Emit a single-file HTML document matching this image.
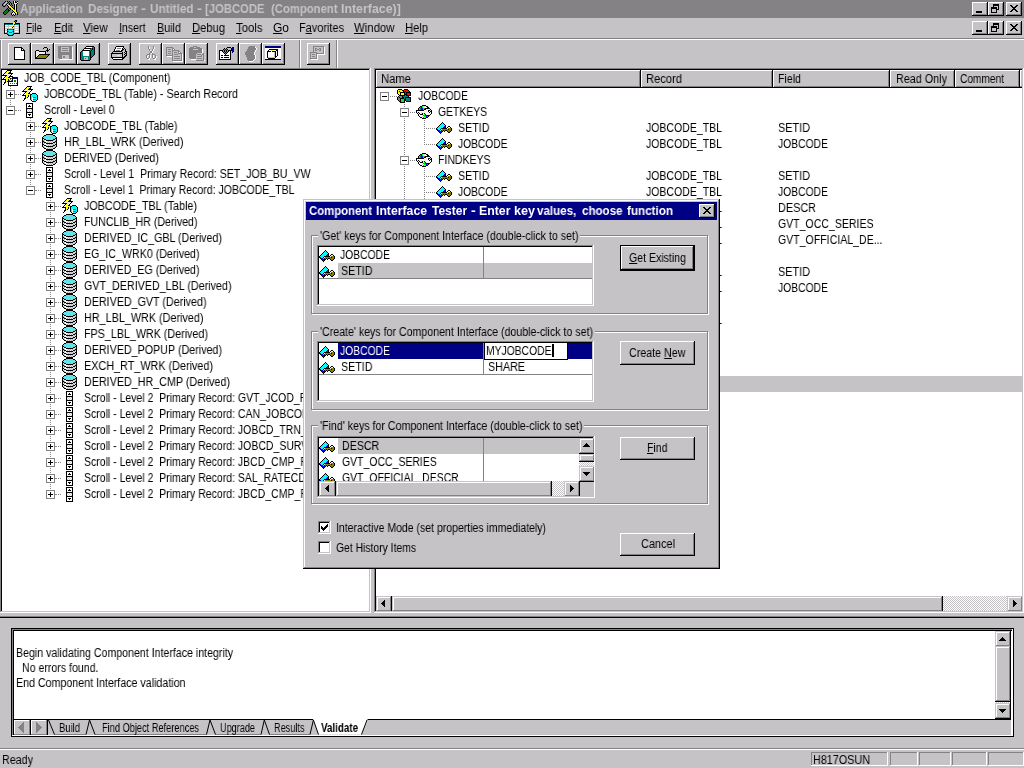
<!DOCTYPE html>
<html lang="en"><head><meta charset="utf-8"><title>Application Designer</title>
<style>
html,body{margin:0;padding:0}
body{width:1024px;height:768px;overflow:hidden;background:#c6c3c6;position:relative;font-family:"Liberation Sans",sans-serif;font-size:12px}
body div,body svg,body span.t{position:absolute}
span.t{white-space:pre;transform-origin:0 0;display:block;will-change:transform}
u{text-decoration:underline;text-underline-offset:1px}
</style></head>
<body>
<div style="left:0px;top:0px;width:1024px;height:18px;background:#848284;"></div><svg style="left:2px;top:1px" width="16" height="15" shape-rendering="crispEdges"><path fill="#000000" d="M3 0h1v1h-1zM5 0h1v1h-1zM7 0h1v1h-1zM11 0h1v1h-1zM13 0h1v1h-1zM15 0h1v1h-1zM2 1h1v1h-1zM6 1h1v1h-1zM8 1h1v1h-1zM11 1h1v1h-1zM13 1h2v1h-2zM1 2h1v1h-1zM5 2h1v1h-1zM7 2h1v1h-1zM9 2h1v1h-1zM11 2h1v1h-1zM15 2h1v1h-1zM0 3h1v1h-1zM4 3h1v1h-1zM7 3h1v1h-1zM9 3h1v1h-1zM12 3h1v1h-1zM14 3h1v1h-1zM0 4h1v1h-1zM3 4h1v1h-1zM5 4h1v1h-1zM8 4h1v1h-1zM10 4h1v1h-1zM12 4h1v1h-1zM14 4h1v1h-1zM1 5h2v1h-2zM6 5h1v1h-1zM9 5h1v1h-1zM12 5h1v1h-1zM14 5h1v1h-1zM6 6h1v1h-1zM10 6h1v1h-1zM12 6h1v1h-1zM14 6h1v1h-1zM5 7h1v1h-1zM7 7h2v1h-2zM11 7h2v1h-2zM14 7h1v1h-1zM4 8h1v1h-1zM6 8h1v1h-1zM8 8h1v1h-1zM12 8h1v1h-1zM14 8h1v1h-1zM3 9h1v1h-1zM6 9h2v1h-2zM10 9h1v1h-1zM14 9h1v1h-1zM2 10h1v1h-1zM6 10h1v1h-1zM11 10h1v1h-1zM14 10h1v1h-1zM1 11h1v1h-1zM5 11h1v1h-1zM10 11h1v1h-1zM12 11h1v1h-1zM15 11h1v1h-1zM1 12h1v1h-1zM4 12h1v1h-1zM9 12h1v1h-1zM13 12h1v1h-1zM15 12h1v1h-1zM2 13h2v1h-2zM9 13h1v1h-1zM11 13h1v1h-1zM13 13h1v1h-1zM15 13h1v1h-1zM10 14h1v1h-1zM12 14h1v1h-1z"/><path fill="#848284" d="M4 0h1v1h-1zM6 0h1v1h-1zM3 1h1v1h-1zM5 1h1v1h-1zM7 1h1v1h-1zM2 2h1v1h-1zM4 2h1v1h-1zM6 2h1v1h-1zM8 2h1v1h-1zM1 3h1v1h-1zM3 3h1v1h-1zM6 3h1v1h-1zM8 3h1v1h-1zM10 3h1v1h-1zM1 4h2v1h-2zM9 4h1v1h-1zM10 5h1v1h-1zM7 6h1v1h-1zM6 7h1v1h-1zM7 8h1v1h-1z"/><path fill="#ffffff" d="M12 0h1v1h-1z"/><path fill="#e7e3e7" d="M4 1h1v1h-1zM12 1h1v1h-1zM15 1h1v1h-1zM3 2h1v1h-1zM12 2h3v1h-3zM2 3h1v1h-1zM13 3h1v1h-1zM13 4h1v1h-1zM13 5h1v1h-1zM13 6h1v1h-1zM13 7h1v1h-1zM13 8h1v1h-1zM13 9h1v1h-1zM11 11h1v1h-1zM10 12h3v1h-3zM10 13h1v1h-1zM12 13h1v1h-1z"/><path fill="#ffff00" d="M5 3h1v1h-1zM6 4h2v1h-2zM7 5h2v1h-2zM8 6h2v1h-2zM9 7h2v1h-2zM10 8h2v1h-2zM11 9h2v1h-2zM12 10h2v1h-2zM13 11h2v1h-2zM14 12h1v1h-1z"/><path fill="#008200" d="M5 8h1v1h-1zM4 9h2v1h-2zM3 10h3v1h-3zM2 11h3v1h-3zM2 12h2v1h-2z"/></svg>
<span class="t" style="left:20.25px;top:3px;font-size:12px;line-height:12px;color:#c6c3c6;transform:scaleX(0.9603);font-weight:bold;">Application</span>
<span class="t" style="left:87.75px;top:3px;font-size:12px;line-height:12px;color:#c6c3c6;transform:scaleX(0.9687);font-weight:bold;">Designer</span>
<span class="t" style="left:141px;top:3px;font-size:12px;line-height:12px;color:#c6c3c6;transform:scaleX(1.2500);font-weight:bold;">-</span>
<span class="t" style="left:149.5px;top:3px;font-size:12px;line-height:12px;color:#c6c3c6;transform:scaleX(0.9738);font-weight:bold;">Untitled</span>
<span class="t" style="left:196.5px;top:3px;font-size:12px;line-height:12px;color:#c6c3c6;transform:scaleX(1.2500);font-weight:bold;">-</span>
<span class="t" style="left:204.5px;top:3px;font-size:12px;line-height:12px;color:#c6c3c6;transform:scaleX(0.9393);font-weight:bold;">[JOBCODE</span>
<span class="t" style="left:270.5px;top:3px;font-size:12px;line-height:12px;color:#c6c3c6;transform:scaleX(0.9412);font-weight:bold;">(Component</span>
<span class="t" style="left:341.25px;top:3px;font-size:12px;line-height:12px;color:#c6c3c6;transform:scaleX(1.0299);font-weight:bold;">Interface)]</span>
<div style="left:972px;top:2px;width:16px;height:14px;background:#c6c3c6;"></div>
<div style="left:972px;top:2px;width:16px;height:1px;background:#ffffff;"></div>
<div style="left:972px;top:2px;width:1px;height:14px;background:#ffffff;"></div>
<div style="left:972px;top:15px;width:16px;height:1px;background:#000000;"></div>
<div style="left:987px;top:2px;width:1px;height:14px;background:#000000;"></div>
<div style="left:973px;top:14px;width:14px;height:1px;background:#848284;"></div>
<div style="left:986px;top:3px;width:1px;height:12px;background:#848284;"></div>
<div style="left:976px;top:11px;width:6px;height:2px;background:#000000;"></div>
<div style="left:988px;top:2px;width:16px;height:14px;background:#c6c3c6;"></div>
<div style="left:988px;top:2px;width:16px;height:1px;background:#ffffff;"></div>
<div style="left:988px;top:2px;width:1px;height:14px;background:#ffffff;"></div>
<div style="left:988px;top:15px;width:16px;height:1px;background:#000000;"></div>
<div style="left:1003px;top:2px;width:1px;height:14px;background:#000000;"></div>
<div style="left:989px;top:14px;width:14px;height:1px;background:#848284;"></div>
<div style="left:1002px;top:3px;width:1px;height:12px;background:#848284;"></div>
<div style="left:993px;top:4px;width:6px;height:2px;background:#000000;"></div>
<div style="left:993px;top:4px;width:6px;height:1px;background:#000000;"></div>
<div style="left:993px;top:4px;width:1px;height:6px;background:#000000;"></div>
<div style="left:993px;top:9px;width:6px;height:1px;background:#000000;"></div>
<div style="left:998px;top:4px;width:1px;height:6px;background:#000000;"></div>
<div style="left:991px;top:7px;width:6px;height:6px;background:#c6c3c6;"></div>
<div style="left:991px;top:7px;width:6px;height:2px;background:#000000;"></div>
<div style="left:991px;top:7px;width:6px;height:1px;background:#000000;"></div>
<div style="left:991px;top:7px;width:1px;height:6px;background:#000000;"></div>
<div style="left:991px;top:12px;width:6px;height:1px;background:#000000;"></div>
<div style="left:996px;top:7px;width:1px;height:6px;background:#000000;"></div>
<div style="left:1006px;top:2px;width:16px;height:14px;background:#c6c3c6;"></div>
<div style="left:1006px;top:2px;width:16px;height:1px;background:#ffffff;"></div>
<div style="left:1006px;top:2px;width:1px;height:14px;background:#ffffff;"></div>
<div style="left:1006px;top:15px;width:16px;height:1px;background:#000000;"></div>
<div style="left:1021px;top:2px;width:1px;height:14px;background:#000000;"></div>
<div style="left:1007px;top:14px;width:14px;height:1px;background:#848284;"></div>
<div style="left:1020px;top:3px;width:1px;height:12px;background:#848284;"></div><svg style="left:1010px;top:5px" width="8" height="7" shape-rendering="crispEdges"><path d="M0 0h2v1h-2zM6 0h2v1h-2zM1 1h2v1h-2zM5 1h2v1h-2zM2 2h4v1h-4zM3 3h2v1h-2zM2 4h4v1h-4zM1 5h2v1h-2zM5 5h2v1h-2zM0 6h2v1h-2zM6 6h2v1h-2z" fill="#000"/></svg>
<svg style="left:4px;top:20px" width="16" height="16" shape-rendering="crispEdges"><path fill="#000000" d="M11 0h2v1h-2zM10 1h1v1h-1zM12 1h1v1h-1zM11 2h1v1h-1zM0 3h9v1h-9zM11 3h5v1h-5zM0 4h1v1h-1zM10 4h1v1h-1zM15 4h1v1h-1zM0 5h1v1h-1zM15 5h1v1h-1zM0 6h1v1h-1zM9 6h1v1h-1zM15 6h1v1h-1zM0 7h1v1h-1zM8 7h1v1h-1zM15 7h1v1h-1zM0 8h1v1h-1zM15 8h1v1h-1zM0 9h1v1h-1zM3 9h1v1h-1zM9 9h1v1h-1zM15 9h1v1h-1zM0 10h1v1h-1zM15 10h1v1h-1zM0 11h1v1h-1zM3 11h1v1h-1zM9 11h1v1h-1zM15 11h1v1h-1zM0 12h1v1h-1zM15 12h1v1h-1zM0 13h3v1h-3zM10 13h6v1h-6zM3 14h1v1h-1zM9 14h1v1h-1zM4 15h5v1h-5z"/><path fill="#ff00ff" d="M11 1h1v1h-1z"/><path fill="#ffff00" d="M10 2h1v1h-1zM9 3h2v1h-2zM9 4h1v1h-1zM8 5h2v1h-2zM8 6h1v1h-1z"/><path fill="#008284" d="M1 4h8v1h-8zM11 4h4v1h-4zM4 9h5v1h-5zM3 10h1v1h-1zM9 10h1v1h-1zM4 11h1v1h-1zM8 11h1v1h-1zM3 12h1v1h-1zM5 12h3v1h-3zM9 12h1v1h-1zM3 13h1v1h-1zM9 13h1v1h-1zM4 14h1v1h-1zM8 14h1v1h-1z"/><path fill="#ffffff" d="M1 5h3v1h-3zM5 5h3v1h-3zM11 5h3v1h-3zM1 7h3v1h-3zM5 7h3v1h-3zM9 7h1v1h-1zM11 7h3v1h-3zM1 9h2v1h-2zM11 9h3v1h-3zM1 11h2v1h-2zM11 11h3v1h-3z"/><path fill="#c6c3c6" d="M4 5h1v1h-1zM10 5h1v1h-1zM14 5h1v1h-1zM1 6h7v1h-7zM10 6h5v1h-5zM4 7h1v1h-1zM10 7h1v1h-1zM14 7h1v1h-1zM1 8h14v1h-14zM10 9h1v1h-1zM14 9h1v1h-1zM1 10h2v1h-2zM10 10h5v1h-5zM10 11h1v1h-1zM14 11h1v1h-1zM1 12h2v1h-2zM10 12h5v1h-5z"/><path fill="#00ffff" d="M4 10h5v1h-5zM5 11h3v1h-3zM4 12h1v1h-1zM8 12h1v1h-1zM4 13h5v1h-5zM5 14h3v1h-3z"/></svg>
<span class="t" style="left:26px;top:22px;font-size:12px;line-height:12px;color:#000000;transform:scaleX(0.8265);"><u>F</u>ile</span>
<span class="t" style="left:53.5px;top:22px;font-size:12px;line-height:12px;color:#000000;transform:scaleX(0.9177);"><u>E</u>dit</span>
<span class="t" style="left:83px;top:22px;font-size:12px;line-height:12px;color:#000000;transform:scaleX(0.9492);"><u>V</u>iew</span>
<span class="t" style="left:118.5px;top:22px;font-size:12px;line-height:12px;color:#000000;transform:scaleX(0.8824);"><u>I</u>nsert</span>
<span class="t" style="left:156.5px;top:22px;font-size:12px;line-height:12px;color:#000000;transform:scaleX(0.8988);"><u>B</u>uild</span>
<span class="t" style="left:191.5px;top:22px;font-size:12px;line-height:12px;color:#000000;transform:scaleX(0.9329);"><u>D</u>ebug</span>
<span class="t" style="left:235.5px;top:22px;font-size:12px;line-height:12px;color:#000000;transform:scaleX(0.9459);"><u>T</u>ools</span>
<span class="t" style="left:273px;top:22px;font-size:12px;line-height:12px;color:#000000;transform:scaleX(0.9981);"><u>G</u>o</span>
<span class="t" style="left:299px;top:22px;font-size:12px;line-height:12px;color:#000000;transform:scaleX(0.9114);">F<u>a</u>vorites</span>
<span class="t" style="left:354px;top:22px;font-size:12px;line-height:12px;color:#000000;transform:scaleX(0.9488);"><u>W</u>indow</span>
<span class="t" style="left:405px;top:22px;font-size:12px;line-height:12px;color:#000000;transform:scaleX(0.9316);"><u>H</u>elp</span>
<div style="left:972px;top:21px;width:16px;height:14px;background:#c6c3c6;"></div>
<div style="left:972px;top:21px;width:16px;height:1px;background:#ffffff;"></div>
<div style="left:972px;top:21px;width:1px;height:14px;background:#ffffff;"></div>
<div style="left:972px;top:34px;width:16px;height:1px;background:#000000;"></div>
<div style="left:987px;top:21px;width:1px;height:14px;background:#000000;"></div>
<div style="left:973px;top:33px;width:14px;height:1px;background:#848284;"></div>
<div style="left:986px;top:22px;width:1px;height:12px;background:#848284;"></div>
<div style="left:976px;top:30px;width:6px;height:2px;background:#000000;"></div>
<div style="left:988px;top:21px;width:16px;height:14px;background:#c6c3c6;"></div>
<div style="left:988px;top:21px;width:16px;height:1px;background:#ffffff;"></div>
<div style="left:988px;top:21px;width:1px;height:14px;background:#ffffff;"></div>
<div style="left:988px;top:34px;width:16px;height:1px;background:#000000;"></div>
<div style="left:1003px;top:21px;width:1px;height:14px;background:#000000;"></div>
<div style="left:989px;top:33px;width:14px;height:1px;background:#848284;"></div>
<div style="left:1002px;top:22px;width:1px;height:12px;background:#848284;"></div>
<div style="left:993px;top:23px;width:6px;height:2px;background:#000000;"></div>
<div style="left:993px;top:23px;width:6px;height:1px;background:#000000;"></div>
<div style="left:993px;top:23px;width:1px;height:6px;background:#000000;"></div>
<div style="left:993px;top:28px;width:6px;height:1px;background:#000000;"></div>
<div style="left:998px;top:23px;width:1px;height:6px;background:#000000;"></div>
<div style="left:991px;top:26px;width:6px;height:6px;background:#c6c3c6;"></div>
<div style="left:991px;top:26px;width:6px;height:2px;background:#000000;"></div>
<div style="left:991px;top:26px;width:6px;height:1px;background:#000000;"></div>
<div style="left:991px;top:26px;width:1px;height:6px;background:#000000;"></div>
<div style="left:991px;top:31px;width:6px;height:1px;background:#000000;"></div>
<div style="left:996px;top:26px;width:1px;height:6px;background:#000000;"></div>
<div style="left:1006px;top:21px;width:16px;height:14px;background:#c6c3c6;"></div>
<div style="left:1006px;top:21px;width:16px;height:1px;background:#ffffff;"></div>
<div style="left:1006px;top:21px;width:1px;height:14px;background:#ffffff;"></div>
<div style="left:1006px;top:34px;width:16px;height:1px;background:#000000;"></div>
<div style="left:1021px;top:21px;width:1px;height:14px;background:#000000;"></div>
<div style="left:1007px;top:33px;width:14px;height:1px;background:#848284;"></div>
<div style="left:1020px;top:22px;width:1px;height:12px;background:#848284;"></div><svg style="left:1010px;top:24px" width="8" height="7" shape-rendering="crispEdges"><path d="M0 0h2v1h-2zM6 0h2v1h-2zM1 1h2v1h-2zM5 1h2v1h-2zM2 2h4v1h-4zM3 3h2v1h-2zM2 4h4v1h-4zM1 5h2v1h-2zM5 5h2v1h-2zM0 6h2v1h-2zM6 6h2v1h-2z" fill="#000"/></svg>
<div style="left:0px;top:38px;width:1024px;height:1px;background:#848284;"></div>
<div style="left:0px;top:39px;width:1024px;height:1px;background:#ffffff;"></div>
<div style="left:0px;top:40px;width:1px;height:28px;background:#848284;"></div>
<div style="left:1px;top:40px;width:1px;height:28px;background:#ffffff;"></div>
<div style="left:8px;top:43px;width:23px;height:22px;background:#c6c3c6;"></div>
<div style="left:8px;top:43px;width:23px;height:1px;background:#ffffff;"></div>
<div style="left:8px;top:43px;width:1px;height:22px;background:#ffffff;"></div>
<div style="left:8px;top:64px;width:23px;height:1px;background:#000000;"></div>
<div style="left:30px;top:43px;width:1px;height:22px;background:#000000;"></div>
<div style="left:9px;top:63px;width:21px;height:1px;background:#848284;"></div>
<div style="left:29px;top:44px;width:1px;height:20px;background:#848284;"></div><svg style="left:14px;top:47px" width="11" height="13" shape-rendering="crispEdges"><path fill="#000000" d="M0 0h8v1h-8zM0 1h1v1h-1zM7 1h2v1h-2zM0 2h1v1h-1zM7 2h1v1h-1zM9 2h1v1h-1zM0 3h1v1h-1zM7 3h4v1h-4zM0 4h1v1h-1zM10 4h1v1h-1zM0 5h1v1h-1zM10 5h1v1h-1zM0 6h1v1h-1zM10 6h1v1h-1zM0 7h1v1h-1zM10 7h1v1h-1zM0 8h1v1h-1zM10 8h1v1h-1zM0 9h1v1h-1zM10 9h1v1h-1zM0 10h1v1h-1zM10 10h1v1h-1zM0 11h1v1h-1zM10 11h1v1h-1zM0 12h11v1h-11z"/><path fill="#ffffff" d="M1 1h6v1h-6zM1 2h6v1h-6zM8 2h1v1h-1zM1 3h6v1h-6zM1 4h9v1h-9zM1 5h9v1h-9zM1 6h9v1h-9zM1 7h9v1h-9zM1 8h9v1h-9zM1 9h9v1h-9zM1 10h9v1h-9zM1 11h9v1h-9z"/></svg>
<div style="left:31px;top:43px;width:23px;height:22px;background:#c6c3c6;"></div>
<div style="left:31px;top:43px;width:23px;height:1px;background:#ffffff;"></div>
<div style="left:31px;top:43px;width:1px;height:22px;background:#ffffff;"></div>
<div style="left:31px;top:64px;width:23px;height:1px;background:#000000;"></div>
<div style="left:53px;top:43px;width:1px;height:22px;background:#000000;"></div>
<div style="left:32px;top:63px;width:21px;height:1px;background:#848284;"></div>
<div style="left:52px;top:44px;width:1px;height:20px;background:#848284;"></div><svg style="left:35px;top:47px" width="15" height="12" shape-rendering="crispEdges"><path fill="#000000" d="M9 0h3v1h-3zM8 1h1v1h-1zM12 1h1v1h-1zM12 2h1v1h-1zM14 2h1v1h-1zM1 3h3v1h-3zM11 3h3v1h-3zM0 4h1v1h-1zM4 4h7v1h-7zM12 4h1v1h-1zM0 5h1v1h-1zM10 5h1v1h-1zM0 6h1v1h-1zM10 6h1v1h-1zM0 7h1v1h-1zM4 7h11v1h-11zM0 8h1v1h-1zM3 8h1v1h-1zM13 8h1v1h-1zM0 9h1v1h-1zM2 9h1v1h-1zM12 9h1v1h-1zM0 10h2v1h-2zM11 10h1v1h-1zM0 11h11v1h-11z"/><path fill="#ffff00" d="M1 4h1v1h-1zM3 4h1v1h-1zM2 5h1v1h-1zM4 5h1v1h-1zM6 5h1v1h-1zM8 5h1v1h-1zM1 6h1v1h-1zM3 6h1v1h-1zM5 6h1v1h-1zM7 6h1v1h-1zM9 6h1v1h-1zM2 7h1v1h-1zM1 8h1v1h-1z"/><path fill="#ffffff" d="M2 4h1v1h-1zM1 5h1v1h-1zM3 5h1v1h-1zM5 5h1v1h-1zM7 5h1v1h-1zM9 5h1v1h-1zM2 6h1v1h-1zM4 6h1v1h-1zM6 6h1v1h-1zM8 6h1v1h-1zM1 7h1v1h-1zM3 7h1v1h-1zM2 8h1v1h-1zM1 9h1v1h-1z"/><path fill="#848200" d="M4 8h9v1h-9zM3 9h9v1h-9zM2 10h9v1h-9z"/></svg>
<div style="left:54px;top:43px;width:23px;height:22px;background:#c6c3c6;"></div>
<div style="left:54px;top:43px;width:23px;height:1px;background:#ffffff;"></div>
<div style="left:54px;top:43px;width:1px;height:22px;background:#ffffff;"></div>
<div style="left:54px;top:64px;width:23px;height:1px;background:#000000;"></div>
<div style="left:76px;top:43px;width:1px;height:22px;background:#000000;"></div>
<div style="left:55px;top:63px;width:21px;height:1px;background:#848284;"></div>
<div style="left:75px;top:44px;width:1px;height:20px;background:#848284;"></div><svg style="left:58px;top:46px" width="15" height="14" shape-rendering="crispEdges"><path fill="#848284" d="M0 0h14v1h-14zM0 1h3v1h-3zM11 1h3v1h-3zM0 2h3v1h-3zM4 2h6v1h-6zM11 2h3v1h-3zM0 3h3v1h-3zM11 3h3v1h-3zM0 4h3v1h-3zM4 4h6v1h-6zM11 4h3v1h-3zM0 5h3v1h-3zM11 5h3v1h-3zM0 6h14v1h-14zM0 7h14v1h-14zM0 8h14v1h-14zM0 9h4v1h-4zM11 9h3v1h-3zM0 10h4v1h-4zM5 10h2v1h-2zM11 10h3v1h-3zM0 11h4v1h-4zM5 11h2v1h-2zM11 11h3v1h-3zM1 12h3v1h-3zM11 12h3v1h-3z"/><path fill="#c6c3c6" d="M3 1h8v1h-8zM3 2h1v1h-1zM10 2h1v1h-1zM3 3h8v1h-8zM3 4h1v1h-1zM10 4h1v1h-1zM3 5h8v1h-8zM4 9h7v1h-7zM4 10h1v1h-1zM7 10h4v1h-4zM4 11h1v1h-1zM7 11h4v1h-4zM4 12h7v1h-7z"/><path fill="#ffffff" d="M14 1h1v1h-1zM14 2h1v1h-1zM14 3h1v1h-1zM14 4h1v1h-1zM14 5h1v1h-1zM14 6h1v1h-1zM14 7h1v1h-1zM14 8h1v1h-1zM14 9h1v1h-1zM14 10h1v1h-1zM14 11h1v1h-1zM14 12h1v1h-1zM2 13h13v1h-13z"/></svg>
<div style="left:77px;top:43px;width:23px;height:22px;background:#c6c3c6;"></div>
<div style="left:77px;top:43px;width:23px;height:1px;background:#ffffff;"></div>
<div style="left:77px;top:43px;width:1px;height:22px;background:#ffffff;"></div>
<div style="left:77px;top:64px;width:23px;height:1px;background:#000000;"></div>
<div style="left:99px;top:43px;width:1px;height:22px;background:#000000;"></div>
<div style="left:78px;top:63px;width:21px;height:1px;background:#848284;"></div>
<div style="left:98px;top:44px;width:1px;height:20px;background:#848284;"></div><svg style="left:80px;top:46px" width="15" height="15" shape-rendering="crispEdges"><path fill="#000000" d="M6 0h8v1h-8zM5 1h1v1h-1zM14 1h1v1h-1zM4 2h7v1h-7zM12 2h1v1h-1zM14 2h1v1h-1zM3 3h1v1h-1zM12 3h1v1h-1zM14 3h1v1h-1zM2 4h8v1h-8zM11 4h1v1h-1zM14 4h1v1h-1zM1 5h1v1h-1zM10 5h1v1h-1zM14 5h1v1h-1zM0 6h1v1h-1zM10 6h1v1h-1zM14 6h1v1h-1zM0 7h1v1h-1zM10 7h1v1h-1zM14 7h1v1h-1zM0 8h1v1h-1zM10 8h1v1h-1zM14 8h1v1h-1zM0 9h1v1h-1zM10 9h1v1h-1zM13 9h1v1h-1zM0 10h1v1h-1zM10 10h1v1h-1zM12 10h1v1h-1zM0 11h1v1h-1zM10 11h2v1h-2zM0 12h1v1h-1zM10 12h1v1h-1zM0 13h1v1h-1zM10 13h1v1h-1zM1 14h9v1h-9z"/><path fill="#ffffff" d="M6 1h6v1h-6zM4 3h6v1h-6zM3 5h6v1h-6zM3 6h6v1h-6zM3 7h6v1h-6zM3 8h6v1h-6zM3 9h6v1h-6z"/><path fill="#008284" d="M12 1h2v1h-2zM11 2h1v1h-1zM13 2h1v1h-1zM10 3h2v1h-2zM13 3h1v1h-1zM10 4h1v1h-1zM12 4h2v1h-2zM2 5h1v1h-1zM9 5h1v1h-1zM11 5h3v1h-3zM1 6h2v1h-2zM9 6h1v1h-1zM11 6h3v1h-3zM1 7h2v1h-2zM9 7h1v1h-1zM11 7h3v1h-3zM1 8h2v1h-2zM9 8h1v1h-1zM11 8h3v1h-3zM1 9h2v1h-2zM9 9h1v1h-1zM11 9h2v1h-2zM1 10h9v1h-9zM11 10h1v1h-1zM1 11h3v1h-3zM8 11h2v1h-2zM1 12h3v1h-3zM5 12h1v1h-1zM8 12h2v1h-2zM1 13h3v1h-3zM8 13h2v1h-2z"/><path fill="#c6c3c6" d="M4 11h4v1h-4zM4 12h1v1h-1zM6 12h2v1h-2zM4 13h4v1h-4z"/></svg>
<div style="left:108px;top:43px;width:23px;height:22px;background:#c6c3c6;"></div>
<div style="left:108px;top:43px;width:23px;height:1px;background:#ffffff;"></div>
<div style="left:108px;top:43px;width:1px;height:22px;background:#ffffff;"></div>
<div style="left:108px;top:64px;width:23px;height:1px;background:#000000;"></div>
<div style="left:130px;top:43px;width:1px;height:22px;background:#000000;"></div>
<div style="left:109px;top:63px;width:21px;height:1px;background:#848284;"></div>
<div style="left:129px;top:44px;width:1px;height:20px;background:#848284;"></div><svg style="left:111px;top:46px" width="16" height="14" shape-rendering="crispEdges"><path fill="#000000" d="M5 0h8v1h-8zM4 1h1v1h-1zM12 1h1v1h-1zM4 2h1v1h-1zM11 2h1v1h-1zM13 2h1v1h-1zM3 3h1v1h-1zM11 3h2v1h-2zM14 3h1v1h-1zM3 4h1v1h-1zM10 4h2v1h-2zM14 4h1v1h-1zM2 5h9v1h-9zM14 5h2v1h-2zM1 6h1v1h-1zM11 6h1v1h-1zM13 6h1v1h-1zM15 6h1v1h-1zM0 7h12v1h-12zM14 7h2v1h-2zM0 8h1v1h-1zM11 8h1v1h-1zM13 8h1v1h-1zM15 8h1v1h-1zM0 9h1v1h-1zM11 9h1v1h-1zM14 9h2v1h-2zM0 10h1v1h-1zM11 10h1v1h-1zM13 10h2v1h-2zM0 11h14v1h-14zM1 12h1v1h-1zM11 12h2v1h-2zM2 13h10v1h-10z"/><path fill="#ffffff" d="M5 1h7v1h-7zM5 2h1v1h-1zM10 2h1v1h-1zM4 3h7v1h-7zM4 4h1v1h-1zM9 4h1v1h-1zM2 12h9v1h-9z"/><path fill="#848284" d="M6 2h4v1h-4zM5 4h4v1h-4z"/><path fill="#c6c3c6" d="M13 3h1v1h-1zM12 4h2v1h-2zM11 5h3v1h-3zM2 6h9v1h-9zM12 6h1v1h-1zM14 6h1v1h-1zM12 7h2v1h-2zM1 8h10v1h-10zM12 8h1v1h-1zM14 8h1v1h-1zM1 9h5v1h-5zM9 9h2v1h-2zM12 9h2v1h-2zM1 10h10v1h-10zM12 10h1v1h-1z"/><path fill="#ffff00" d="M6 9h3v1h-3z"/></svg>
<div style="left:139px;top:43px;width:23px;height:22px;background:#c6c3c6;"></div>
<div style="left:139px;top:43px;width:23px;height:1px;background:#ffffff;"></div>
<div style="left:139px;top:43px;width:1px;height:22px;background:#ffffff;"></div>
<div style="left:139px;top:64px;width:23px;height:1px;background:#000000;"></div>
<div style="left:161px;top:43px;width:1px;height:22px;background:#000000;"></div>
<div style="left:140px;top:63px;width:21px;height:1px;background:#848284;"></div>
<div style="left:160px;top:44px;width:1px;height:20px;background:#848284;"></div><svg style="left:146px;top:46px" width="11" height="14" shape-rendering="crispEdges"><path fill="#848284" d="M2 0h1v1h-1zM7 0h1v1h-1zM2 1h1v1h-1zM7 1h1v1h-1zM2 2h1v1h-1zM7 2h1v1h-1zM3 3h1v1h-1zM6 3h1v1h-1zM3 4h1v1h-1zM6 4h1v1h-1zM4 5h2v1h-2zM4 6h2v1h-2zM3 7h1v1h-1zM6 7h1v1h-1zM1 8h3v1h-3zM6 8h3v1h-3zM0 9h1v1h-1zM3 9h1v1h-1zM6 9h1v1h-1zM9 9h1v1h-1zM0 10h1v1h-1zM3 10h1v1h-1zM6 10h1v1h-1zM9 10h1v1h-1zM0 11h1v1h-1zM3 11h1v1h-1zM6 11h1v1h-1zM9 11h1v1h-1zM1 12h2v1h-2zM7 12h2v1h-2z"/><path fill="#ffffff" d="M3 1h1v1h-1zM8 1h1v1h-1zM3 2h1v1h-1zM8 2h1v1h-1zM7 3h1v1h-1zM4 4h1v1h-1zM7 4h1v1h-1zM6 5h1v1h-1zM6 6h1v1h-1zM5 7h1v1h-1zM2 9h1v1h-1zM4 9h1v1h-1zM7 9h1v1h-1zM1 10h1v1h-1zM4 10h1v1h-1zM7 10h1v1h-1zM10 10h1v1h-1zM1 11h1v1h-1zM4 11h1v1h-1zM7 11h1v1h-1zM10 11h1v1h-1zM3 12h1v1h-1zM9 12h1v1h-1zM2 13h2v1h-2zM8 13h2v1h-2z"/></svg>
<div style="left:162px;top:43px;width:23px;height:22px;background:#c6c3c6;"></div>
<div style="left:162px;top:43px;width:23px;height:1px;background:#ffffff;"></div>
<div style="left:162px;top:43px;width:1px;height:22px;background:#ffffff;"></div>
<div style="left:162px;top:64px;width:23px;height:1px;background:#000000;"></div>
<div style="left:184px;top:43px;width:1px;height:22px;background:#000000;"></div>
<div style="left:163px;top:63px;width:21px;height:1px;background:#848284;"></div>
<div style="left:183px;top:44px;width:1px;height:20px;background:#848284;"></div><svg style="left:166px;top:47px" width="17" height="15" shape-rendering="crispEdges"><path fill="#848284" d="M0 0h7v1h-7zM0 1h1v1h-1zM6 1h2v1h-2zM0 2h1v1h-1zM2 2h3v1h-3zM6 2h1v1h-1zM8 2h1v1h-1zM0 3h1v1h-1zM6 3h7v1h-7zM0 4h1v1h-1zM2 4h3v1h-3zM6 4h1v1h-1zM12 4h2v1h-2zM0 5h1v1h-1zM6 5h1v1h-1zM8 5h3v1h-3zM12 5h1v1h-1zM14 5h1v1h-1zM0 6h1v1h-1zM2 6h3v1h-3zM6 6h1v1h-1zM12 6h4v1h-4zM0 7h1v1h-1zM6 7h1v1h-1zM8 7h4v1h-4zM15 7h1v1h-1zM0 8h7v1h-7zM15 8h1v1h-1zM6 9h1v1h-1zM8 9h6v1h-6zM15 9h1v1h-1zM6 10h1v1h-1zM15 10h1v1h-1zM6 11h1v1h-1zM8 11h6v1h-6zM15 11h1v1h-1zM6 12h1v1h-1zM15 12h1v1h-1zM6 13h10v1h-10z"/><path fill="#c6c3c6" d="M1 1h5v1h-5zM1 2h1v1h-1zM5 2h1v1h-1zM1 3h5v1h-5zM1 4h1v1h-1zM5 4h1v1h-1zM7 4h5v1h-5zM1 5h5v1h-5zM7 5h1v1h-1zM11 5h1v1h-1zM1 6h1v1h-1zM5 6h1v1h-1zM7 6h5v1h-5zM1 7h5v1h-5zM7 7h1v1h-1zM12 7h3v1h-3zM7 8h8v1h-8zM7 9h1v1h-1zM14 9h1v1h-1zM7 10h8v1h-8zM7 11h1v1h-1zM14 11h1v1h-1zM7 12h8v1h-8z"/><path fill="#ffffff" d="M7 2h1v1h-1zM13 5h1v1h-1zM16 7h1v1h-1zM16 8h1v1h-1zM1 9h5v1h-5zM16 9h1v1h-1zM16 10h1v1h-1zM16 11h1v1h-1zM16 12h1v1h-1zM16 13h1v1h-1zM7 14h10v1h-10z"/></svg>
<div style="left:185px;top:43px;width:23px;height:22px;background:#c6c3c6;"></div>
<div style="left:185px;top:43px;width:23px;height:1px;background:#ffffff;"></div>
<div style="left:185px;top:43px;width:1px;height:22px;background:#ffffff;"></div>
<div style="left:185px;top:64px;width:23px;height:1px;background:#000000;"></div>
<div style="left:207px;top:43px;width:1px;height:22px;background:#000000;"></div>
<div style="left:186px;top:63px;width:21px;height:1px;background:#848284;"></div>
<div style="left:206px;top:44px;width:1px;height:20px;background:#848284;"></div><svg style="left:188px;top:46px" width="17" height="15" shape-rendering="crispEdges"><path fill="#848284" d="M5 0h4v1h-4zM2 1h4v1h-4zM8 1h4v1h-4zM1 2h13v1h-13zM1 3h4v1h-4zM10 3h4v1h-4zM1 4h13v1h-13zM1 5h13v1h-13zM1 6h13v1h-13zM1 7h8v1h-8zM15 7h1v1h-1zM1 8h7v1h-7zM9 8h4v1h-4zM14 8h2v1h-2zM1 9h7v1h-7zM13 9h1v1h-1zM15 9h1v1h-1zM1 10h7v1h-7zM9 10h5v1h-5zM15 10h1v1h-1zM1 11h7v1h-7zM15 11h1v1h-1zM2 12h6v1h-6zM9 12h5v1h-5zM15 12h1v1h-1zM15 13h1v1h-1zM8 14h8v1h-8z"/><path fill="#c6c3c6" d="M6 1h2v1h-2zM5 3h5v1h-5zM9 7h6v1h-6zM8 8h1v1h-1zM13 8h1v1h-1zM8 9h5v1h-5zM14 9h1v1h-1zM8 10h1v1h-1zM14 10h1v1h-1zM8 11h7v1h-7zM8 12h1v1h-1zM14 12h1v1h-1zM8 13h7v1h-7z"/><path fill="#ffffff" d="M14 3h1v1h-1zM14 4h1v1h-1zM14 5h1v1h-1zM14 6h1v1h-1zM3 13h5v1h-5zM16 14h1v1h-1z"/></svg>
<div style="left:216px;top:43px;width:23px;height:22px;background:#c6c3c6;"></div>
<div style="left:216px;top:43px;width:23px;height:1px;background:#ffffff;"></div>
<div style="left:216px;top:43px;width:1px;height:22px;background:#ffffff;"></div>
<div style="left:216px;top:64px;width:23px;height:1px;background:#000000;"></div>
<div style="left:238px;top:43px;width:1px;height:22px;background:#000000;"></div>
<div style="left:217px;top:63px;width:21px;height:1px;background:#848284;"></div>
<div style="left:237px;top:44px;width:1px;height:20px;background:#848284;"></div><svg style="left:219px;top:47px" width="16" height="13" shape-rendering="crispEdges"><path fill="#000000" d="M8 0h4v1h-4zM5 1h1v1h-1zM7 1h1v1h-1zM12 1h1v1h-1zM4 2h1v1h-1zM6 2h1v1h-1zM8 2h1v1h-1zM12 2h1v1h-1zM0 3h4v1h-4zM5 3h1v1h-1zM7 3h1v1h-1zM9 3h4v1h-4zM0 4h1v1h-1zM3 4h1v1h-1zM5 4h1v1h-1zM7 4h1v1h-1zM9 4h1v1h-1zM11 4h1v1h-1zM0 5h1v1h-1zM4 5h1v1h-1zM6 5h1v1h-1zM8 5h1v1h-1zM11 5h1v1h-1zM0 6h1v1h-1zM5 6h1v1h-1zM7 6h1v1h-1zM11 6h1v1h-1zM0 7h1v1h-1zM6 7h1v1h-1zM11 7h1v1h-1zM0 8h1v1h-1zM2 8h2v1h-2zM5 8h5v1h-5zM11 8h1v1h-1zM0 9h1v1h-1zM11 9h1v1h-1zM0 10h1v1h-1zM2 10h2v1h-2zM5 10h5v1h-5zM11 10h1v1h-1zM0 11h1v1h-1zM11 11h1v1h-1zM0 12h12v1h-12z"/><path fill="#000084" d="M13 0h2v1h-2zM13 1h2v1h-2zM13 2h2v1h-2zM13 3h2v1h-2zM13 4h2v1h-2zM13 5h1v1h-1z"/><path fill="#848284" d="M5 2h1v1h-1zM7 2h1v1h-1zM4 3h1v1h-1zM6 3h1v1h-1zM8 3h1v1h-1zM4 4h1v1h-1zM6 4h1v1h-1zM8 4h1v1h-1zM5 5h1v1h-1zM7 5h1v1h-1zM6 6h1v1h-1z"/><path fill="#ffffff" d="M1 4h2v1h-2zM10 4h1v1h-1zM1 5h3v1h-3zM9 5h2v1h-2zM1 6h4v1h-4zM8 6h3v1h-3zM1 7h5v1h-5zM7 7h4v1h-4zM1 8h1v1h-1zM4 8h1v1h-1zM10 8h1v1h-1zM1 9h10v1h-10zM1 10h1v1h-1zM4 10h1v1h-1zM10 10h1v1h-1zM1 11h10v1h-10z"/></svg>
<div style="left:239px;top:43px;width:23px;height:22px;background:#c6c3c6;"></div>
<div style="left:239px;top:43px;width:23px;height:1px;background:#ffffff;"></div>
<div style="left:239px;top:43px;width:1px;height:22px;background:#ffffff;"></div>
<div style="left:239px;top:64px;width:23px;height:1px;background:#000000;"></div>
<div style="left:261px;top:43px;width:1px;height:22px;background:#000000;"></div>
<div style="left:240px;top:63px;width:21px;height:1px;background:#848284;"></div>
<div style="left:260px;top:44px;width:1px;height:20px;background:#848284;"></div><svg style="left:245px;top:46px" width="12" height="16" shape-rendering="crispEdges"><path fill="#848284" d="M4 0h6v1h-6zM3 1h7v1h-7zM3 2h8v1h-8zM2 3h9v1h-9zM2 4h8v1h-8zM1 5h9v1h-9zM0 6h9v1h-9zM0 7h9v1h-9zM0 8h9v1h-9zM1 9h9v1h-9zM1 10h9v1h-9zM2 11h8v1h-8zM2 12h8v1h-8zM2 13h7v1h-7zM3 14h5v1h-5z"/><path fill="#ffffff" d="M10 1h1v1h-1zM11 2h1v1h-1zM11 3h1v1h-1zM10 4h1v1h-1zM10 5h1v1h-1zM9 6h1v1h-1zM9 7h1v1h-1zM9 8h1v1h-1zM10 9h1v1h-1zM10 10h1v1h-1zM10 11h1v1h-1zM10 12h1v1h-1zM9 13h1v1h-1zM8 14h1v1h-1zM4 15h4v1h-4z"/></svg>
<div style="left:262px;top:43px;width:23px;height:22px;background:#c6c3c6;"></div>
<div style="left:262px;top:43px;width:23px;height:1px;background:#ffffff;"></div>
<div style="left:262px;top:43px;width:1px;height:22px;background:#ffffff;"></div>
<div style="left:262px;top:64px;width:23px;height:1px;background:#000000;"></div>
<div style="left:284px;top:43px;width:1px;height:22px;background:#000000;"></div>
<div style="left:263px;top:63px;width:21px;height:1px;background:#848284;"></div>
<div style="left:283px;top:44px;width:1px;height:20px;background:#848284;"></div><svg style="left:265px;top:46px" width="16" height="14" shape-rendering="crispEdges"><path fill="#000084" d="M0 0h16v1h-16zM0 1h16v1h-16z"/><path fill="#ffffff" d="M0 2h16v1h-16zM0 3h4v1h-4zM13 3h3v1h-3zM0 4h3v1h-3zM4 4h2v1h-2zM8 4h3v1h-3zM13 4h3v1h-3zM0 5h2v1h-2zM11 5h1v1h-1zM13 5h3v1h-3zM0 6h2v1h-2zM3 6h6v1h-6zM11 6h1v1h-1zM13 6h3v1h-3zM0 7h2v1h-2zM3 7h6v1h-6zM11 7h1v1h-1zM13 7h3v1h-3zM0 8h2v1h-2zM3 8h6v1h-6zM11 8h1v1h-1zM13 8h3v1h-3zM0 9h2v1h-2zM3 9h6v1h-6zM11 9h1v1h-1zM13 9h3v1h-3zM0 10h2v1h-2zM3 10h6v1h-6zM12 10h4v1h-4zM0 11h2v1h-2zM11 11h5v1h-5zM0 12h3v1h-3zM10 12h6v1h-6z"/><path fill="#000000" d="M4 3h9v1h-9zM3 4h1v1h-1zM11 4h2v1h-2zM2 5h4v1h-4zM7 5h4v1h-4zM12 5h1v1h-1zM2 6h1v1h-1zM10 6h1v1h-1zM12 6h1v1h-1zM2 7h1v1h-1zM10 7h1v1h-1zM12 7h1v1h-1zM2 8h1v1h-1zM10 8h1v1h-1zM12 8h1v1h-1zM2 9h1v1h-1zM10 9h1v1h-1zM12 9h1v1h-1zM2 10h1v1h-1zM10 10h2v1h-2zM2 11h1v1h-1zM10 11h1v1h-1zM3 12h7v1h-7zM0 13h16v1h-16z"/><path fill="#ffff00" d="M6 4h2v1h-2zM6 5h1v1h-1z"/><path fill="#c6c3c6" d="M9 6h1v1h-1zM9 7h1v1h-1zM9 8h1v1h-1zM9 9h1v1h-1zM9 10h1v1h-1zM3 11h7v1h-7z"/></svg>
<div style="left:307px;top:43px;width:23px;height:22px;background:#c6c3c6;"></div>
<div style="left:307px;top:43px;width:23px;height:1px;background:#ffffff;"></div>
<div style="left:307px;top:43px;width:1px;height:22px;background:#ffffff;"></div>
<div style="left:307px;top:64px;width:23px;height:1px;background:#000000;"></div>
<div style="left:329px;top:43px;width:1px;height:22px;background:#000000;"></div>
<div style="left:308px;top:63px;width:21px;height:1px;background:#848284;"></div>
<div style="left:328px;top:44px;width:1px;height:20px;background:#848284;"></div><svg style="left:310px;top:46px" width="16" height="14" shape-rendering="crispEdges"><path fill="#848284" d="M3 0h11v1h-11zM3 1h1v1h-1zM13 1h1v1h-1zM3 2h1v1h-1zM5 2h2v1h-2zM9 2h2v1h-2zM13 2h1v1h-1zM3 3h1v1h-1zM5 3h1v1h-1zM7 3h2v1h-2zM10 3h1v1h-1zM13 3h1v1h-1zM3 4h1v1h-1zM5 4h2v1h-2zM9 4h2v1h-2zM13 4h1v1h-1zM3 5h1v1h-1zM13 5h1v1h-1zM0 6h7v1h-7zM13 6h1v1h-1zM0 7h1v1h-1zM6 7h8v1h-8zM0 8h1v1h-1zM2 8h3v1h-3zM6 8h1v1h-1zM0 9h1v1h-1zM6 9h1v1h-1zM0 10h1v1h-1zM2 10h3v1h-3zM6 10h1v1h-1zM0 11h1v1h-1zM6 11h1v1h-1zM0 12h7v1h-7z"/><path fill="#c6c3c6" d="M4 1h9v1h-9zM4 2h1v1h-1zM7 2h2v1h-2zM11 2h2v1h-2zM4 3h1v1h-1zM6 3h1v1h-1zM9 3h1v1h-1zM11 3h2v1h-2zM4 4h1v1h-1zM7 4h2v1h-2zM11 4h2v1h-2zM4 5h9v1h-9zM7 6h6v1h-6zM1 7h5v1h-5zM1 8h1v1h-1zM5 8h1v1h-1zM1 9h5v1h-5zM1 10h1v1h-1zM5 10h1v1h-1zM1 11h5v1h-5z"/><path fill="#ffffff" d="M14 1h1v1h-1zM14 2h1v1h-1zM14 3h1v1h-1zM14 4h1v1h-1zM14 5h1v1h-1zM14 6h1v1h-1zM14 7h1v1h-1zM7 8h8v1h-8zM7 9h1v1h-1zM7 10h1v1h-1zM7 11h1v1h-1zM7 12h1v1h-1zM1 13h7v1h-7z"/></svg>
<div style="left:299px;top:40px;width:1px;height:28px;background:#848284;"></div>
<div style="left:300px;top:40px;width:1px;height:28px;background:#ffffff;"></div>
<div style="left:336px;top:40px;width:1px;height:28px;background:#848284;"></div>
<div style="left:337px;top:40px;width:1px;height:28px;background:#ffffff;"></div>
<div style="left:0px;top:68px;width:371px;height:545px;background:#ffffff;"></div>
<div style="left:0px;top:68px;width:371px;height:1px;background:#848284;"></div>
<div style="left:0px;top:68px;width:1px;height:545px;background:#848284;"></div>
<div style="left:1px;top:69px;width:369px;height:1px;background:#000000;"></div>
<div style="left:1px;top:69px;width:1px;height:543px;background:#000000;"></div>
<div style="left:369px;top:69px;width:1px;height:543px;background:#c6c3c6;"></div>
<div style="left:370px;top:68px;width:1px;height:545px;background:#ffffff;"></div>
<div style="left:1px;top:611px;width:369px;height:1px;background:#c6c3c6;"></div>
<div style="left:0px;top:612px;width:371px;height:1px;background:#ffffff;"></div>
<div style="left:10px;top:86px;width:1px;height:25px;background:repeating-linear-gradient(to bottom,#848284 0 1px,transparent 1px 2px) 0 0px"></div>
<div style="left:30px;top:118px;width:1px;height:73px;background:repeating-linear-gradient(to bottom,#848284 0 1px,transparent 1px 2px) 0 0px"></div>
<div style="left:50px;top:198px;width:1px;height:297px;background:repeating-linear-gradient(to bottom,#848284 0 1px,transparent 1px 2px) 0 0px"></div><svg style="left:2px;top:76px" width="16" height="10" shape-rendering="crispEdges"><path fill="#000000" d="M5 0h6v1h-6zM5 1h1v1h-1zM10 1h1v1h-1zM5 2h1v1h-1zM10 2h1v1h-1zM5 3h1v1h-1zM10 3h1v1h-1zM15 3h1v1h-1zM5 4h1v1h-1zM10 4h1v1h-1zM15 4h1v1h-1zM6 5h5v1h-5zM15 5h1v1h-1zM6 6h1v1h-1zM15 6h1v1h-1zM6 7h1v1h-1zM15 7h1v1h-1zM6 8h1v1h-1zM15 8h1v1h-1zM6 9h10v1h-10z"/><path fill="#ffffff" d="M6 1h4v1h-4zM6 2h1v1h-1zM8 2h1v1h-1zM6 3h2v1h-2zM9 3h1v1h-1zM11 3h4v1h-4zM6 4h1v1h-1zM8 4h1v1h-1zM11 4h1v1h-1zM14 4h1v1h-1zM11 5h1v1h-1zM14 5h1v1h-1zM7 6h8v1h-8zM7 7h1v1h-1zM9 7h1v1h-1zM11 7h1v1h-1zM13 7h1v1h-1zM7 8h8v1h-8z"/><path fill="#000084" d="M11 1h5v1h-5zM11 2h5v1h-5z"/><path fill="#ff00ff" d="M7 2h1v1h-1zM9 2h1v1h-1zM8 3h1v1h-1zM7 4h1v1h-1zM9 4h1v1h-1z"/><path fill="#008200" d="M12 4h2v1h-2zM12 5h2v1h-2zM8 7h1v1h-1zM10 7h1v1h-1zM12 7h1v1h-1zM14 7h1v1h-1z"/></svg>
<svg style="left:2px;top:70px" width="11" height="15" shape-rendering="crispEdges"><path fill="#000000" d="M5 0h5v1h-5zM4 1h1v1h-1zM8 1h1v1h-1zM3 2h1v1h-1zM7 2h2v1h-2zM2 3h1v1h-1zM6 3h5v1h-5zM1 4h1v1h-1zM9 4h1v1h-1zM0 5h5v1h-5zM8 5h1v1h-1zM3 6h1v1h-1zM7 6h1v1h-1zM2 7h1v1h-1zM6 7h2v1h-2zM1 8h1v1h-1zM8 8h1v1h-1zM0 9h4v1h-4zM6 9h1v1h-1zM3 10h1v1h-1zM6 10h1v1h-1zM3 11h1v1h-1zM5 11h1v1h-1zM2 12h2v1h-2zM2 13h1v1h-1zM1 14h1v1h-1z"/><path fill="#ffffff" d="M5 1h1v1h-1zM7 1h1v1h-1zM5 2h1v1h-1zM5 3h1v1h-1zM2 4h1v1h-1zM4 4h1v1h-1zM6 4h1v1h-1zM8 4h1v1h-1zM7 5h1v1h-1zM6 6h1v1h-1zM3 7h1v1h-1zM5 7h1v1h-1zM2 8h1v1h-1zM5 8h1v1h-1z"/><path fill="#ffff00" d="M6 1h1v1h-1zM4 2h1v1h-1zM6 2h1v1h-1zM3 3h2v1h-2zM3 4h1v1h-1zM5 4h1v1h-1zM7 4h1v1h-1zM5 5h2v1h-2zM4 6h2v1h-2zM4 7h1v1h-1zM3 8h2v1h-2zM6 8h2v1h-2zM4 9h2v1h-2zM4 10h2v1h-2zM4 11h1v1h-1z"/></svg>
<span class="t" style="left:23.5px;top:72px;font-size:12px;line-height:12px;color:#000000;transform:scaleX(0.8810);">JOB_CODE_TBL (Component)</span>
<div style="left:15px;top:94px;width:7px;height:1px;background:repeating-linear-gradient(to right,#848284 0 1px,transparent 1px 2px) 1px 0"></div>
<div style="left:6px;top:90px;width:9px;height:9px;background:#ffffff;"></div>
<div style="left:6px;top:90px;width:9px;height:1px;background:#848284;"></div>
<div style="left:6px;top:90px;width:1px;height:9px;background:#848284;"></div>
<div style="left:6px;top:98px;width:9px;height:1px;background:#848284;"></div>
<div style="left:14px;top:90px;width:1px;height:9px;background:#848284;"></div>
<div style="left:8px;top:94px;width:5px;height:1px;background:#000000;"></div>
<div style="left:10px;top:92px;width:1px;height:5px;background:#000000;"></div><svg style="left:22px;top:86px" width="11" height="15" shape-rendering="crispEdges"><path fill="#000000" d="M5 0h5v1h-5zM4 1h1v1h-1zM8 1h1v1h-1zM3 2h1v1h-1zM7 2h2v1h-2zM2 3h1v1h-1zM6 3h5v1h-5zM1 4h1v1h-1zM9 4h1v1h-1zM0 5h5v1h-5zM8 5h1v1h-1zM3 6h1v1h-1zM7 6h1v1h-1zM2 7h1v1h-1zM6 7h2v1h-2zM1 8h1v1h-1zM8 8h1v1h-1zM0 9h4v1h-4zM6 9h1v1h-1zM3 10h1v1h-1zM6 10h1v1h-1zM3 11h1v1h-1zM5 11h1v1h-1zM2 12h2v1h-2zM2 13h1v1h-1zM1 14h1v1h-1z"/><path fill="#ffffff" d="M5 1h1v1h-1zM7 1h1v1h-1zM5 2h1v1h-1zM5 3h1v1h-1zM2 4h1v1h-1zM4 4h1v1h-1zM6 4h1v1h-1zM8 4h1v1h-1zM7 5h1v1h-1zM6 6h1v1h-1zM3 7h1v1h-1zM5 7h1v1h-1zM2 8h1v1h-1zM5 8h1v1h-1z"/><path fill="#ffff00" d="M6 1h1v1h-1zM4 2h1v1h-1zM6 2h1v1h-1zM3 3h2v1h-2zM3 4h1v1h-1zM5 4h1v1h-1zM7 4h1v1h-1zM5 5h2v1h-2zM4 6h2v1h-2zM4 7h1v1h-1zM3 8h2v1h-2zM6 8h2v1h-2zM4 9h2v1h-2zM4 10h2v1h-2zM4 11h1v1h-1z"/></svg>
<svg style="left:30px;top:93px" width="8" height="9" shape-rendering="crispEdges"><path fill="#000000" d="M2 0h4v1h-4zM1 1h1v1h-1zM6 1h1v1h-1zM0 2h1v1h-1zM7 2h1v1h-1zM0 3h1v1h-1zM7 3h1v1h-1zM0 4h1v1h-1zM7 4h1v1h-1zM0 5h1v1h-1zM7 5h1v1h-1zM0 6h1v1h-1zM7 6h1v1h-1zM1 7h1v1h-1zM6 7h1v1h-1zM2 8h4v1h-4z"/><path fill="#00ffff" d="M2 1h4v1h-4zM1 2h6v1h-6zM1 3h6v1h-6zM1 4h1v1h-1zM6 4h1v1h-1zM1 5h1v1h-1zM3 5h4v1h-4zM1 6h1v1h-1zM6 6h1v1h-1zM3 7h3v1h-3z"/><path fill="#ffffff" d="M2 4h1v1h-1zM2 5h1v1h-1zM2 6h1v1h-1zM2 7h1v1h-1z"/><path fill="#008284" d="M3 4h3v1h-3zM3 6h3v1h-3z"/></svg>
<span class="t" style="left:43.5px;top:88px;font-size:12px;line-height:12px;color:#000000;transform:scaleX(0.8941);">JOBCODE_TBL (Table) - Search Record</span>
<div style="left:15px;top:110px;width:7px;height:1px;background:repeating-linear-gradient(to right,#848284 0 1px,transparent 1px 2px) 1px 0"></div>
<div style="left:6px;top:106px;width:9px;height:9px;background:#ffffff;"></div>
<div style="left:6px;top:106px;width:9px;height:1px;background:#848284;"></div>
<div style="left:6px;top:106px;width:1px;height:9px;background:#848284;"></div>
<div style="left:6px;top:114px;width:9px;height:1px;background:#848284;"></div>
<div style="left:14px;top:106px;width:1px;height:9px;background:#848284;"></div>
<div style="left:8px;top:110px;width:5px;height:1px;background:#000000;"></div><svg style="left:26px;top:103px" width="7" height="15" shape-rendering="crispEdges"><path fill="#000000" d="M0 0h7v1h-7zM0 1h1v1h-1zM6 1h1v1h-1zM0 2h1v1h-1zM3 2h1v1h-1zM6 2h1v1h-1zM0 3h1v1h-1zM2 3h3v1h-3zM6 3h1v1h-1zM0 4h1v1h-1zM6 4h1v1h-1zM0 5h7v1h-7zM0 6h1v1h-1zM6 6h1v1h-1zM0 7h1v1h-1zM6 7h1v1h-1zM0 8h1v1h-1zM6 8h1v1h-1zM0 9h7v1h-7zM0 10h1v1h-1zM6 10h1v1h-1zM0 11h1v1h-1zM2 11h3v1h-3zM6 11h1v1h-1zM0 12h1v1h-1zM3 12h1v1h-1zM6 12h1v1h-1zM0 13h1v1h-1zM6 13h1v1h-1zM0 14h7v1h-7z"/><path fill="#ffffff" d="M1 1h5v1h-5zM1 2h2v1h-2zM4 2h2v1h-2zM1 3h1v1h-1zM5 3h1v1h-1zM1 4h5v1h-5zM2 6h1v1h-1zM4 6h1v1h-1zM1 7h1v1h-1zM3 7h1v1h-1zM5 7h1v1h-1zM2 8h1v1h-1zM4 8h1v1h-1zM1 10h5v1h-5zM1 11h1v1h-1zM5 11h1v1h-1zM1 12h2v1h-2zM4 12h2v1h-2zM1 13h5v1h-5z"/><path fill="#c6c3c6" d="M1 6h1v1h-1zM3 6h1v1h-1zM5 6h1v1h-1zM2 7h1v1h-1zM4 7h1v1h-1zM1 8h1v1h-1zM3 8h1v1h-1zM5 8h1v1h-1z"/></svg>
<span class="t" style="left:43.5px;top:104px;font-size:12px;line-height:12px;color:#000000;transform:scaleX(0.8882);">Scroll - Level 0</span>
<div style="left:35px;top:126px;width:7px;height:1px;background:repeating-linear-gradient(to right,#848284 0 1px,transparent 1px 2px) 1px 0"></div>
<div style="left:26px;top:122px;width:9px;height:9px;background:#ffffff;"></div>
<div style="left:26px;top:122px;width:9px;height:1px;background:#848284;"></div>
<div style="left:26px;top:122px;width:1px;height:9px;background:#848284;"></div>
<div style="left:26px;top:130px;width:9px;height:1px;background:#848284;"></div>
<div style="left:34px;top:122px;width:1px;height:9px;background:#848284;"></div>
<div style="left:28px;top:126px;width:5px;height:1px;background:#000000;"></div>
<div style="left:30px;top:124px;width:1px;height:5px;background:#000000;"></div><svg style="left:42px;top:118px" width="11" height="15" shape-rendering="crispEdges"><path fill="#000000" d="M5 0h5v1h-5zM4 1h1v1h-1zM8 1h1v1h-1zM3 2h1v1h-1zM7 2h2v1h-2zM2 3h1v1h-1zM6 3h5v1h-5zM1 4h1v1h-1zM9 4h1v1h-1zM0 5h5v1h-5zM8 5h1v1h-1zM3 6h1v1h-1zM7 6h1v1h-1zM2 7h1v1h-1zM6 7h2v1h-2zM1 8h1v1h-1zM8 8h1v1h-1zM0 9h4v1h-4zM6 9h1v1h-1zM3 10h1v1h-1zM6 10h1v1h-1zM3 11h1v1h-1zM5 11h1v1h-1zM2 12h2v1h-2zM2 13h1v1h-1zM1 14h1v1h-1z"/><path fill="#ffffff" d="M5 1h1v1h-1zM7 1h1v1h-1zM5 2h1v1h-1zM5 3h1v1h-1zM2 4h1v1h-1zM4 4h1v1h-1zM6 4h1v1h-1zM8 4h1v1h-1zM7 5h1v1h-1zM6 6h1v1h-1zM3 7h1v1h-1zM5 7h1v1h-1zM2 8h1v1h-1zM5 8h1v1h-1z"/><path fill="#ffff00" d="M6 1h1v1h-1zM4 2h1v1h-1zM6 2h1v1h-1zM3 3h2v1h-2zM3 4h1v1h-1zM5 4h1v1h-1zM7 4h1v1h-1zM5 5h2v1h-2zM4 6h2v1h-2zM4 7h1v1h-1zM3 8h2v1h-2zM6 8h2v1h-2zM4 9h2v1h-2zM4 10h2v1h-2zM4 11h1v1h-1z"/></svg>
<svg style="left:50px;top:125px" width="8" height="9" shape-rendering="crispEdges"><path fill="#000000" d="M2 0h4v1h-4zM1 1h1v1h-1zM6 1h1v1h-1zM0 2h1v1h-1zM7 2h1v1h-1zM0 3h1v1h-1zM7 3h1v1h-1zM0 4h1v1h-1zM7 4h1v1h-1zM0 5h1v1h-1zM7 5h1v1h-1zM0 6h1v1h-1zM7 6h1v1h-1zM1 7h1v1h-1zM6 7h1v1h-1zM2 8h4v1h-4z"/><path fill="#00ffff" d="M2 1h4v1h-4zM1 2h6v1h-6zM1 3h6v1h-6zM1 4h1v1h-1zM6 4h1v1h-1zM1 5h1v1h-1zM3 5h4v1h-4zM1 6h1v1h-1zM6 6h1v1h-1zM3 7h3v1h-3z"/><path fill="#ffffff" d="M2 4h1v1h-1zM2 5h1v1h-1zM2 6h1v1h-1zM2 7h1v1h-1z"/><path fill="#008284" d="M3 4h3v1h-3zM3 6h3v1h-3z"/></svg>
<span class="t" style="left:63.5px;top:120px;font-size:12px;line-height:12px;color:#000000;transform:scaleX(0.8989);">JOBCODE_TBL (Table)</span>
<div style="left:35px;top:142px;width:7px;height:1px;background:repeating-linear-gradient(to right,#848284 0 1px,transparent 1px 2px) 1px 0"></div>
<div style="left:26px;top:138px;width:9px;height:9px;background:#ffffff;"></div>
<div style="left:26px;top:138px;width:9px;height:1px;background:#848284;"></div>
<div style="left:26px;top:138px;width:1px;height:9px;background:#848284;"></div>
<div style="left:26px;top:146px;width:9px;height:1px;background:#848284;"></div>
<div style="left:34px;top:138px;width:1px;height:9px;background:#848284;"></div>
<div style="left:28px;top:142px;width:5px;height:1px;background:#000000;"></div>
<div style="left:30px;top:140px;width:1px;height:5px;background:#000000;"></div><svg style="left:42px;top:134px" width="15" height="16" shape-rendering="crispEdges"><path fill="#000000" d="M4 0h7v1h-7zM2 1h2v1h-2zM11 1h2v1h-2zM1 2h1v1h-1zM13 2h1v1h-1zM0 3h1v1h-1zM14 3h1v1h-1zM0 4h2v1h-2zM13 4h2v1h-2zM0 5h1v1h-1zM2 5h2v1h-2zM11 5h2v1h-2zM14 5h1v1h-1zM0 6h1v1h-1zM4 6h7v1h-7zM14 6h1v1h-1zM0 7h2v1h-2zM13 7h2v1h-2zM0 8h1v1h-1zM2 8h2v1h-2zM11 8h2v1h-2zM14 8h1v1h-1zM0 9h1v1h-1zM4 9h7v1h-7zM14 9h1v1h-1zM0 10h2v1h-2zM13 10h2v1h-2zM0 11h1v1h-1zM2 11h2v1h-2zM11 11h2v1h-2zM14 11h1v1h-1zM0 12h1v1h-1zM4 12h7v1h-7zM14 12h1v1h-1zM1 13h1v1h-1zM13 13h1v1h-1zM2 14h2v1h-2zM11 14h2v1h-2zM4 15h7v1h-7z"/><path fill="#63e1e3" d="M4 1h7v1h-7zM2 2h11v1h-11zM1 3h13v1h-13zM2 4h11v1h-11zM4 5h7v1h-7z"/><path fill="#e7e3e7" d="M1 5h1v1h-1zM13 5h1v1h-1zM2 6h1v1h-1zM12 6h1v1h-1zM5 7h1v1h-1zM7 7h1v1h-1zM9 7h1v1h-1zM11 7h1v1h-1zM4 8h1v1h-1zM6 8h1v1h-1zM8 8h1v1h-1zM10 8h1v1h-1zM1 9h1v1h-1zM11 9h1v1h-1zM13 9h1v1h-1zM2 10h1v1h-1zM6 10h1v1h-1zM8 10h1v1h-1zM10 10h1v1h-1zM12 10h1v1h-1zM1 11h1v1h-1zM5 11h1v1h-1zM7 11h1v1h-1zM9 11h1v1h-1zM13 11h1v1h-1zM2 12h1v1h-1zM12 12h1v1h-1zM5 13h1v1h-1zM7 13h1v1h-1zM9 13h1v1h-1zM11 13h1v1h-1zM4 14h1v1h-1zM6 14h1v1h-1zM8 14h1v1h-1zM10 14h1v1h-1z"/><path fill="#00ffff" d="M1 6h1v1h-1zM11 6h1v1h-1zM13 6h1v1h-1zM2 7h1v1h-1zM6 7h1v1h-1zM8 7h1v1h-1zM10 7h1v1h-1zM12 7h1v1h-1zM1 8h1v1h-1zM5 8h1v1h-1zM7 8h1v1h-1zM9 8h1v1h-1zM13 8h1v1h-1zM2 9h1v1h-1zM12 9h1v1h-1zM5 10h1v1h-1zM7 10h1v1h-1zM9 10h1v1h-1zM11 10h1v1h-1zM4 11h1v1h-1zM6 11h1v1h-1zM8 11h1v1h-1zM10 11h1v1h-1zM1 12h1v1h-1zM11 12h1v1h-1zM13 12h1v1h-1zM2 13h1v1h-1zM6 13h1v1h-1zM8 13h1v1h-1zM10 13h1v1h-1zM12 13h1v1h-1zM5 14h1v1h-1zM7 14h1v1h-1zM9 14h1v1h-1z"/><path fill="#ffffff" d="M3 6h1v1h-1zM3 7h2v1h-2zM3 9h1v1h-1zM3 10h2v1h-2zM3 12h1v1h-1zM3 13h2v1h-2z"/></svg>
<span class="t" style="left:63.5px;top:136px;font-size:12px;line-height:12px;color:#000000;transform:scaleX(0.9005);">HR_LBL_WRK (Derived)</span>
<div style="left:35px;top:158px;width:7px;height:1px;background:repeating-linear-gradient(to right,#848284 0 1px,transparent 1px 2px) 1px 0"></div>
<div style="left:26px;top:154px;width:9px;height:9px;background:#ffffff;"></div>
<div style="left:26px;top:154px;width:9px;height:1px;background:#848284;"></div>
<div style="left:26px;top:154px;width:1px;height:9px;background:#848284;"></div>
<div style="left:26px;top:162px;width:9px;height:1px;background:#848284;"></div>
<div style="left:34px;top:154px;width:1px;height:9px;background:#848284;"></div>
<div style="left:28px;top:158px;width:5px;height:1px;background:#000000;"></div>
<div style="left:30px;top:156px;width:1px;height:5px;background:#000000;"></div><svg style="left:42px;top:150px" width="15" height="16" shape-rendering="crispEdges"><path fill="#000000" d="M4 0h7v1h-7zM2 1h2v1h-2zM11 1h2v1h-2zM1 2h1v1h-1zM13 2h1v1h-1zM0 3h1v1h-1zM14 3h1v1h-1zM0 4h2v1h-2zM13 4h2v1h-2zM0 5h1v1h-1zM2 5h2v1h-2zM11 5h2v1h-2zM14 5h1v1h-1zM0 6h1v1h-1zM4 6h7v1h-7zM14 6h1v1h-1zM0 7h2v1h-2zM13 7h2v1h-2zM0 8h1v1h-1zM2 8h2v1h-2zM11 8h2v1h-2zM14 8h1v1h-1zM0 9h1v1h-1zM4 9h7v1h-7zM14 9h1v1h-1zM0 10h2v1h-2zM13 10h2v1h-2zM0 11h1v1h-1zM2 11h2v1h-2zM11 11h2v1h-2zM14 11h1v1h-1zM0 12h1v1h-1zM4 12h7v1h-7zM14 12h1v1h-1zM1 13h1v1h-1zM13 13h1v1h-1zM2 14h2v1h-2zM11 14h2v1h-2zM4 15h7v1h-7z"/><path fill="#63e1e3" d="M4 1h7v1h-7zM2 2h11v1h-11zM1 3h13v1h-13zM2 4h11v1h-11zM4 5h7v1h-7z"/><path fill="#e7e3e7" d="M1 5h1v1h-1zM13 5h1v1h-1zM2 6h1v1h-1zM12 6h1v1h-1zM5 7h1v1h-1zM7 7h1v1h-1zM9 7h1v1h-1zM11 7h1v1h-1zM4 8h1v1h-1zM6 8h1v1h-1zM8 8h1v1h-1zM10 8h1v1h-1zM1 9h1v1h-1zM11 9h1v1h-1zM13 9h1v1h-1zM2 10h1v1h-1zM6 10h1v1h-1zM8 10h1v1h-1zM10 10h1v1h-1zM12 10h1v1h-1zM1 11h1v1h-1zM5 11h1v1h-1zM7 11h1v1h-1zM9 11h1v1h-1zM13 11h1v1h-1zM2 12h1v1h-1zM12 12h1v1h-1zM5 13h1v1h-1zM7 13h1v1h-1zM9 13h1v1h-1zM11 13h1v1h-1zM4 14h1v1h-1zM6 14h1v1h-1zM8 14h1v1h-1zM10 14h1v1h-1z"/><path fill="#00ffff" d="M1 6h1v1h-1zM11 6h1v1h-1zM13 6h1v1h-1zM2 7h1v1h-1zM6 7h1v1h-1zM8 7h1v1h-1zM10 7h1v1h-1zM12 7h1v1h-1zM1 8h1v1h-1zM5 8h1v1h-1zM7 8h1v1h-1zM9 8h1v1h-1zM13 8h1v1h-1zM2 9h1v1h-1zM12 9h1v1h-1zM5 10h1v1h-1zM7 10h1v1h-1zM9 10h1v1h-1zM11 10h1v1h-1zM4 11h1v1h-1zM6 11h1v1h-1zM8 11h1v1h-1zM10 11h1v1h-1zM1 12h1v1h-1zM11 12h1v1h-1zM13 12h1v1h-1zM2 13h1v1h-1zM6 13h1v1h-1zM8 13h1v1h-1zM10 13h1v1h-1zM12 13h1v1h-1zM5 14h1v1h-1zM7 14h1v1h-1zM9 14h1v1h-1z"/><path fill="#ffffff" d="M3 6h1v1h-1zM3 7h2v1h-2zM3 9h1v1h-1zM3 10h2v1h-2zM3 12h1v1h-1zM3 13h2v1h-2z"/></svg>
<span class="t" style="left:63.5px;top:152px;font-size:12px;line-height:12px;color:#000000;transform:scaleX(0.8960);">DERIVED (Derived)</span>
<div style="left:35px;top:174px;width:7px;height:1px;background:repeating-linear-gradient(to right,#848284 0 1px,transparent 1px 2px) 1px 0"></div>
<div style="left:26px;top:170px;width:9px;height:9px;background:#ffffff;"></div>
<div style="left:26px;top:170px;width:9px;height:1px;background:#848284;"></div>
<div style="left:26px;top:170px;width:1px;height:9px;background:#848284;"></div>
<div style="left:26px;top:178px;width:9px;height:1px;background:#848284;"></div>
<div style="left:34px;top:170px;width:1px;height:9px;background:#848284;"></div>
<div style="left:28px;top:174px;width:5px;height:1px;background:#000000;"></div>
<div style="left:30px;top:172px;width:1px;height:5px;background:#000000;"></div><svg style="left:46px;top:167px" width="7" height="15" shape-rendering="crispEdges"><path fill="#000000" d="M0 0h7v1h-7zM0 1h1v1h-1zM6 1h1v1h-1zM0 2h1v1h-1zM3 2h1v1h-1zM6 2h1v1h-1zM0 3h1v1h-1zM2 3h3v1h-3zM6 3h1v1h-1zM0 4h1v1h-1zM6 4h1v1h-1zM0 5h7v1h-7zM0 6h1v1h-1zM6 6h1v1h-1zM0 7h1v1h-1zM6 7h1v1h-1zM0 8h1v1h-1zM6 8h1v1h-1zM0 9h7v1h-7zM0 10h1v1h-1zM6 10h1v1h-1zM0 11h1v1h-1zM2 11h3v1h-3zM6 11h1v1h-1zM0 12h1v1h-1zM3 12h1v1h-1zM6 12h1v1h-1zM0 13h1v1h-1zM6 13h1v1h-1zM0 14h7v1h-7z"/><path fill="#ffffff" d="M1 1h5v1h-5zM1 2h2v1h-2zM4 2h2v1h-2zM1 3h1v1h-1zM5 3h1v1h-1zM1 4h5v1h-5zM2 6h1v1h-1zM4 6h1v1h-1zM1 7h1v1h-1zM3 7h1v1h-1zM5 7h1v1h-1zM2 8h1v1h-1zM4 8h1v1h-1zM1 10h5v1h-5zM1 11h1v1h-1zM5 11h1v1h-1zM1 12h2v1h-2zM4 12h2v1h-2zM1 13h5v1h-5z"/><path fill="#c6c3c6" d="M1 6h1v1h-1zM3 6h1v1h-1zM5 6h1v1h-1zM2 7h1v1h-1zM4 7h1v1h-1zM1 8h1v1h-1zM3 8h1v1h-1zM5 8h1v1h-1z"/></svg>
<span class="t" style="left:63.5px;top:168px;font-size:12px;line-height:12px;color:#000000;transform:scaleX(0.8843);">Scroll - Level 1  Primary Record: SET_JOB_BU_VW</span>
<div style="left:35px;top:190px;width:7px;height:1px;background:repeating-linear-gradient(to right,#848284 0 1px,transparent 1px 2px) 1px 0"></div>
<div style="left:26px;top:186px;width:9px;height:9px;background:#ffffff;"></div>
<div style="left:26px;top:186px;width:9px;height:1px;background:#848284;"></div>
<div style="left:26px;top:186px;width:1px;height:9px;background:#848284;"></div>
<div style="left:26px;top:194px;width:9px;height:1px;background:#848284;"></div>
<div style="left:34px;top:186px;width:1px;height:9px;background:#848284;"></div>
<div style="left:28px;top:190px;width:5px;height:1px;background:#000000;"></div><svg style="left:46px;top:183px" width="7" height="15" shape-rendering="crispEdges"><path fill="#000000" d="M0 0h7v1h-7zM0 1h1v1h-1zM6 1h1v1h-1zM0 2h1v1h-1zM3 2h1v1h-1zM6 2h1v1h-1zM0 3h1v1h-1zM2 3h3v1h-3zM6 3h1v1h-1zM0 4h1v1h-1zM6 4h1v1h-1zM0 5h7v1h-7zM0 6h1v1h-1zM6 6h1v1h-1zM0 7h1v1h-1zM6 7h1v1h-1zM0 8h1v1h-1zM6 8h1v1h-1zM0 9h7v1h-7zM0 10h1v1h-1zM6 10h1v1h-1zM0 11h1v1h-1zM2 11h3v1h-3zM6 11h1v1h-1zM0 12h1v1h-1zM3 12h1v1h-1zM6 12h1v1h-1zM0 13h1v1h-1zM6 13h1v1h-1zM0 14h7v1h-7z"/><path fill="#ffffff" d="M1 1h5v1h-5zM1 2h2v1h-2zM4 2h2v1h-2zM1 3h1v1h-1zM5 3h1v1h-1zM1 4h5v1h-5zM2 6h1v1h-1zM4 6h1v1h-1zM1 7h1v1h-1zM3 7h1v1h-1zM5 7h1v1h-1zM2 8h1v1h-1zM4 8h1v1h-1zM1 10h5v1h-5zM1 11h1v1h-1zM5 11h1v1h-1zM1 12h2v1h-2zM4 12h2v1h-2zM1 13h5v1h-5z"/><path fill="#c6c3c6" d="M1 6h1v1h-1zM3 6h1v1h-1zM5 6h1v1h-1zM2 7h1v1h-1zM4 7h1v1h-1zM1 8h1v1h-1zM3 8h1v1h-1zM5 8h1v1h-1z"/></svg>
<span class="t" style="left:63.5px;top:184px;font-size:12px;line-height:12px;color:#000000;transform:scaleX(0.8773);">Scroll - Level 1  Primary Record: JOBCODE_TBL</span>
<div style="left:55px;top:206px;width:7px;height:1px;background:repeating-linear-gradient(to right,#848284 0 1px,transparent 1px 2px) 1px 0"></div>
<div style="left:46px;top:202px;width:9px;height:9px;background:#ffffff;"></div>
<div style="left:46px;top:202px;width:9px;height:1px;background:#848284;"></div>
<div style="left:46px;top:202px;width:1px;height:9px;background:#848284;"></div>
<div style="left:46px;top:210px;width:9px;height:1px;background:#848284;"></div>
<div style="left:54px;top:202px;width:1px;height:9px;background:#848284;"></div>
<div style="left:48px;top:206px;width:5px;height:1px;background:#000000;"></div>
<div style="left:50px;top:204px;width:1px;height:5px;background:#000000;"></div><svg style="left:62px;top:198px" width="11" height="15" shape-rendering="crispEdges"><path fill="#000000" d="M5 0h5v1h-5zM4 1h1v1h-1zM8 1h1v1h-1zM3 2h1v1h-1zM7 2h2v1h-2zM2 3h1v1h-1zM6 3h5v1h-5zM1 4h1v1h-1zM9 4h1v1h-1zM0 5h5v1h-5zM8 5h1v1h-1zM3 6h1v1h-1zM7 6h1v1h-1zM2 7h1v1h-1zM6 7h2v1h-2zM1 8h1v1h-1zM8 8h1v1h-1zM0 9h4v1h-4zM6 9h1v1h-1zM3 10h1v1h-1zM6 10h1v1h-1zM3 11h1v1h-1zM5 11h1v1h-1zM2 12h2v1h-2zM2 13h1v1h-1zM1 14h1v1h-1z"/><path fill="#ffffff" d="M5 1h1v1h-1zM7 1h1v1h-1zM5 2h1v1h-1zM5 3h1v1h-1zM2 4h1v1h-1zM4 4h1v1h-1zM6 4h1v1h-1zM8 4h1v1h-1zM7 5h1v1h-1zM6 6h1v1h-1zM3 7h1v1h-1zM5 7h1v1h-1zM2 8h1v1h-1zM5 8h1v1h-1z"/><path fill="#ffff00" d="M6 1h1v1h-1zM4 2h1v1h-1zM6 2h1v1h-1zM3 3h2v1h-2zM3 4h1v1h-1zM5 4h1v1h-1zM7 4h1v1h-1zM5 5h2v1h-2zM4 6h2v1h-2zM4 7h1v1h-1zM3 8h2v1h-2zM6 8h2v1h-2zM4 9h2v1h-2zM4 10h2v1h-2zM4 11h1v1h-1z"/></svg>
<svg style="left:70px;top:205px" width="8" height="9" shape-rendering="crispEdges"><path fill="#000000" d="M2 0h4v1h-4zM1 1h1v1h-1zM6 1h1v1h-1zM0 2h1v1h-1zM7 2h1v1h-1zM0 3h1v1h-1zM7 3h1v1h-1zM0 4h1v1h-1zM7 4h1v1h-1zM0 5h1v1h-1zM7 5h1v1h-1zM0 6h1v1h-1zM7 6h1v1h-1zM1 7h1v1h-1zM6 7h1v1h-1zM2 8h4v1h-4z"/><path fill="#00ffff" d="M2 1h4v1h-4zM1 2h6v1h-6zM1 3h6v1h-6zM1 4h1v1h-1zM6 4h1v1h-1zM1 5h1v1h-1zM3 5h4v1h-4zM1 6h1v1h-1zM6 6h1v1h-1zM3 7h3v1h-3z"/><path fill="#ffffff" d="M2 4h1v1h-1zM2 5h1v1h-1zM2 6h1v1h-1zM2 7h1v1h-1z"/><path fill="#008284" d="M3 4h3v1h-3zM3 6h3v1h-3z"/></svg>
<span class="t" style="left:83.5px;top:200px;font-size:12px;line-height:12px;color:#000000;transform:scaleX(0.8949);">JOBCODE_TBL (Table)</span>
<div style="left:55px;top:222px;width:7px;height:1px;background:repeating-linear-gradient(to right,#848284 0 1px,transparent 1px 2px) 1px 0"></div>
<div style="left:46px;top:218px;width:9px;height:9px;background:#ffffff;"></div>
<div style="left:46px;top:218px;width:9px;height:1px;background:#848284;"></div>
<div style="left:46px;top:218px;width:1px;height:9px;background:#848284;"></div>
<div style="left:46px;top:226px;width:9px;height:1px;background:#848284;"></div>
<div style="left:54px;top:218px;width:1px;height:9px;background:#848284;"></div>
<div style="left:48px;top:222px;width:5px;height:1px;background:#000000;"></div>
<div style="left:50px;top:220px;width:1px;height:5px;background:#000000;"></div><svg style="left:62px;top:214px" width="15" height="16" shape-rendering="crispEdges"><path fill="#000000" d="M4 0h7v1h-7zM2 1h2v1h-2zM11 1h2v1h-2zM1 2h1v1h-1zM13 2h1v1h-1zM0 3h1v1h-1zM14 3h1v1h-1zM0 4h2v1h-2zM13 4h2v1h-2zM0 5h1v1h-1zM2 5h2v1h-2zM11 5h2v1h-2zM14 5h1v1h-1zM0 6h1v1h-1zM4 6h7v1h-7zM14 6h1v1h-1zM0 7h2v1h-2zM13 7h2v1h-2zM0 8h1v1h-1zM2 8h2v1h-2zM11 8h2v1h-2zM14 8h1v1h-1zM0 9h1v1h-1zM4 9h7v1h-7zM14 9h1v1h-1zM0 10h2v1h-2zM13 10h2v1h-2zM0 11h1v1h-1zM2 11h2v1h-2zM11 11h2v1h-2zM14 11h1v1h-1zM0 12h1v1h-1zM4 12h7v1h-7zM14 12h1v1h-1zM1 13h1v1h-1zM13 13h1v1h-1zM2 14h2v1h-2zM11 14h2v1h-2zM4 15h7v1h-7z"/><path fill="#63e1e3" d="M4 1h7v1h-7zM2 2h11v1h-11zM1 3h13v1h-13zM2 4h11v1h-11zM4 5h7v1h-7z"/><path fill="#e7e3e7" d="M1 5h1v1h-1zM13 5h1v1h-1zM2 6h1v1h-1zM12 6h1v1h-1zM5 7h1v1h-1zM7 7h1v1h-1zM9 7h1v1h-1zM11 7h1v1h-1zM4 8h1v1h-1zM6 8h1v1h-1zM8 8h1v1h-1zM10 8h1v1h-1zM1 9h1v1h-1zM11 9h1v1h-1zM13 9h1v1h-1zM2 10h1v1h-1zM6 10h1v1h-1zM8 10h1v1h-1zM10 10h1v1h-1zM12 10h1v1h-1zM1 11h1v1h-1zM5 11h1v1h-1zM7 11h1v1h-1zM9 11h1v1h-1zM13 11h1v1h-1zM2 12h1v1h-1zM12 12h1v1h-1zM5 13h1v1h-1zM7 13h1v1h-1zM9 13h1v1h-1zM11 13h1v1h-1zM4 14h1v1h-1zM6 14h1v1h-1zM8 14h1v1h-1zM10 14h1v1h-1z"/><path fill="#00ffff" d="M1 6h1v1h-1zM11 6h1v1h-1zM13 6h1v1h-1zM2 7h1v1h-1zM6 7h1v1h-1zM8 7h1v1h-1zM10 7h1v1h-1zM12 7h1v1h-1zM1 8h1v1h-1zM5 8h1v1h-1zM7 8h1v1h-1zM9 8h1v1h-1zM13 8h1v1h-1zM2 9h1v1h-1zM12 9h1v1h-1zM5 10h1v1h-1zM7 10h1v1h-1zM9 10h1v1h-1zM11 10h1v1h-1zM4 11h1v1h-1zM6 11h1v1h-1zM8 11h1v1h-1zM10 11h1v1h-1zM1 12h1v1h-1zM11 12h1v1h-1zM13 12h1v1h-1zM2 13h1v1h-1zM6 13h1v1h-1zM8 13h1v1h-1zM10 13h1v1h-1zM12 13h1v1h-1zM5 14h1v1h-1zM7 14h1v1h-1zM9 14h1v1h-1z"/><path fill="#ffffff" d="M3 6h1v1h-1zM3 7h2v1h-2zM3 9h1v1h-1zM3 10h2v1h-2zM3 12h1v1h-1zM3 13h2v1h-2z"/></svg>
<span class="t" style="left:83.5px;top:216px;font-size:12px;line-height:12px;color:#000000;transform:scaleX(0.8865);">FUNCLIB_HR (Derived)</span>
<div style="left:55px;top:238px;width:7px;height:1px;background:repeating-linear-gradient(to right,#848284 0 1px,transparent 1px 2px) 1px 0"></div>
<div style="left:46px;top:234px;width:9px;height:9px;background:#ffffff;"></div>
<div style="left:46px;top:234px;width:9px;height:1px;background:#848284;"></div>
<div style="left:46px;top:234px;width:1px;height:9px;background:#848284;"></div>
<div style="left:46px;top:242px;width:9px;height:1px;background:#848284;"></div>
<div style="left:54px;top:234px;width:1px;height:9px;background:#848284;"></div>
<div style="left:48px;top:238px;width:5px;height:1px;background:#000000;"></div>
<div style="left:50px;top:236px;width:1px;height:5px;background:#000000;"></div><svg style="left:62px;top:230px" width="15" height="16" shape-rendering="crispEdges"><path fill="#000000" d="M4 0h7v1h-7zM2 1h2v1h-2zM11 1h2v1h-2zM1 2h1v1h-1zM13 2h1v1h-1zM0 3h1v1h-1zM14 3h1v1h-1zM0 4h2v1h-2zM13 4h2v1h-2zM0 5h1v1h-1zM2 5h2v1h-2zM11 5h2v1h-2zM14 5h1v1h-1zM0 6h1v1h-1zM4 6h7v1h-7zM14 6h1v1h-1zM0 7h2v1h-2zM13 7h2v1h-2zM0 8h1v1h-1zM2 8h2v1h-2zM11 8h2v1h-2zM14 8h1v1h-1zM0 9h1v1h-1zM4 9h7v1h-7zM14 9h1v1h-1zM0 10h2v1h-2zM13 10h2v1h-2zM0 11h1v1h-1zM2 11h2v1h-2zM11 11h2v1h-2zM14 11h1v1h-1zM0 12h1v1h-1zM4 12h7v1h-7zM14 12h1v1h-1zM1 13h1v1h-1zM13 13h1v1h-1zM2 14h2v1h-2zM11 14h2v1h-2zM4 15h7v1h-7z"/><path fill="#63e1e3" d="M4 1h7v1h-7zM2 2h11v1h-11zM1 3h13v1h-13zM2 4h11v1h-11zM4 5h7v1h-7z"/><path fill="#e7e3e7" d="M1 5h1v1h-1zM13 5h1v1h-1zM2 6h1v1h-1zM12 6h1v1h-1zM5 7h1v1h-1zM7 7h1v1h-1zM9 7h1v1h-1zM11 7h1v1h-1zM4 8h1v1h-1zM6 8h1v1h-1zM8 8h1v1h-1zM10 8h1v1h-1zM1 9h1v1h-1zM11 9h1v1h-1zM13 9h1v1h-1zM2 10h1v1h-1zM6 10h1v1h-1zM8 10h1v1h-1zM10 10h1v1h-1zM12 10h1v1h-1zM1 11h1v1h-1zM5 11h1v1h-1zM7 11h1v1h-1zM9 11h1v1h-1zM13 11h1v1h-1zM2 12h1v1h-1zM12 12h1v1h-1zM5 13h1v1h-1zM7 13h1v1h-1zM9 13h1v1h-1zM11 13h1v1h-1zM4 14h1v1h-1zM6 14h1v1h-1zM8 14h1v1h-1zM10 14h1v1h-1z"/><path fill="#00ffff" d="M1 6h1v1h-1zM11 6h1v1h-1zM13 6h1v1h-1zM2 7h1v1h-1zM6 7h1v1h-1zM8 7h1v1h-1zM10 7h1v1h-1zM12 7h1v1h-1zM1 8h1v1h-1zM5 8h1v1h-1zM7 8h1v1h-1zM9 8h1v1h-1zM13 8h1v1h-1zM2 9h1v1h-1zM12 9h1v1h-1zM5 10h1v1h-1zM7 10h1v1h-1zM9 10h1v1h-1zM11 10h1v1h-1zM4 11h1v1h-1zM6 11h1v1h-1zM8 11h1v1h-1zM10 11h1v1h-1zM1 12h1v1h-1zM11 12h1v1h-1zM13 12h1v1h-1zM2 13h1v1h-1zM6 13h1v1h-1zM8 13h1v1h-1zM10 13h1v1h-1zM12 13h1v1h-1zM5 14h1v1h-1zM7 14h1v1h-1zM9 14h1v1h-1z"/><path fill="#ffffff" d="M3 6h1v1h-1zM3 7h2v1h-2zM3 9h1v1h-1zM3 10h2v1h-2zM3 12h1v1h-1zM3 13h2v1h-2z"/></svg>
<span class="t" style="left:83.5px;top:232px;font-size:12px;line-height:12px;color:#000000;transform:scaleX(0.8907);">DERIVED_IC_GBL (Derived)</span>
<div style="left:55px;top:254px;width:7px;height:1px;background:repeating-linear-gradient(to right,#848284 0 1px,transparent 1px 2px) 1px 0"></div>
<div style="left:46px;top:250px;width:9px;height:9px;background:#ffffff;"></div>
<div style="left:46px;top:250px;width:9px;height:1px;background:#848284;"></div>
<div style="left:46px;top:250px;width:1px;height:9px;background:#848284;"></div>
<div style="left:46px;top:258px;width:9px;height:1px;background:#848284;"></div>
<div style="left:54px;top:250px;width:1px;height:9px;background:#848284;"></div>
<div style="left:48px;top:254px;width:5px;height:1px;background:#000000;"></div>
<div style="left:50px;top:252px;width:1px;height:5px;background:#000000;"></div><svg style="left:62px;top:246px" width="15" height="16" shape-rendering="crispEdges"><path fill="#000000" d="M4 0h7v1h-7zM2 1h2v1h-2zM11 1h2v1h-2zM1 2h1v1h-1zM13 2h1v1h-1zM0 3h1v1h-1zM14 3h1v1h-1zM0 4h2v1h-2zM13 4h2v1h-2zM0 5h1v1h-1zM2 5h2v1h-2zM11 5h2v1h-2zM14 5h1v1h-1zM0 6h1v1h-1zM4 6h7v1h-7zM14 6h1v1h-1zM0 7h2v1h-2zM13 7h2v1h-2zM0 8h1v1h-1zM2 8h2v1h-2zM11 8h2v1h-2zM14 8h1v1h-1zM0 9h1v1h-1zM4 9h7v1h-7zM14 9h1v1h-1zM0 10h2v1h-2zM13 10h2v1h-2zM0 11h1v1h-1zM2 11h2v1h-2zM11 11h2v1h-2zM14 11h1v1h-1zM0 12h1v1h-1zM4 12h7v1h-7zM14 12h1v1h-1zM1 13h1v1h-1zM13 13h1v1h-1zM2 14h2v1h-2zM11 14h2v1h-2zM4 15h7v1h-7z"/><path fill="#63e1e3" d="M4 1h7v1h-7zM2 2h11v1h-11zM1 3h13v1h-13zM2 4h11v1h-11zM4 5h7v1h-7z"/><path fill="#e7e3e7" d="M1 5h1v1h-1zM13 5h1v1h-1zM2 6h1v1h-1zM12 6h1v1h-1zM5 7h1v1h-1zM7 7h1v1h-1zM9 7h1v1h-1zM11 7h1v1h-1zM4 8h1v1h-1zM6 8h1v1h-1zM8 8h1v1h-1zM10 8h1v1h-1zM1 9h1v1h-1zM11 9h1v1h-1zM13 9h1v1h-1zM2 10h1v1h-1zM6 10h1v1h-1zM8 10h1v1h-1zM10 10h1v1h-1zM12 10h1v1h-1zM1 11h1v1h-1zM5 11h1v1h-1zM7 11h1v1h-1zM9 11h1v1h-1zM13 11h1v1h-1zM2 12h1v1h-1zM12 12h1v1h-1zM5 13h1v1h-1zM7 13h1v1h-1zM9 13h1v1h-1zM11 13h1v1h-1zM4 14h1v1h-1zM6 14h1v1h-1zM8 14h1v1h-1zM10 14h1v1h-1z"/><path fill="#00ffff" d="M1 6h1v1h-1zM11 6h1v1h-1zM13 6h1v1h-1zM2 7h1v1h-1zM6 7h1v1h-1zM8 7h1v1h-1zM10 7h1v1h-1zM12 7h1v1h-1zM1 8h1v1h-1zM5 8h1v1h-1zM7 8h1v1h-1zM9 8h1v1h-1zM13 8h1v1h-1zM2 9h1v1h-1zM12 9h1v1h-1zM5 10h1v1h-1zM7 10h1v1h-1zM9 10h1v1h-1zM11 10h1v1h-1zM4 11h1v1h-1zM6 11h1v1h-1zM8 11h1v1h-1zM10 11h1v1h-1zM1 12h1v1h-1zM11 12h1v1h-1zM13 12h1v1h-1zM2 13h1v1h-1zM6 13h1v1h-1zM8 13h1v1h-1zM10 13h1v1h-1zM12 13h1v1h-1zM5 14h1v1h-1zM7 14h1v1h-1zM9 14h1v1h-1z"/><path fill="#ffffff" d="M3 6h1v1h-1zM3 7h2v1h-2zM3 9h1v1h-1zM3 10h2v1h-2zM3 12h1v1h-1zM3 13h2v1h-2z"/></svg>
<span class="t" style="left:83.5px;top:248px;font-size:12px;line-height:12px;color:#000000;transform:scaleX(0.8882);">EG_IC_WRK0 (Derived)</span>
<div style="left:55px;top:270px;width:7px;height:1px;background:repeating-linear-gradient(to right,#848284 0 1px,transparent 1px 2px) 1px 0"></div>
<div style="left:46px;top:266px;width:9px;height:9px;background:#ffffff;"></div>
<div style="left:46px;top:266px;width:9px;height:1px;background:#848284;"></div>
<div style="left:46px;top:266px;width:1px;height:9px;background:#848284;"></div>
<div style="left:46px;top:274px;width:9px;height:1px;background:#848284;"></div>
<div style="left:54px;top:266px;width:1px;height:9px;background:#848284;"></div>
<div style="left:48px;top:270px;width:5px;height:1px;background:#000000;"></div>
<div style="left:50px;top:268px;width:1px;height:5px;background:#000000;"></div><svg style="left:62px;top:262px" width="15" height="16" shape-rendering="crispEdges"><path fill="#000000" d="M4 0h7v1h-7zM2 1h2v1h-2zM11 1h2v1h-2zM1 2h1v1h-1zM13 2h1v1h-1zM0 3h1v1h-1zM14 3h1v1h-1zM0 4h2v1h-2zM13 4h2v1h-2zM0 5h1v1h-1zM2 5h2v1h-2zM11 5h2v1h-2zM14 5h1v1h-1zM0 6h1v1h-1zM4 6h7v1h-7zM14 6h1v1h-1zM0 7h2v1h-2zM13 7h2v1h-2zM0 8h1v1h-1zM2 8h2v1h-2zM11 8h2v1h-2zM14 8h1v1h-1zM0 9h1v1h-1zM4 9h7v1h-7zM14 9h1v1h-1zM0 10h2v1h-2zM13 10h2v1h-2zM0 11h1v1h-1zM2 11h2v1h-2zM11 11h2v1h-2zM14 11h1v1h-1zM0 12h1v1h-1zM4 12h7v1h-7zM14 12h1v1h-1zM1 13h1v1h-1zM13 13h1v1h-1zM2 14h2v1h-2zM11 14h2v1h-2zM4 15h7v1h-7z"/><path fill="#63e1e3" d="M4 1h7v1h-7zM2 2h11v1h-11zM1 3h13v1h-13zM2 4h11v1h-11zM4 5h7v1h-7z"/><path fill="#e7e3e7" d="M1 5h1v1h-1zM13 5h1v1h-1zM2 6h1v1h-1zM12 6h1v1h-1zM5 7h1v1h-1zM7 7h1v1h-1zM9 7h1v1h-1zM11 7h1v1h-1zM4 8h1v1h-1zM6 8h1v1h-1zM8 8h1v1h-1zM10 8h1v1h-1zM1 9h1v1h-1zM11 9h1v1h-1zM13 9h1v1h-1zM2 10h1v1h-1zM6 10h1v1h-1zM8 10h1v1h-1zM10 10h1v1h-1zM12 10h1v1h-1zM1 11h1v1h-1zM5 11h1v1h-1zM7 11h1v1h-1zM9 11h1v1h-1zM13 11h1v1h-1zM2 12h1v1h-1zM12 12h1v1h-1zM5 13h1v1h-1zM7 13h1v1h-1zM9 13h1v1h-1zM11 13h1v1h-1zM4 14h1v1h-1zM6 14h1v1h-1zM8 14h1v1h-1zM10 14h1v1h-1z"/><path fill="#00ffff" d="M1 6h1v1h-1zM11 6h1v1h-1zM13 6h1v1h-1zM2 7h1v1h-1zM6 7h1v1h-1zM8 7h1v1h-1zM10 7h1v1h-1zM12 7h1v1h-1zM1 8h1v1h-1zM5 8h1v1h-1zM7 8h1v1h-1zM9 8h1v1h-1zM13 8h1v1h-1zM2 9h1v1h-1zM12 9h1v1h-1zM5 10h1v1h-1zM7 10h1v1h-1zM9 10h1v1h-1zM11 10h1v1h-1zM4 11h1v1h-1zM6 11h1v1h-1zM8 11h1v1h-1zM10 11h1v1h-1zM1 12h1v1h-1zM11 12h1v1h-1zM13 12h1v1h-1zM2 13h1v1h-1zM6 13h1v1h-1zM8 13h1v1h-1zM10 13h1v1h-1zM12 13h1v1h-1zM5 14h1v1h-1zM7 14h1v1h-1zM9 14h1v1h-1z"/><path fill="#ffffff" d="M3 6h1v1h-1zM3 7h2v1h-2zM3 9h1v1h-1zM3 10h2v1h-2zM3 12h1v1h-1zM3 13h2v1h-2z"/></svg>
<span class="t" style="left:83.5px;top:264px;font-size:12px;line-height:12px;color:#000000;transform:scaleX(0.8882);">DERIVED_EG (Derived)</span>
<div style="left:55px;top:286px;width:7px;height:1px;background:repeating-linear-gradient(to right,#848284 0 1px,transparent 1px 2px) 1px 0"></div>
<div style="left:46px;top:282px;width:9px;height:9px;background:#ffffff;"></div>
<div style="left:46px;top:282px;width:9px;height:1px;background:#848284;"></div>
<div style="left:46px;top:282px;width:1px;height:9px;background:#848284;"></div>
<div style="left:46px;top:290px;width:9px;height:1px;background:#848284;"></div>
<div style="left:54px;top:282px;width:1px;height:9px;background:#848284;"></div>
<div style="left:48px;top:286px;width:5px;height:1px;background:#000000;"></div>
<div style="left:50px;top:284px;width:1px;height:5px;background:#000000;"></div><svg style="left:62px;top:278px" width="15" height="16" shape-rendering="crispEdges"><path fill="#000000" d="M4 0h7v1h-7zM2 1h2v1h-2zM11 1h2v1h-2zM1 2h1v1h-1zM13 2h1v1h-1zM0 3h1v1h-1zM14 3h1v1h-1zM0 4h2v1h-2zM13 4h2v1h-2zM0 5h1v1h-1zM2 5h2v1h-2zM11 5h2v1h-2zM14 5h1v1h-1zM0 6h1v1h-1zM4 6h7v1h-7zM14 6h1v1h-1zM0 7h2v1h-2zM13 7h2v1h-2zM0 8h1v1h-1zM2 8h2v1h-2zM11 8h2v1h-2zM14 8h1v1h-1zM0 9h1v1h-1zM4 9h7v1h-7zM14 9h1v1h-1zM0 10h2v1h-2zM13 10h2v1h-2zM0 11h1v1h-1zM2 11h2v1h-2zM11 11h2v1h-2zM14 11h1v1h-1zM0 12h1v1h-1zM4 12h7v1h-7zM14 12h1v1h-1zM1 13h1v1h-1zM13 13h1v1h-1zM2 14h2v1h-2zM11 14h2v1h-2zM4 15h7v1h-7z"/><path fill="#63e1e3" d="M4 1h7v1h-7zM2 2h11v1h-11zM1 3h13v1h-13zM2 4h11v1h-11zM4 5h7v1h-7z"/><path fill="#e7e3e7" d="M1 5h1v1h-1zM13 5h1v1h-1zM2 6h1v1h-1zM12 6h1v1h-1zM5 7h1v1h-1zM7 7h1v1h-1zM9 7h1v1h-1zM11 7h1v1h-1zM4 8h1v1h-1zM6 8h1v1h-1zM8 8h1v1h-1zM10 8h1v1h-1zM1 9h1v1h-1zM11 9h1v1h-1zM13 9h1v1h-1zM2 10h1v1h-1zM6 10h1v1h-1zM8 10h1v1h-1zM10 10h1v1h-1zM12 10h1v1h-1zM1 11h1v1h-1zM5 11h1v1h-1zM7 11h1v1h-1zM9 11h1v1h-1zM13 11h1v1h-1zM2 12h1v1h-1zM12 12h1v1h-1zM5 13h1v1h-1zM7 13h1v1h-1zM9 13h1v1h-1zM11 13h1v1h-1zM4 14h1v1h-1zM6 14h1v1h-1zM8 14h1v1h-1zM10 14h1v1h-1z"/><path fill="#00ffff" d="M1 6h1v1h-1zM11 6h1v1h-1zM13 6h1v1h-1zM2 7h1v1h-1zM6 7h1v1h-1zM8 7h1v1h-1zM10 7h1v1h-1zM12 7h1v1h-1zM1 8h1v1h-1zM5 8h1v1h-1zM7 8h1v1h-1zM9 8h1v1h-1zM13 8h1v1h-1zM2 9h1v1h-1zM12 9h1v1h-1zM5 10h1v1h-1zM7 10h1v1h-1zM9 10h1v1h-1zM11 10h1v1h-1zM4 11h1v1h-1zM6 11h1v1h-1zM8 11h1v1h-1zM10 11h1v1h-1zM1 12h1v1h-1zM11 12h1v1h-1zM13 12h1v1h-1zM2 13h1v1h-1zM6 13h1v1h-1zM8 13h1v1h-1zM10 13h1v1h-1zM12 13h1v1h-1zM5 14h1v1h-1zM7 14h1v1h-1zM9 14h1v1h-1z"/><path fill="#ffffff" d="M3 6h1v1h-1zM3 7h2v1h-2zM3 9h1v1h-1zM3 10h2v1h-2zM3 12h1v1h-1zM3 13h2v1h-2z"/></svg>
<span class="t" style="left:83.5px;top:280px;font-size:12px;line-height:12px;color:#000000;transform:scaleX(0.8942);">GVT_DERIVED_LBL (Derived)</span>
<div style="left:55px;top:302px;width:7px;height:1px;background:repeating-linear-gradient(to right,#848284 0 1px,transparent 1px 2px) 1px 0"></div>
<div style="left:46px;top:298px;width:9px;height:9px;background:#ffffff;"></div>
<div style="left:46px;top:298px;width:9px;height:1px;background:#848284;"></div>
<div style="left:46px;top:298px;width:1px;height:9px;background:#848284;"></div>
<div style="left:46px;top:306px;width:9px;height:1px;background:#848284;"></div>
<div style="left:54px;top:298px;width:1px;height:9px;background:#848284;"></div>
<div style="left:48px;top:302px;width:5px;height:1px;background:#000000;"></div>
<div style="left:50px;top:300px;width:1px;height:5px;background:#000000;"></div><svg style="left:62px;top:294px" width="15" height="16" shape-rendering="crispEdges"><path fill="#000000" d="M4 0h7v1h-7zM2 1h2v1h-2zM11 1h2v1h-2zM1 2h1v1h-1zM13 2h1v1h-1zM0 3h1v1h-1zM14 3h1v1h-1zM0 4h2v1h-2zM13 4h2v1h-2zM0 5h1v1h-1zM2 5h2v1h-2zM11 5h2v1h-2zM14 5h1v1h-1zM0 6h1v1h-1zM4 6h7v1h-7zM14 6h1v1h-1zM0 7h2v1h-2zM13 7h2v1h-2zM0 8h1v1h-1zM2 8h2v1h-2zM11 8h2v1h-2zM14 8h1v1h-1zM0 9h1v1h-1zM4 9h7v1h-7zM14 9h1v1h-1zM0 10h2v1h-2zM13 10h2v1h-2zM0 11h1v1h-1zM2 11h2v1h-2zM11 11h2v1h-2zM14 11h1v1h-1zM0 12h1v1h-1zM4 12h7v1h-7zM14 12h1v1h-1zM1 13h1v1h-1zM13 13h1v1h-1zM2 14h2v1h-2zM11 14h2v1h-2zM4 15h7v1h-7z"/><path fill="#63e1e3" d="M4 1h7v1h-7zM2 2h11v1h-11zM1 3h13v1h-13zM2 4h11v1h-11zM4 5h7v1h-7z"/><path fill="#e7e3e7" d="M1 5h1v1h-1zM13 5h1v1h-1zM2 6h1v1h-1zM12 6h1v1h-1zM5 7h1v1h-1zM7 7h1v1h-1zM9 7h1v1h-1zM11 7h1v1h-1zM4 8h1v1h-1zM6 8h1v1h-1zM8 8h1v1h-1zM10 8h1v1h-1zM1 9h1v1h-1zM11 9h1v1h-1zM13 9h1v1h-1zM2 10h1v1h-1zM6 10h1v1h-1zM8 10h1v1h-1zM10 10h1v1h-1zM12 10h1v1h-1zM1 11h1v1h-1zM5 11h1v1h-1zM7 11h1v1h-1zM9 11h1v1h-1zM13 11h1v1h-1zM2 12h1v1h-1zM12 12h1v1h-1zM5 13h1v1h-1zM7 13h1v1h-1zM9 13h1v1h-1zM11 13h1v1h-1zM4 14h1v1h-1zM6 14h1v1h-1zM8 14h1v1h-1zM10 14h1v1h-1z"/><path fill="#00ffff" d="M1 6h1v1h-1zM11 6h1v1h-1zM13 6h1v1h-1zM2 7h1v1h-1zM6 7h1v1h-1zM8 7h1v1h-1zM10 7h1v1h-1zM12 7h1v1h-1zM1 8h1v1h-1zM5 8h1v1h-1zM7 8h1v1h-1zM9 8h1v1h-1zM13 8h1v1h-1zM2 9h1v1h-1zM12 9h1v1h-1zM5 10h1v1h-1zM7 10h1v1h-1zM9 10h1v1h-1zM11 10h1v1h-1zM4 11h1v1h-1zM6 11h1v1h-1zM8 11h1v1h-1zM10 11h1v1h-1zM1 12h1v1h-1zM11 12h1v1h-1zM13 12h1v1h-1zM2 13h1v1h-1zM6 13h1v1h-1zM8 13h1v1h-1zM10 13h1v1h-1zM12 13h1v1h-1zM5 14h1v1h-1zM7 14h1v1h-1zM9 14h1v1h-1z"/><path fill="#ffffff" d="M3 6h1v1h-1zM3 7h2v1h-2zM3 9h1v1h-1zM3 10h2v1h-2zM3 12h1v1h-1zM3 13h2v1h-2z"/></svg>
<span class="t" style="left:83.5px;top:296px;font-size:12px;line-height:12px;color:#000000;transform:scaleX(0.8931);">DERIVED_GVT (Derived)</span>
<div style="left:55px;top:318px;width:7px;height:1px;background:repeating-linear-gradient(to right,#848284 0 1px,transparent 1px 2px) 1px 0"></div>
<div style="left:46px;top:314px;width:9px;height:9px;background:#ffffff;"></div>
<div style="left:46px;top:314px;width:9px;height:1px;background:#848284;"></div>
<div style="left:46px;top:314px;width:1px;height:9px;background:#848284;"></div>
<div style="left:46px;top:322px;width:9px;height:1px;background:#848284;"></div>
<div style="left:54px;top:314px;width:1px;height:9px;background:#848284;"></div>
<div style="left:48px;top:318px;width:5px;height:1px;background:#000000;"></div>
<div style="left:50px;top:316px;width:1px;height:5px;background:#000000;"></div><svg style="left:62px;top:310px" width="15" height="16" shape-rendering="crispEdges"><path fill="#000000" d="M4 0h7v1h-7zM2 1h2v1h-2zM11 1h2v1h-2zM1 2h1v1h-1zM13 2h1v1h-1zM0 3h1v1h-1zM14 3h1v1h-1zM0 4h2v1h-2zM13 4h2v1h-2zM0 5h1v1h-1zM2 5h2v1h-2zM11 5h2v1h-2zM14 5h1v1h-1zM0 6h1v1h-1zM4 6h7v1h-7zM14 6h1v1h-1zM0 7h2v1h-2zM13 7h2v1h-2zM0 8h1v1h-1zM2 8h2v1h-2zM11 8h2v1h-2zM14 8h1v1h-1zM0 9h1v1h-1zM4 9h7v1h-7zM14 9h1v1h-1zM0 10h2v1h-2zM13 10h2v1h-2zM0 11h1v1h-1zM2 11h2v1h-2zM11 11h2v1h-2zM14 11h1v1h-1zM0 12h1v1h-1zM4 12h7v1h-7zM14 12h1v1h-1zM1 13h1v1h-1zM13 13h1v1h-1zM2 14h2v1h-2zM11 14h2v1h-2zM4 15h7v1h-7z"/><path fill="#63e1e3" d="M4 1h7v1h-7zM2 2h11v1h-11zM1 3h13v1h-13zM2 4h11v1h-11zM4 5h7v1h-7z"/><path fill="#e7e3e7" d="M1 5h1v1h-1zM13 5h1v1h-1zM2 6h1v1h-1zM12 6h1v1h-1zM5 7h1v1h-1zM7 7h1v1h-1zM9 7h1v1h-1zM11 7h1v1h-1zM4 8h1v1h-1zM6 8h1v1h-1zM8 8h1v1h-1zM10 8h1v1h-1zM1 9h1v1h-1zM11 9h1v1h-1zM13 9h1v1h-1zM2 10h1v1h-1zM6 10h1v1h-1zM8 10h1v1h-1zM10 10h1v1h-1zM12 10h1v1h-1zM1 11h1v1h-1zM5 11h1v1h-1zM7 11h1v1h-1zM9 11h1v1h-1zM13 11h1v1h-1zM2 12h1v1h-1zM12 12h1v1h-1zM5 13h1v1h-1zM7 13h1v1h-1zM9 13h1v1h-1zM11 13h1v1h-1zM4 14h1v1h-1zM6 14h1v1h-1zM8 14h1v1h-1zM10 14h1v1h-1z"/><path fill="#00ffff" d="M1 6h1v1h-1zM11 6h1v1h-1zM13 6h1v1h-1zM2 7h1v1h-1zM6 7h1v1h-1zM8 7h1v1h-1zM10 7h1v1h-1zM12 7h1v1h-1zM1 8h1v1h-1zM5 8h1v1h-1zM7 8h1v1h-1zM9 8h1v1h-1zM13 8h1v1h-1zM2 9h1v1h-1zM12 9h1v1h-1zM5 10h1v1h-1zM7 10h1v1h-1zM9 10h1v1h-1zM11 10h1v1h-1zM4 11h1v1h-1zM6 11h1v1h-1zM8 11h1v1h-1zM10 11h1v1h-1zM1 12h1v1h-1zM11 12h1v1h-1zM13 12h1v1h-1zM2 13h1v1h-1zM6 13h1v1h-1zM8 13h1v1h-1zM10 13h1v1h-1zM12 13h1v1h-1zM5 14h1v1h-1zM7 14h1v1h-1zM9 14h1v1h-1z"/><path fill="#ffffff" d="M3 6h1v1h-1zM3 7h2v1h-2zM3 9h1v1h-1zM3 10h2v1h-2zM3 12h1v1h-1zM3 13h2v1h-2z"/></svg>
<span class="t" style="left:83.5px;top:312px;font-size:12px;line-height:12px;color:#000000;transform:scaleX(0.9005);">HR_LBL_WRK (Derived)</span>
<div style="left:55px;top:334px;width:7px;height:1px;background:repeating-linear-gradient(to right,#848284 0 1px,transparent 1px 2px) 1px 0"></div>
<div style="left:46px;top:330px;width:9px;height:9px;background:#ffffff;"></div>
<div style="left:46px;top:330px;width:9px;height:1px;background:#848284;"></div>
<div style="left:46px;top:330px;width:1px;height:9px;background:#848284;"></div>
<div style="left:46px;top:338px;width:9px;height:1px;background:#848284;"></div>
<div style="left:54px;top:330px;width:1px;height:9px;background:#848284;"></div>
<div style="left:48px;top:334px;width:5px;height:1px;background:#000000;"></div>
<div style="left:50px;top:332px;width:1px;height:5px;background:#000000;"></div><svg style="left:62px;top:326px" width="15" height="16" shape-rendering="crispEdges"><path fill="#000000" d="M4 0h7v1h-7zM2 1h2v1h-2zM11 1h2v1h-2zM1 2h1v1h-1zM13 2h1v1h-1zM0 3h1v1h-1zM14 3h1v1h-1zM0 4h2v1h-2zM13 4h2v1h-2zM0 5h1v1h-1zM2 5h2v1h-2zM11 5h2v1h-2zM14 5h1v1h-1zM0 6h1v1h-1zM4 6h7v1h-7zM14 6h1v1h-1zM0 7h2v1h-2zM13 7h2v1h-2zM0 8h1v1h-1zM2 8h2v1h-2zM11 8h2v1h-2zM14 8h1v1h-1zM0 9h1v1h-1zM4 9h7v1h-7zM14 9h1v1h-1zM0 10h2v1h-2zM13 10h2v1h-2zM0 11h1v1h-1zM2 11h2v1h-2zM11 11h2v1h-2zM14 11h1v1h-1zM0 12h1v1h-1zM4 12h7v1h-7zM14 12h1v1h-1zM1 13h1v1h-1zM13 13h1v1h-1zM2 14h2v1h-2zM11 14h2v1h-2zM4 15h7v1h-7z"/><path fill="#63e1e3" d="M4 1h7v1h-7zM2 2h11v1h-11zM1 3h13v1h-13zM2 4h11v1h-11zM4 5h7v1h-7z"/><path fill="#e7e3e7" d="M1 5h1v1h-1zM13 5h1v1h-1zM2 6h1v1h-1zM12 6h1v1h-1zM5 7h1v1h-1zM7 7h1v1h-1zM9 7h1v1h-1zM11 7h1v1h-1zM4 8h1v1h-1zM6 8h1v1h-1zM8 8h1v1h-1zM10 8h1v1h-1zM1 9h1v1h-1zM11 9h1v1h-1zM13 9h1v1h-1zM2 10h1v1h-1zM6 10h1v1h-1zM8 10h1v1h-1zM10 10h1v1h-1zM12 10h1v1h-1zM1 11h1v1h-1zM5 11h1v1h-1zM7 11h1v1h-1zM9 11h1v1h-1zM13 11h1v1h-1zM2 12h1v1h-1zM12 12h1v1h-1zM5 13h1v1h-1zM7 13h1v1h-1zM9 13h1v1h-1zM11 13h1v1h-1zM4 14h1v1h-1zM6 14h1v1h-1zM8 14h1v1h-1zM10 14h1v1h-1z"/><path fill="#00ffff" d="M1 6h1v1h-1zM11 6h1v1h-1zM13 6h1v1h-1zM2 7h1v1h-1zM6 7h1v1h-1zM8 7h1v1h-1zM10 7h1v1h-1zM12 7h1v1h-1zM1 8h1v1h-1zM5 8h1v1h-1zM7 8h1v1h-1zM9 8h1v1h-1zM13 8h1v1h-1zM2 9h1v1h-1zM12 9h1v1h-1zM5 10h1v1h-1zM7 10h1v1h-1zM9 10h1v1h-1zM11 10h1v1h-1zM4 11h1v1h-1zM6 11h1v1h-1zM8 11h1v1h-1zM10 11h1v1h-1zM1 12h1v1h-1zM11 12h1v1h-1zM13 12h1v1h-1zM2 13h1v1h-1zM6 13h1v1h-1zM8 13h1v1h-1zM10 13h1v1h-1zM12 13h1v1h-1zM5 14h1v1h-1zM7 14h1v1h-1zM9 14h1v1h-1z"/><path fill="#ffffff" d="M3 6h1v1h-1zM3 7h2v1h-2zM3 9h1v1h-1zM3 10h2v1h-2zM3 12h1v1h-1zM3 13h2v1h-2z"/></svg>
<span class="t" style="left:83.5px;top:328px;font-size:12px;line-height:12px;color:#000000;transform:scaleX(0.8939);">FPS_LBL_WRK (Derived)</span>
<div style="left:55px;top:350px;width:7px;height:1px;background:repeating-linear-gradient(to right,#848284 0 1px,transparent 1px 2px) 1px 0"></div>
<div style="left:46px;top:346px;width:9px;height:9px;background:#ffffff;"></div>
<div style="left:46px;top:346px;width:9px;height:1px;background:#848284;"></div>
<div style="left:46px;top:346px;width:1px;height:9px;background:#848284;"></div>
<div style="left:46px;top:354px;width:9px;height:1px;background:#848284;"></div>
<div style="left:54px;top:346px;width:1px;height:9px;background:#848284;"></div>
<div style="left:48px;top:350px;width:5px;height:1px;background:#000000;"></div>
<div style="left:50px;top:348px;width:1px;height:5px;background:#000000;"></div><svg style="left:62px;top:342px" width="15" height="16" shape-rendering="crispEdges"><path fill="#000000" d="M4 0h7v1h-7zM2 1h2v1h-2zM11 1h2v1h-2zM1 2h1v1h-1zM13 2h1v1h-1zM0 3h1v1h-1zM14 3h1v1h-1zM0 4h2v1h-2zM13 4h2v1h-2zM0 5h1v1h-1zM2 5h2v1h-2zM11 5h2v1h-2zM14 5h1v1h-1zM0 6h1v1h-1zM4 6h7v1h-7zM14 6h1v1h-1zM0 7h2v1h-2zM13 7h2v1h-2zM0 8h1v1h-1zM2 8h2v1h-2zM11 8h2v1h-2zM14 8h1v1h-1zM0 9h1v1h-1zM4 9h7v1h-7zM14 9h1v1h-1zM0 10h2v1h-2zM13 10h2v1h-2zM0 11h1v1h-1zM2 11h2v1h-2zM11 11h2v1h-2zM14 11h1v1h-1zM0 12h1v1h-1zM4 12h7v1h-7zM14 12h1v1h-1zM1 13h1v1h-1zM13 13h1v1h-1zM2 14h2v1h-2zM11 14h2v1h-2zM4 15h7v1h-7z"/><path fill="#63e1e3" d="M4 1h7v1h-7zM2 2h11v1h-11zM1 3h13v1h-13zM2 4h11v1h-11zM4 5h7v1h-7z"/><path fill="#e7e3e7" d="M1 5h1v1h-1zM13 5h1v1h-1zM2 6h1v1h-1zM12 6h1v1h-1zM5 7h1v1h-1zM7 7h1v1h-1zM9 7h1v1h-1zM11 7h1v1h-1zM4 8h1v1h-1zM6 8h1v1h-1zM8 8h1v1h-1zM10 8h1v1h-1zM1 9h1v1h-1zM11 9h1v1h-1zM13 9h1v1h-1zM2 10h1v1h-1zM6 10h1v1h-1zM8 10h1v1h-1zM10 10h1v1h-1zM12 10h1v1h-1zM1 11h1v1h-1zM5 11h1v1h-1zM7 11h1v1h-1zM9 11h1v1h-1zM13 11h1v1h-1zM2 12h1v1h-1zM12 12h1v1h-1zM5 13h1v1h-1zM7 13h1v1h-1zM9 13h1v1h-1zM11 13h1v1h-1zM4 14h1v1h-1zM6 14h1v1h-1zM8 14h1v1h-1zM10 14h1v1h-1z"/><path fill="#00ffff" d="M1 6h1v1h-1zM11 6h1v1h-1zM13 6h1v1h-1zM2 7h1v1h-1zM6 7h1v1h-1zM8 7h1v1h-1zM10 7h1v1h-1zM12 7h1v1h-1zM1 8h1v1h-1zM5 8h1v1h-1zM7 8h1v1h-1zM9 8h1v1h-1zM13 8h1v1h-1zM2 9h1v1h-1zM12 9h1v1h-1zM5 10h1v1h-1zM7 10h1v1h-1zM9 10h1v1h-1zM11 10h1v1h-1zM4 11h1v1h-1zM6 11h1v1h-1zM8 11h1v1h-1zM10 11h1v1h-1zM1 12h1v1h-1zM11 12h1v1h-1zM13 12h1v1h-1zM2 13h1v1h-1zM6 13h1v1h-1zM8 13h1v1h-1zM10 13h1v1h-1zM12 13h1v1h-1zM5 14h1v1h-1zM7 14h1v1h-1zM9 14h1v1h-1z"/><path fill="#ffffff" d="M3 6h1v1h-1zM3 7h2v1h-2zM3 9h1v1h-1zM3 10h2v1h-2zM3 12h1v1h-1zM3 13h2v1h-2z"/></svg>
<span class="t" style="left:83.5px;top:344px;font-size:12px;line-height:12px;color:#000000;transform:scaleX(0.8932);">DERIVED_POPUP (Derived)</span>
<div style="left:55px;top:366px;width:7px;height:1px;background:repeating-linear-gradient(to right,#848284 0 1px,transparent 1px 2px) 1px 0"></div>
<div style="left:46px;top:362px;width:9px;height:9px;background:#ffffff;"></div>
<div style="left:46px;top:362px;width:9px;height:1px;background:#848284;"></div>
<div style="left:46px;top:362px;width:1px;height:9px;background:#848284;"></div>
<div style="left:46px;top:370px;width:9px;height:1px;background:#848284;"></div>
<div style="left:54px;top:362px;width:1px;height:9px;background:#848284;"></div>
<div style="left:48px;top:366px;width:5px;height:1px;background:#000000;"></div>
<div style="left:50px;top:364px;width:1px;height:5px;background:#000000;"></div><svg style="left:62px;top:358px" width="15" height="16" shape-rendering="crispEdges"><path fill="#000000" d="M4 0h7v1h-7zM2 1h2v1h-2zM11 1h2v1h-2zM1 2h1v1h-1zM13 2h1v1h-1zM0 3h1v1h-1zM14 3h1v1h-1zM0 4h2v1h-2zM13 4h2v1h-2zM0 5h1v1h-1zM2 5h2v1h-2zM11 5h2v1h-2zM14 5h1v1h-1zM0 6h1v1h-1zM4 6h7v1h-7zM14 6h1v1h-1zM0 7h2v1h-2zM13 7h2v1h-2zM0 8h1v1h-1zM2 8h2v1h-2zM11 8h2v1h-2zM14 8h1v1h-1zM0 9h1v1h-1zM4 9h7v1h-7zM14 9h1v1h-1zM0 10h2v1h-2zM13 10h2v1h-2zM0 11h1v1h-1zM2 11h2v1h-2zM11 11h2v1h-2zM14 11h1v1h-1zM0 12h1v1h-1zM4 12h7v1h-7zM14 12h1v1h-1zM1 13h1v1h-1zM13 13h1v1h-1zM2 14h2v1h-2zM11 14h2v1h-2zM4 15h7v1h-7z"/><path fill="#63e1e3" d="M4 1h7v1h-7zM2 2h11v1h-11zM1 3h13v1h-13zM2 4h11v1h-11zM4 5h7v1h-7z"/><path fill="#e7e3e7" d="M1 5h1v1h-1zM13 5h1v1h-1zM2 6h1v1h-1zM12 6h1v1h-1zM5 7h1v1h-1zM7 7h1v1h-1zM9 7h1v1h-1zM11 7h1v1h-1zM4 8h1v1h-1zM6 8h1v1h-1zM8 8h1v1h-1zM10 8h1v1h-1zM1 9h1v1h-1zM11 9h1v1h-1zM13 9h1v1h-1zM2 10h1v1h-1zM6 10h1v1h-1zM8 10h1v1h-1zM10 10h1v1h-1zM12 10h1v1h-1zM1 11h1v1h-1zM5 11h1v1h-1zM7 11h1v1h-1zM9 11h1v1h-1zM13 11h1v1h-1zM2 12h1v1h-1zM12 12h1v1h-1zM5 13h1v1h-1zM7 13h1v1h-1zM9 13h1v1h-1zM11 13h1v1h-1zM4 14h1v1h-1zM6 14h1v1h-1zM8 14h1v1h-1zM10 14h1v1h-1z"/><path fill="#00ffff" d="M1 6h1v1h-1zM11 6h1v1h-1zM13 6h1v1h-1zM2 7h1v1h-1zM6 7h1v1h-1zM8 7h1v1h-1zM10 7h1v1h-1zM12 7h1v1h-1zM1 8h1v1h-1zM5 8h1v1h-1zM7 8h1v1h-1zM9 8h1v1h-1zM13 8h1v1h-1zM2 9h1v1h-1zM12 9h1v1h-1zM5 10h1v1h-1zM7 10h1v1h-1zM9 10h1v1h-1zM11 10h1v1h-1zM4 11h1v1h-1zM6 11h1v1h-1zM8 11h1v1h-1zM10 11h1v1h-1zM1 12h1v1h-1zM11 12h1v1h-1zM13 12h1v1h-1zM2 13h1v1h-1zM6 13h1v1h-1zM8 13h1v1h-1zM10 13h1v1h-1zM12 13h1v1h-1zM5 14h1v1h-1zM7 14h1v1h-1zM9 14h1v1h-1z"/><path fill="#ffffff" d="M3 6h1v1h-1zM3 7h2v1h-2zM3 9h1v1h-1zM3 10h2v1h-2zM3 12h1v1h-1zM3 13h2v1h-2z"/></svg>
<span class="t" style="left:83.5px;top:360px;font-size:12px;line-height:12px;color:#000000;transform:scaleX(0.9012);">EXCH_RT_WRK (Derived)</span>
<div style="left:55px;top:382px;width:7px;height:1px;background:repeating-linear-gradient(to right,#848284 0 1px,transparent 1px 2px) 1px 0"></div>
<div style="left:46px;top:378px;width:9px;height:9px;background:#ffffff;"></div>
<div style="left:46px;top:378px;width:9px;height:1px;background:#848284;"></div>
<div style="left:46px;top:378px;width:1px;height:9px;background:#848284;"></div>
<div style="left:46px;top:386px;width:9px;height:1px;background:#848284;"></div>
<div style="left:54px;top:378px;width:1px;height:9px;background:#848284;"></div>
<div style="left:48px;top:382px;width:5px;height:1px;background:#000000;"></div>
<div style="left:50px;top:380px;width:1px;height:5px;background:#000000;"></div><svg style="left:62px;top:374px" width="15" height="16" shape-rendering="crispEdges"><path fill="#000000" d="M4 0h7v1h-7zM2 1h2v1h-2zM11 1h2v1h-2zM1 2h1v1h-1zM13 2h1v1h-1zM0 3h1v1h-1zM14 3h1v1h-1zM0 4h2v1h-2zM13 4h2v1h-2zM0 5h1v1h-1zM2 5h2v1h-2zM11 5h2v1h-2zM14 5h1v1h-1zM0 6h1v1h-1zM4 6h7v1h-7zM14 6h1v1h-1zM0 7h2v1h-2zM13 7h2v1h-2zM0 8h1v1h-1zM2 8h2v1h-2zM11 8h2v1h-2zM14 8h1v1h-1zM0 9h1v1h-1zM4 9h7v1h-7zM14 9h1v1h-1zM0 10h2v1h-2zM13 10h2v1h-2zM0 11h1v1h-1zM2 11h2v1h-2zM11 11h2v1h-2zM14 11h1v1h-1zM0 12h1v1h-1zM4 12h7v1h-7zM14 12h1v1h-1zM1 13h1v1h-1zM13 13h1v1h-1zM2 14h2v1h-2zM11 14h2v1h-2zM4 15h7v1h-7z"/><path fill="#63e1e3" d="M4 1h7v1h-7zM2 2h11v1h-11zM1 3h13v1h-13zM2 4h11v1h-11zM4 5h7v1h-7z"/><path fill="#e7e3e7" d="M1 5h1v1h-1zM13 5h1v1h-1zM2 6h1v1h-1zM12 6h1v1h-1zM5 7h1v1h-1zM7 7h1v1h-1zM9 7h1v1h-1zM11 7h1v1h-1zM4 8h1v1h-1zM6 8h1v1h-1zM8 8h1v1h-1zM10 8h1v1h-1zM1 9h1v1h-1zM11 9h1v1h-1zM13 9h1v1h-1zM2 10h1v1h-1zM6 10h1v1h-1zM8 10h1v1h-1zM10 10h1v1h-1zM12 10h1v1h-1zM1 11h1v1h-1zM5 11h1v1h-1zM7 11h1v1h-1zM9 11h1v1h-1zM13 11h1v1h-1zM2 12h1v1h-1zM12 12h1v1h-1zM5 13h1v1h-1zM7 13h1v1h-1zM9 13h1v1h-1zM11 13h1v1h-1zM4 14h1v1h-1zM6 14h1v1h-1zM8 14h1v1h-1zM10 14h1v1h-1z"/><path fill="#00ffff" d="M1 6h1v1h-1zM11 6h1v1h-1zM13 6h1v1h-1zM2 7h1v1h-1zM6 7h1v1h-1zM8 7h1v1h-1zM10 7h1v1h-1zM12 7h1v1h-1zM1 8h1v1h-1zM5 8h1v1h-1zM7 8h1v1h-1zM9 8h1v1h-1zM13 8h1v1h-1zM2 9h1v1h-1zM12 9h1v1h-1zM5 10h1v1h-1zM7 10h1v1h-1zM9 10h1v1h-1zM11 10h1v1h-1zM4 11h1v1h-1zM6 11h1v1h-1zM8 11h1v1h-1zM10 11h1v1h-1zM1 12h1v1h-1zM11 12h1v1h-1zM13 12h1v1h-1zM2 13h1v1h-1zM6 13h1v1h-1zM8 13h1v1h-1zM10 13h1v1h-1zM12 13h1v1h-1zM5 14h1v1h-1zM7 14h1v1h-1zM9 14h1v1h-1z"/><path fill="#ffffff" d="M3 6h1v1h-1zM3 7h2v1h-2zM3 9h1v1h-1zM3 10h2v1h-2zM3 12h1v1h-1zM3 13h2v1h-2z"/></svg>
<span class="t" style="left:83.5px;top:376px;font-size:12px;line-height:12px;color:#000000;transform:scaleX(0.8948);">DERIVED_HR_CMP (Derived)</span>
<div style="left:55px;top:398px;width:7px;height:1px;background:repeating-linear-gradient(to right,#848284 0 1px,transparent 1px 2px) 1px 0"></div>
<div style="left:46px;top:394px;width:9px;height:9px;background:#ffffff;"></div>
<div style="left:46px;top:394px;width:9px;height:1px;background:#848284;"></div>
<div style="left:46px;top:394px;width:1px;height:9px;background:#848284;"></div>
<div style="left:46px;top:402px;width:9px;height:1px;background:#848284;"></div>
<div style="left:54px;top:394px;width:1px;height:9px;background:#848284;"></div>
<div style="left:48px;top:398px;width:5px;height:1px;background:#000000;"></div>
<div style="left:50px;top:396px;width:1px;height:5px;background:#000000;"></div><svg style="left:66px;top:391px" width="7" height="15" shape-rendering="crispEdges"><path fill="#000000" d="M0 0h7v1h-7zM0 1h1v1h-1zM6 1h1v1h-1zM0 2h1v1h-1zM3 2h1v1h-1zM6 2h1v1h-1zM0 3h1v1h-1zM2 3h3v1h-3zM6 3h1v1h-1zM0 4h1v1h-1zM6 4h1v1h-1zM0 5h7v1h-7zM0 6h1v1h-1zM6 6h1v1h-1zM0 7h1v1h-1zM6 7h1v1h-1zM0 8h1v1h-1zM6 8h1v1h-1zM0 9h7v1h-7zM0 10h1v1h-1zM6 10h1v1h-1zM0 11h1v1h-1zM2 11h3v1h-3zM6 11h1v1h-1zM0 12h1v1h-1zM3 12h1v1h-1zM6 12h1v1h-1zM0 13h1v1h-1zM6 13h1v1h-1zM0 14h7v1h-7z"/><path fill="#ffffff" d="M1 1h5v1h-5zM1 2h2v1h-2zM4 2h2v1h-2zM1 3h1v1h-1zM5 3h1v1h-1zM1 4h5v1h-5zM2 6h1v1h-1zM4 6h1v1h-1zM1 7h1v1h-1zM3 7h1v1h-1zM5 7h1v1h-1zM2 8h1v1h-1zM4 8h1v1h-1zM1 10h5v1h-5zM1 11h1v1h-1zM5 11h1v1h-1zM1 12h2v1h-2zM4 12h2v1h-2zM1 13h5v1h-5z"/><path fill="#c6c3c6" d="M1 6h1v1h-1zM3 6h1v1h-1zM5 6h1v1h-1zM2 7h1v1h-1zM4 7h1v1h-1zM1 8h1v1h-1zM3 8h1v1h-1zM5 8h1v1h-1z"/></svg>
<span class="t" style="left:83.5px;top:392px;font-size:12px;line-height:12px;color:#000000;transform:scaleX(0.8740);">Scroll - Level 2  Primary Record: GVT_JCOD_R</span>
<div style="left:55px;top:414px;width:7px;height:1px;background:repeating-linear-gradient(to right,#848284 0 1px,transparent 1px 2px) 1px 0"></div>
<div style="left:46px;top:410px;width:9px;height:9px;background:#ffffff;"></div>
<div style="left:46px;top:410px;width:9px;height:1px;background:#848284;"></div>
<div style="left:46px;top:410px;width:1px;height:9px;background:#848284;"></div>
<div style="left:46px;top:418px;width:9px;height:1px;background:#848284;"></div>
<div style="left:54px;top:410px;width:1px;height:9px;background:#848284;"></div>
<div style="left:48px;top:414px;width:5px;height:1px;background:#000000;"></div>
<div style="left:50px;top:412px;width:1px;height:5px;background:#000000;"></div><svg style="left:66px;top:407px" width="7" height="15" shape-rendering="crispEdges"><path fill="#000000" d="M0 0h7v1h-7zM0 1h1v1h-1zM6 1h1v1h-1zM0 2h1v1h-1zM3 2h1v1h-1zM6 2h1v1h-1zM0 3h1v1h-1zM2 3h3v1h-3zM6 3h1v1h-1zM0 4h1v1h-1zM6 4h1v1h-1zM0 5h7v1h-7zM0 6h1v1h-1zM6 6h1v1h-1zM0 7h1v1h-1zM6 7h1v1h-1zM0 8h1v1h-1zM6 8h1v1h-1zM0 9h7v1h-7zM0 10h1v1h-1zM6 10h1v1h-1zM0 11h1v1h-1zM2 11h3v1h-3zM6 11h1v1h-1zM0 12h1v1h-1zM3 12h1v1h-1zM6 12h1v1h-1zM0 13h1v1h-1zM6 13h1v1h-1zM0 14h7v1h-7z"/><path fill="#ffffff" d="M1 1h5v1h-5zM1 2h2v1h-2zM4 2h2v1h-2zM1 3h1v1h-1zM5 3h1v1h-1zM1 4h5v1h-5zM2 6h1v1h-1zM4 6h1v1h-1zM1 7h1v1h-1zM3 7h1v1h-1zM5 7h1v1h-1zM2 8h1v1h-1zM4 8h1v1h-1zM1 10h5v1h-5zM1 11h1v1h-1zM5 11h1v1h-1zM1 12h2v1h-2zM4 12h2v1h-2zM1 13h5v1h-5z"/><path fill="#c6c3c6" d="M1 6h1v1h-1zM3 6h1v1h-1zM5 6h1v1h-1zM2 7h1v1h-1zM4 7h1v1h-1zM1 8h1v1h-1zM3 8h1v1h-1zM5 8h1v1h-1z"/></svg>
<span class="t" style="left:83.5px;top:408px;font-size:12px;line-height:12px;color:#000000;transform:scaleX(0.8740);">Scroll - Level 2  Primary Record: CAN_JOBCOD</span>
<div style="left:55px;top:430px;width:7px;height:1px;background:repeating-linear-gradient(to right,#848284 0 1px,transparent 1px 2px) 1px 0"></div>
<div style="left:46px;top:426px;width:9px;height:9px;background:#ffffff;"></div>
<div style="left:46px;top:426px;width:9px;height:1px;background:#848284;"></div>
<div style="left:46px;top:426px;width:1px;height:9px;background:#848284;"></div>
<div style="left:46px;top:434px;width:9px;height:1px;background:#848284;"></div>
<div style="left:54px;top:426px;width:1px;height:9px;background:#848284;"></div>
<div style="left:48px;top:430px;width:5px;height:1px;background:#000000;"></div>
<div style="left:50px;top:428px;width:1px;height:5px;background:#000000;"></div><svg style="left:66px;top:423px" width="7" height="15" shape-rendering="crispEdges"><path fill="#000000" d="M0 0h7v1h-7zM0 1h1v1h-1zM6 1h1v1h-1zM0 2h1v1h-1zM3 2h1v1h-1zM6 2h1v1h-1zM0 3h1v1h-1zM2 3h3v1h-3zM6 3h1v1h-1zM0 4h1v1h-1zM6 4h1v1h-1zM0 5h7v1h-7zM0 6h1v1h-1zM6 6h1v1h-1zM0 7h1v1h-1zM6 7h1v1h-1zM0 8h1v1h-1zM6 8h1v1h-1zM0 9h7v1h-7zM0 10h1v1h-1zM6 10h1v1h-1zM0 11h1v1h-1zM2 11h3v1h-3zM6 11h1v1h-1zM0 12h1v1h-1zM3 12h1v1h-1zM6 12h1v1h-1zM0 13h1v1h-1zM6 13h1v1h-1zM0 14h7v1h-7z"/><path fill="#ffffff" d="M1 1h5v1h-5zM1 2h2v1h-2zM4 2h2v1h-2zM1 3h1v1h-1zM5 3h1v1h-1zM1 4h5v1h-5zM2 6h1v1h-1zM4 6h1v1h-1zM1 7h1v1h-1zM3 7h1v1h-1zM5 7h1v1h-1zM2 8h1v1h-1zM4 8h1v1h-1zM1 10h5v1h-5zM1 11h1v1h-1zM5 11h1v1h-1zM1 12h2v1h-2zM4 12h2v1h-2zM1 13h5v1h-5z"/><path fill="#c6c3c6" d="M1 6h1v1h-1zM3 6h1v1h-1zM5 6h1v1h-1zM2 7h1v1h-1zM4 7h1v1h-1zM1 8h1v1h-1zM3 8h1v1h-1zM5 8h1v1h-1z"/></svg>
<span class="t" style="left:83.5px;top:424px;font-size:12px;line-height:12px;color:#000000;transform:scaleX(0.8740);">Scroll - Level 2  Primary Record: JOBCD_TRN_</span>
<div style="left:55px;top:446px;width:7px;height:1px;background:repeating-linear-gradient(to right,#848284 0 1px,transparent 1px 2px) 1px 0"></div>
<div style="left:46px;top:442px;width:9px;height:9px;background:#ffffff;"></div>
<div style="left:46px;top:442px;width:9px;height:1px;background:#848284;"></div>
<div style="left:46px;top:442px;width:1px;height:9px;background:#848284;"></div>
<div style="left:46px;top:450px;width:9px;height:1px;background:#848284;"></div>
<div style="left:54px;top:442px;width:1px;height:9px;background:#848284;"></div>
<div style="left:48px;top:446px;width:5px;height:1px;background:#000000;"></div>
<div style="left:50px;top:444px;width:1px;height:5px;background:#000000;"></div><svg style="left:66px;top:439px" width="7" height="15" shape-rendering="crispEdges"><path fill="#000000" d="M0 0h7v1h-7zM0 1h1v1h-1zM6 1h1v1h-1zM0 2h1v1h-1zM3 2h1v1h-1zM6 2h1v1h-1zM0 3h1v1h-1zM2 3h3v1h-3zM6 3h1v1h-1zM0 4h1v1h-1zM6 4h1v1h-1zM0 5h7v1h-7zM0 6h1v1h-1zM6 6h1v1h-1zM0 7h1v1h-1zM6 7h1v1h-1zM0 8h1v1h-1zM6 8h1v1h-1zM0 9h7v1h-7zM0 10h1v1h-1zM6 10h1v1h-1zM0 11h1v1h-1zM2 11h3v1h-3zM6 11h1v1h-1zM0 12h1v1h-1zM3 12h1v1h-1zM6 12h1v1h-1zM0 13h1v1h-1zM6 13h1v1h-1zM0 14h7v1h-7z"/><path fill="#ffffff" d="M1 1h5v1h-5zM1 2h2v1h-2zM4 2h2v1h-2zM1 3h1v1h-1zM5 3h1v1h-1zM1 4h5v1h-5zM2 6h1v1h-1zM4 6h1v1h-1zM1 7h1v1h-1zM3 7h1v1h-1zM5 7h1v1h-1zM2 8h1v1h-1zM4 8h1v1h-1zM1 10h5v1h-5zM1 11h1v1h-1zM5 11h1v1h-1zM1 12h2v1h-2zM4 12h2v1h-2zM1 13h5v1h-5z"/><path fill="#c6c3c6" d="M1 6h1v1h-1zM3 6h1v1h-1zM5 6h1v1h-1zM2 7h1v1h-1zM4 7h1v1h-1zM1 8h1v1h-1zM3 8h1v1h-1zM5 8h1v1h-1z"/></svg>
<span class="t" style="left:83.5px;top:440px;font-size:12px;line-height:12px;color:#000000;transform:scaleX(0.8740);">Scroll - Level 2  Primary Record: JOBCD_SURV</span>
<div style="left:55px;top:462px;width:7px;height:1px;background:repeating-linear-gradient(to right,#848284 0 1px,transparent 1px 2px) 1px 0"></div>
<div style="left:46px;top:458px;width:9px;height:9px;background:#ffffff;"></div>
<div style="left:46px;top:458px;width:9px;height:1px;background:#848284;"></div>
<div style="left:46px;top:458px;width:1px;height:9px;background:#848284;"></div>
<div style="left:46px;top:466px;width:9px;height:1px;background:#848284;"></div>
<div style="left:54px;top:458px;width:1px;height:9px;background:#848284;"></div>
<div style="left:48px;top:462px;width:5px;height:1px;background:#000000;"></div>
<div style="left:50px;top:460px;width:1px;height:5px;background:#000000;"></div><svg style="left:66px;top:455px" width="7" height="15" shape-rendering="crispEdges"><path fill="#000000" d="M0 0h7v1h-7zM0 1h1v1h-1zM6 1h1v1h-1zM0 2h1v1h-1zM3 2h1v1h-1zM6 2h1v1h-1zM0 3h1v1h-1zM2 3h3v1h-3zM6 3h1v1h-1zM0 4h1v1h-1zM6 4h1v1h-1zM0 5h7v1h-7zM0 6h1v1h-1zM6 6h1v1h-1zM0 7h1v1h-1zM6 7h1v1h-1zM0 8h1v1h-1zM6 8h1v1h-1zM0 9h7v1h-7zM0 10h1v1h-1zM6 10h1v1h-1zM0 11h1v1h-1zM2 11h3v1h-3zM6 11h1v1h-1zM0 12h1v1h-1zM3 12h1v1h-1zM6 12h1v1h-1zM0 13h1v1h-1zM6 13h1v1h-1zM0 14h7v1h-7z"/><path fill="#ffffff" d="M1 1h5v1h-5zM1 2h2v1h-2zM4 2h2v1h-2zM1 3h1v1h-1zM5 3h1v1h-1zM1 4h5v1h-5zM2 6h1v1h-1zM4 6h1v1h-1zM1 7h1v1h-1zM3 7h1v1h-1zM5 7h1v1h-1zM2 8h1v1h-1zM4 8h1v1h-1zM1 10h5v1h-5zM1 11h1v1h-1zM5 11h1v1h-1zM1 12h2v1h-2zM4 12h2v1h-2zM1 13h5v1h-5z"/><path fill="#c6c3c6" d="M1 6h1v1h-1zM3 6h1v1h-1zM5 6h1v1h-1zM2 7h1v1h-1zM4 7h1v1h-1zM1 8h1v1h-1zM3 8h1v1h-1zM5 8h1v1h-1z"/></svg>
<span class="t" style="left:83.5px;top:456px;font-size:12px;line-height:12px;color:#000000;transform:scaleX(0.8740);">Scroll - Level 2  Primary Record: JBCD_CMP_R</span>
<div style="left:55px;top:478px;width:7px;height:1px;background:repeating-linear-gradient(to right,#848284 0 1px,transparent 1px 2px) 1px 0"></div>
<div style="left:46px;top:474px;width:9px;height:9px;background:#ffffff;"></div>
<div style="left:46px;top:474px;width:9px;height:1px;background:#848284;"></div>
<div style="left:46px;top:474px;width:1px;height:9px;background:#848284;"></div>
<div style="left:46px;top:482px;width:9px;height:1px;background:#848284;"></div>
<div style="left:54px;top:474px;width:1px;height:9px;background:#848284;"></div>
<div style="left:48px;top:478px;width:5px;height:1px;background:#000000;"></div>
<div style="left:50px;top:476px;width:1px;height:5px;background:#000000;"></div><svg style="left:66px;top:471px" width="7" height="15" shape-rendering="crispEdges"><path fill="#000000" d="M0 0h7v1h-7zM0 1h1v1h-1zM6 1h1v1h-1zM0 2h1v1h-1zM3 2h1v1h-1zM6 2h1v1h-1zM0 3h1v1h-1zM2 3h3v1h-3zM6 3h1v1h-1zM0 4h1v1h-1zM6 4h1v1h-1zM0 5h7v1h-7zM0 6h1v1h-1zM6 6h1v1h-1zM0 7h1v1h-1zM6 7h1v1h-1zM0 8h1v1h-1zM6 8h1v1h-1zM0 9h7v1h-7zM0 10h1v1h-1zM6 10h1v1h-1zM0 11h1v1h-1zM2 11h3v1h-3zM6 11h1v1h-1zM0 12h1v1h-1zM3 12h1v1h-1zM6 12h1v1h-1zM0 13h1v1h-1zM6 13h1v1h-1zM0 14h7v1h-7z"/><path fill="#ffffff" d="M1 1h5v1h-5zM1 2h2v1h-2zM4 2h2v1h-2zM1 3h1v1h-1zM5 3h1v1h-1zM1 4h5v1h-5zM2 6h1v1h-1zM4 6h1v1h-1zM1 7h1v1h-1zM3 7h1v1h-1zM5 7h1v1h-1zM2 8h1v1h-1zM4 8h1v1h-1zM1 10h5v1h-5zM1 11h1v1h-1zM5 11h1v1h-1zM1 12h2v1h-2zM4 12h2v1h-2zM1 13h5v1h-5z"/><path fill="#c6c3c6" d="M1 6h1v1h-1zM3 6h1v1h-1zM5 6h1v1h-1zM2 7h1v1h-1zM4 7h1v1h-1zM1 8h1v1h-1zM3 8h1v1h-1zM5 8h1v1h-1z"/></svg>
<span class="t" style="left:83.5px;top:472px;font-size:12px;line-height:12px;color:#000000;transform:scaleX(0.8740);">Scroll - Level 2  Primary Record: SAL_RATECD</span>
<div style="left:55px;top:494px;width:7px;height:1px;background:repeating-linear-gradient(to right,#848284 0 1px,transparent 1px 2px) 1px 0"></div>
<div style="left:46px;top:490px;width:9px;height:9px;background:#ffffff;"></div>
<div style="left:46px;top:490px;width:9px;height:1px;background:#848284;"></div>
<div style="left:46px;top:490px;width:1px;height:9px;background:#848284;"></div>
<div style="left:46px;top:498px;width:9px;height:1px;background:#848284;"></div>
<div style="left:54px;top:490px;width:1px;height:9px;background:#848284;"></div>
<div style="left:48px;top:494px;width:5px;height:1px;background:#000000;"></div>
<div style="left:50px;top:492px;width:1px;height:5px;background:#000000;"></div><svg style="left:66px;top:487px" width="7" height="15" shape-rendering="crispEdges"><path fill="#000000" d="M0 0h7v1h-7zM0 1h1v1h-1zM6 1h1v1h-1zM0 2h1v1h-1zM3 2h1v1h-1zM6 2h1v1h-1zM0 3h1v1h-1zM2 3h3v1h-3zM6 3h1v1h-1zM0 4h1v1h-1zM6 4h1v1h-1zM0 5h7v1h-7zM0 6h1v1h-1zM6 6h1v1h-1zM0 7h1v1h-1zM6 7h1v1h-1zM0 8h1v1h-1zM6 8h1v1h-1zM0 9h7v1h-7zM0 10h1v1h-1zM6 10h1v1h-1zM0 11h1v1h-1zM2 11h3v1h-3zM6 11h1v1h-1zM0 12h1v1h-1zM3 12h1v1h-1zM6 12h1v1h-1zM0 13h1v1h-1zM6 13h1v1h-1zM0 14h7v1h-7z"/><path fill="#ffffff" d="M1 1h5v1h-5zM1 2h2v1h-2zM4 2h2v1h-2zM1 3h1v1h-1zM5 3h1v1h-1zM1 4h5v1h-5zM2 6h1v1h-1zM4 6h1v1h-1zM1 7h1v1h-1zM3 7h1v1h-1zM5 7h1v1h-1zM2 8h1v1h-1zM4 8h1v1h-1zM1 10h5v1h-5zM1 11h1v1h-1zM5 11h1v1h-1zM1 12h2v1h-2zM4 12h2v1h-2zM1 13h5v1h-5z"/><path fill="#c6c3c6" d="M1 6h1v1h-1zM3 6h1v1h-1zM5 6h1v1h-1zM2 7h1v1h-1zM4 7h1v1h-1zM1 8h1v1h-1zM3 8h1v1h-1zM5 8h1v1h-1z"/></svg>
<span class="t" style="left:83.5px;top:488px;font-size:12px;line-height:12px;color:#000000;transform:scaleX(0.8740);">Scroll - Level 2  Primary Record: JBCD_CMP_R</span>
<div style="left:374px;top:68px;width:650px;height:545px;background:#ffffff;"></div>
<div style="left:374px;top:68px;width:650px;height:1px;background:#848284;"></div>
<div style="left:374px;top:68px;width:1px;height:545px;background:#848284;"></div>
<div style="left:375px;top:69px;width:648px;height:1px;background:#000000;"></div>
<div style="left:375px;top:69px;width:1px;height:543px;background:#000000;"></div>
<div style="left:1022px;top:69px;width:1px;height:543px;background:#c6c3c6;"></div>
<div style="left:1023px;top:68px;width:1px;height:545px;background:#ffffff;"></div>
<div style="left:375px;top:611px;width:648px;height:1px;background:#c6c3c6;"></div>
<div style="left:374px;top:612px;width:650px;height:1px;background:#ffffff;"></div>
<div style="left:376px;top:70px;width:646px;height:18px;background:#c6c3c6;"></div>
<div style="left:376px;top:70px;width:265px;height:1px;background:#ffffff;"></div>
<div style="left:376px;top:70px;width:1px;height:17px;background:#ffffff;"></div>
<div style="left:639px;top:71px;width:1px;height:16px;background:#848284;"></div>
<div style="left:377px;top:86px;width:263px;height:1px;background:#848284;"></div>
<div style="left:640px;top:70px;width:1px;height:18px;background:#000000;"></div><span class="t" style="left:381px;top:73px;font-size:12px;line-height:12px;color:#000000;transform:scaleX(0.9370);">Name</span>
<div style="left:641px;top:70px;width:132px;height:1px;background:#ffffff;"></div>
<div style="left:641px;top:70px;width:1px;height:17px;background:#ffffff;"></div>
<div style="left:771px;top:71px;width:1px;height:16px;background:#848284;"></div>
<div style="left:642px;top:86px;width:130px;height:1px;background:#848284;"></div>
<div style="left:772px;top:70px;width:1px;height:18px;background:#000000;"></div><span class="t" style="left:646px;top:73px;font-size:12px;line-height:12px;color:#000000;transform:scaleX(0.9305);">Record</span>
<div style="left:773px;top:70px;width:117px;height:1px;background:#ffffff;"></div>
<div style="left:773px;top:70px;width:1px;height:17px;background:#ffffff;"></div>
<div style="left:888px;top:71px;width:1px;height:16px;background:#848284;"></div>
<div style="left:774px;top:86px;width:115px;height:1px;background:#848284;"></div>
<div style="left:889px;top:70px;width:1px;height:18px;background:#000000;"></div><span class="t" style="left:778px;top:73px;font-size:12px;line-height:12px;color:#000000;transform:scaleX(0.8841);">Field</span>
<div style="left:890px;top:70px;width:65px;height:1px;background:#ffffff;"></div>
<div style="left:890px;top:70px;width:1px;height:17px;background:#ffffff;"></div>
<div style="left:953px;top:71px;width:1px;height:16px;background:#848284;"></div>
<div style="left:891px;top:86px;width:63px;height:1px;background:#848284;"></div>
<div style="left:954px;top:70px;width:1px;height:18px;background:#000000;"></div><span class="t" style="left:896px;top:73px;font-size:12px;line-height:12px;color:#000000;transform:scaleX(0.8994);">Read Only</span>
<div style="left:955px;top:70px;width:65px;height:1px;background:#ffffff;"></div>
<div style="left:955px;top:70px;width:1px;height:17px;background:#ffffff;"></div>
<div style="left:1018px;top:71px;width:1px;height:16px;background:#848284;"></div>
<div style="left:956px;top:86px;width:63px;height:1px;background:#848284;"></div>
<div style="left:1019px;top:70px;width:1px;height:18px;background:#000000;"></div><span class="t" style="left:960px;top:73px;font-size:12px;line-height:12px;color:#000000;transform:scaleX(0.8459);">Comment</span>
<div style="left:376px;top:87px;width:646px;height:1px;background:#000000;"></div>
<div style="left:1020px;top:70px;width:2px;height:1px;background:#ffffff;"></div>
<div style="left:1020px;top:70px;width:1px;height:17px;background:#ffffff;"></div>
<div style="left:1020px;top:86px;width:2px;height:1px;background:#848284;"></div>
<div style="left:376px;top:376px;width:646px;height:16px;background:#c6c3c6;"></div>
<div style="left:404px;top:104px;width:1px;height:201px;background:repeating-linear-gradient(to bottom,#848284 0 1px,transparent 1px 2px) 0 0px"></div>
<div style="left:424px;top:120px;width:1px;height:25px;background:repeating-linear-gradient(to bottom,#848284 0 1px,transparent 1px 2px) 0 0px"></div>
<div style="left:424px;top:168px;width:1px;height:73px;background:repeating-linear-gradient(to bottom,#848284 0 1px,transparent 1px 2px) 0 0px"></div>
<div style="left:424px;top:264px;width:1px;height:25px;background:repeating-linear-gradient(to bottom,#848284 0 1px,transparent 1px 2px) 0 0px"></div>
<div style="left:390px;top:96px;width:7px;height:1px;background:repeating-linear-gradient(to right,#848284 0 1px,transparent 1px 2px) 0px 0"></div>
<div style="left:380px;top:92px;width:9px;height:9px;background:#ffffff;"></div>
<div style="left:380px;top:92px;width:9px;height:1px;background:#848284;"></div>
<div style="left:380px;top:92px;width:1px;height:9px;background:#848284;"></div>
<div style="left:380px;top:100px;width:9px;height:1px;background:#848284;"></div>
<div style="left:388px;top:92px;width:1px;height:9px;background:#848284;"></div>
<div style="left:382px;top:96px;width:5px;height:1px;background:#000000;"></div><svg style="left:397px;top:89px" width="14" height="14" shape-rendering="crispEdges"><path fill="#000000" d="M1 0h4v1h-4zM7 0h4v1h-4zM0 1h1v1h-1zM5 1h2v1h-2zM11 1h1v1h-1zM0 2h1v1h-1zM2 2h1v1h-1zM6 2h1v1h-1zM8 2h1v1h-1zM12 2h1v1h-1zM0 3h1v1h-1zM3 3h5v1h-5zM9 3h5v1h-5zM0 4h1v1h-1zM3 4h1v1h-1zM7 4h1v1h-1zM9 4h1v1h-1zM13 4h1v1h-1zM1 5h1v1h-1zM3 5h1v1h-1zM7 5h3v1h-3zM13 5h1v1h-1zM2 6h6v1h-6zM9 6h5v1h-5zM1 7h1v1h-1zM5 7h1v1h-1zM11 7h1v1h-1zM0 8h1v1h-1zM2 8h1v1h-1zM5 8h2v1h-2zM8 8h6v1h-6zM0 9h1v1h-1zM3 9h4v1h-4zM8 9h1v1h-1zM13 9h1v1h-1zM0 10h1v1h-1zM3 10h1v1h-1zM7 10h2v1h-2zM13 10h1v1h-1zM1 11h1v1h-1zM3 11h1v1h-1zM7 11h2v1h-2zM13 11h1v1h-1zM2 12h2v1h-2zM7 12h1v1h-1zM9 12h5v1h-5zM3 13h5v1h-5z"/><path fill="#ffff00" d="M1 1h4v1h-4zM1 2h1v1h-1zM3 2h3v1h-3zM1 3h2v1h-2zM1 4h2v1h-2zM4 4h3v1h-3zM2 5h1v1h-1zM4 5h3v1h-3z"/><path fill="#ff0000" d="M7 1h4v1h-4zM7 2h1v1h-1zM9 2h3v1h-3zM8 3h1v1h-1zM8 4h1v1h-1zM10 4h3v1h-3zM10 5h3v1h-3z"/><path fill="#008284" d="M8 6h1v1h-1zM6 7h5v1h-5zM7 8h1v1h-1zM7 9h1v1h-1zM9 9h4v1h-4zM9 10h4v1h-4zM9 11h4v1h-4z"/><path fill="#848284" d="M2 7h3v1h-3zM1 8h1v1h-1zM3 8h2v1h-2zM1 9h2v1h-2zM1 10h2v1h-2zM2 11h1v1h-1z"/><path fill="#00ff00" d="M4 10h3v1h-3zM4 11h3v1h-3zM4 12h3v1h-3z"/></svg>
<span class="t" style="left:417.5px;top:90px;font-size:12px;line-height:12px;color:#000000;transform:scaleX(0.8618);">JOBCODE</span>
<div style="left:410px;top:112px;width:6px;height:1px;background:repeating-linear-gradient(to right,#848284 0 1px,transparent 1px 2px) 0px 0"></div>
<div style="left:400px;top:108px;width:9px;height:9px;background:#ffffff;"></div>
<div style="left:400px;top:108px;width:9px;height:1px;background:#848284;"></div>
<div style="left:400px;top:108px;width:1px;height:9px;background:#848284;"></div>
<div style="left:400px;top:116px;width:9px;height:1px;background:#848284;"></div>
<div style="left:408px;top:108px;width:1px;height:9px;background:#848284;"></div>
<div style="left:402px;top:112px;width:5px;height:1px;background:#000000;"></div><svg style="left:416px;top:105px" width="16" height="14" shape-rendering="crispEdges"><path fill="#000000" d="M6 0h4v1h-4zM4 1h2v1h-2zM10 1h2v1h-2zM3 2h1v1h-1zM11 2h2v1h-2zM2 3h1v1h-1zM9 3h5v1h-5zM2 4h1v1h-1zM8 4h2v1h-2zM14 4h1v1h-1zM0 5h8v1h-8zM12 5h2v1h-2zM15 5h1v1h-1zM0 6h1v1h-1zM12 6h1v1h-1zM14 6h2v1h-2zM0 7h1v1h-1zM2 7h1v1h-1zM13 7h1v1h-1zM15 7h1v1h-1zM1 8h1v1h-1zM3 8h1v1h-1zM6 8h1v1h-1zM8 8h1v1h-1zM15 8h1v1h-1zM2 9h1v1h-1zM4 9h3v1h-3zM14 9h1v1h-1zM2 10h1v1h-1zM11 10h3v1h-3zM3 11h1v1h-1zM12 11h1v1h-1zM4 12h2v1h-2zM10 12h2v1h-2zM6 13h4v1h-4z"/><path fill="#00ff00" d="M6 1h1v1h-1zM6 2h1v1h-1zM3 3h1v1h-1zM7 3h1v1h-1zM3 4h1v1h-1zM7 4h1v1h-1zM8 9h1v1h-1zM8 10h1v1h-1zM8 11h2v1h-2zM9 12h1v1h-1z"/><path fill="#ffff00" d="M7 1h1v1h-1zM7 2h1v1h-1zM7 11h1v1h-1zM8 12h1v1h-1z"/><path fill="#e7e3e7" d="M8 1h2v1h-2zM8 2h1v1h-1zM11 4h1v1h-1zM13 4h1v1h-1zM8 5h1v1h-1zM10 5h1v1h-1zM14 5h1v1h-1zM8 6h1v1h-1zM10 6h1v1h-1zM1 7h1v1h-1zM3 7h1v1h-1zM5 7h1v1h-1zM7 7h1v1h-1zM9 7h1v1h-1zM2 8h1v1h-1zM4 8h2v1h-2zM7 8h1v1h-1zM7 9h1v1h-1zM6 10h1v1h-1zM6 11h1v1h-1zM6 12h1v1h-1z"/><path fill="#008284" d="M4 2h1v1h-1zM4 3h1v1h-1zM4 4h1v1h-1zM11 11h1v1h-1z"/><path fill="#0000ff" d="M5 2h1v1h-1zM5 3h2v1h-2zM5 4h2v1h-2zM9 9h1v1h-1zM9 10h2v1h-2zM10 11h1v1h-1z"/><path fill="#ffffff" d="M9 2h2v1h-2zM10 4h1v1h-1zM12 4h1v1h-1zM9 5h1v1h-1zM11 5h1v1h-1zM1 6h7v1h-7zM9 6h1v1h-1zM11 6h1v1h-1zM13 6h1v1h-1zM4 7h1v1h-1zM6 7h1v1h-1zM8 7h1v1h-1zM10 7h3v1h-3zM14 7h1v1h-1zM9 8h6v1h-6zM3 9h1v1h-1zM10 9h4v1h-4zM3 10h3v1h-3zM4 11h2v1h-2z"/><path fill="#848200" d="M8 3h1v1h-1zM7 10h1v1h-1zM7 12h1v1h-1z"/></svg>
<span class="t" style="left:438.25px;top:106px;font-size:12px;line-height:12px;color:#000000;transform:scaleX(0.8644);">GETKEYS</span>
<div style="left:426px;top:128px;width:10px;height:1px;background:repeating-linear-gradient(to right,#848284 0 1px,transparent 1px 2px) 0px 0"></div><svg style="left:436px;top:122px" width="16" height="12" shape-rendering="crispEdges"><path fill="#000000" d="M6 0h1v1h-1zM5 1h1v1h-1zM7 1h1v1h-1zM4 2h1v1h-1zM8 2h1v1h-1zM3 3h1v1h-1zM9 3h1v1h-1zM2 4h1v1h-1zM9 4h1v1h-1zM12 4h2v1h-2zM1 5h1v1h-1zM9 5h1v1h-1zM11 5h1v1h-1zM14 5h1v1h-1zM0 6h1v1h-1zM5 6h6v1h-6zM15 6h1v1h-1zM0 7h1v1h-1zM4 7h1v1h-1zM12 7h1v1h-1zM15 7h1v1h-1zM1 8h1v1h-1zM5 8h1v1h-1zM7 8h1v1h-1zM9 8h2v1h-2zM15 8h1v1h-1zM2 9h1v1h-1zM6 9h1v1h-1zM8 9h1v1h-1zM11 9h1v1h-1zM14 9h1v1h-1zM3 10h1v1h-1zM5 10h1v1h-1zM12 10h2v1h-2zM4 11h1v1h-1z"/><path fill="#00ffff" d="M6 1h1v1h-1zM5 2h3v1h-3zM4 3h5v1h-5zM3 4h5v1h-5zM2 5h5v1h-5zM1 6h4v1h-4zM2 7h2v1h-2zM4 8h1v1h-1z"/><path fill="#0000ff" d="M8 4h1v1h-1zM7 5h2v1h-2zM1 7h1v1h-1zM2 8h2v1h-2zM3 9h3v1h-3zM4 10h1v1h-1z"/><path fill="#ffffff" d="M12 5h2v1h-2zM11 6h1v1h-1zM5 7h1v1h-1z"/><path fill="#848200" d="M12 6h3v1h-3zM6 7h6v1h-6zM13 7h2v1h-2zM6 8h1v1h-1zM8 8h1v1h-1zM11 8h4v1h-4zM12 9h2v1h-2z"/></svg>
<span class="t" style="left:457.75px;top:122px;font-size:12px;line-height:12px;color:#000000;transform:scaleX(0.8912);">SETID</span>
<span class="t" style="left:646px;top:122px;font-size:12px;line-height:12px;color:#000000;transform:scaleX(0.8766);">JOBCODE_TBL</span>
<span class="t" style="left:778px;top:122px;font-size:12px;line-height:12px;color:#000000;transform:scaleX(0.9054);">SETID</span>
<div style="left:426px;top:144px;width:10px;height:1px;background:repeating-linear-gradient(to right,#848284 0 1px,transparent 1px 2px) 0px 0"></div><svg style="left:436px;top:138px" width="16" height="12" shape-rendering="crispEdges"><path fill="#000000" d="M6 0h1v1h-1zM5 1h1v1h-1zM7 1h1v1h-1zM4 2h1v1h-1zM8 2h1v1h-1zM3 3h1v1h-1zM9 3h1v1h-1zM2 4h1v1h-1zM9 4h1v1h-1zM12 4h2v1h-2zM1 5h1v1h-1zM9 5h1v1h-1zM11 5h1v1h-1zM14 5h1v1h-1zM0 6h1v1h-1zM5 6h6v1h-6zM15 6h1v1h-1zM0 7h1v1h-1zM4 7h1v1h-1zM12 7h1v1h-1zM15 7h1v1h-1zM1 8h1v1h-1zM5 8h1v1h-1zM7 8h1v1h-1zM9 8h2v1h-2zM15 8h1v1h-1zM2 9h1v1h-1zM6 9h1v1h-1zM8 9h1v1h-1zM11 9h1v1h-1zM14 9h1v1h-1zM3 10h1v1h-1zM5 10h1v1h-1zM12 10h2v1h-2zM4 11h1v1h-1z"/><path fill="#00ffff" d="M6 1h1v1h-1zM5 2h3v1h-3zM4 3h5v1h-5zM3 4h5v1h-5zM2 5h5v1h-5zM1 6h4v1h-4zM2 7h2v1h-2zM4 8h1v1h-1z"/><path fill="#0000ff" d="M8 4h1v1h-1zM7 5h2v1h-2zM1 7h1v1h-1zM2 8h2v1h-2zM3 9h3v1h-3zM4 10h1v1h-1z"/><path fill="#ffffff" d="M12 5h2v1h-2zM11 6h1v1h-1zM5 7h1v1h-1z"/><path fill="#848200" d="M12 6h3v1h-3zM6 7h6v1h-6zM13 7h2v1h-2zM6 8h1v1h-1zM8 8h1v1h-1zM11 8h4v1h-4zM12 9h2v1h-2z"/></svg>
<span class="t" style="left:457.75px;top:138px;font-size:12px;line-height:12px;color:#000000;transform:scaleX(0.8532);">JOBCODE</span>
<span class="t" style="left:646px;top:138px;font-size:12px;line-height:12px;color:#000000;transform:scaleX(0.8766);">JOBCODE_TBL</span>
<span class="t" style="left:778px;top:138px;font-size:12px;line-height:12px;color:#000000;transform:scaleX(0.8618);">JOBCODE</span>
<div style="left:410px;top:160px;width:6px;height:1px;background:repeating-linear-gradient(to right,#848284 0 1px,transparent 1px 2px) 0px 0"></div>
<div style="left:400px;top:156px;width:9px;height:9px;background:#ffffff;"></div>
<div style="left:400px;top:156px;width:9px;height:1px;background:#848284;"></div>
<div style="left:400px;top:156px;width:1px;height:9px;background:#848284;"></div>
<div style="left:400px;top:164px;width:9px;height:1px;background:#848284;"></div>
<div style="left:408px;top:156px;width:1px;height:9px;background:#848284;"></div>
<div style="left:402px;top:160px;width:5px;height:1px;background:#000000;"></div><svg style="left:416px;top:153px" width="16" height="14" shape-rendering="crispEdges"><path fill="#000000" d="M6 0h4v1h-4zM4 1h2v1h-2zM10 1h2v1h-2zM3 2h1v1h-1zM11 2h2v1h-2zM2 3h1v1h-1zM9 3h5v1h-5zM2 4h1v1h-1zM8 4h2v1h-2zM14 4h1v1h-1zM0 5h8v1h-8zM12 5h2v1h-2zM15 5h1v1h-1zM0 6h1v1h-1zM12 6h1v1h-1zM14 6h2v1h-2zM0 7h1v1h-1zM2 7h1v1h-1zM13 7h1v1h-1zM15 7h1v1h-1zM1 8h1v1h-1zM3 8h1v1h-1zM6 8h1v1h-1zM8 8h1v1h-1zM15 8h1v1h-1zM2 9h1v1h-1zM4 9h3v1h-3zM14 9h1v1h-1zM2 10h1v1h-1zM11 10h3v1h-3zM3 11h1v1h-1zM12 11h1v1h-1zM4 12h2v1h-2zM10 12h2v1h-2zM6 13h4v1h-4z"/><path fill="#00ff00" d="M6 1h1v1h-1zM6 2h1v1h-1zM3 3h1v1h-1zM7 3h1v1h-1zM3 4h1v1h-1zM7 4h1v1h-1zM8 9h1v1h-1zM8 10h1v1h-1zM8 11h2v1h-2zM9 12h1v1h-1z"/><path fill="#ffff00" d="M7 1h1v1h-1zM7 2h1v1h-1zM7 11h1v1h-1zM8 12h1v1h-1z"/><path fill="#e7e3e7" d="M8 1h2v1h-2zM8 2h1v1h-1zM11 4h1v1h-1zM13 4h1v1h-1zM8 5h1v1h-1zM10 5h1v1h-1zM14 5h1v1h-1zM8 6h1v1h-1zM10 6h1v1h-1zM1 7h1v1h-1zM3 7h1v1h-1zM5 7h1v1h-1zM7 7h1v1h-1zM9 7h1v1h-1zM2 8h1v1h-1zM4 8h2v1h-2zM7 8h1v1h-1zM7 9h1v1h-1zM6 10h1v1h-1zM6 11h1v1h-1zM6 12h1v1h-1z"/><path fill="#008284" d="M4 2h1v1h-1zM4 3h1v1h-1zM4 4h1v1h-1zM11 11h1v1h-1z"/><path fill="#0000ff" d="M5 2h1v1h-1zM5 3h2v1h-2zM5 4h2v1h-2zM9 9h1v1h-1zM9 10h2v1h-2zM10 11h1v1h-1z"/><path fill="#ffffff" d="M9 2h2v1h-2zM10 4h1v1h-1zM12 4h1v1h-1zM9 5h1v1h-1zM11 5h1v1h-1zM1 6h7v1h-7zM9 6h1v1h-1zM11 6h1v1h-1zM13 6h1v1h-1zM4 7h1v1h-1zM6 7h1v1h-1zM8 7h1v1h-1zM10 7h3v1h-3zM14 7h1v1h-1zM9 8h6v1h-6zM3 9h1v1h-1zM10 9h4v1h-4zM3 10h3v1h-3zM4 11h2v1h-2z"/><path fill="#848200" d="M8 3h1v1h-1zM7 10h1v1h-1zM7 12h1v1h-1z"/></svg>
<span class="t" style="left:438.25px;top:154px;font-size:12px;line-height:12px;color:#000000;transform:scaleX(0.8748);">FINDKEYS</span>
<div style="left:426px;top:176px;width:10px;height:1px;background:repeating-linear-gradient(to right,#848284 0 1px,transparent 1px 2px) 0px 0"></div><svg style="left:436px;top:170px" width="16" height="12" shape-rendering="crispEdges"><path fill="#000000" d="M6 0h1v1h-1zM5 1h1v1h-1zM7 1h1v1h-1zM4 2h1v1h-1zM8 2h1v1h-1zM3 3h1v1h-1zM9 3h1v1h-1zM2 4h1v1h-1zM9 4h1v1h-1zM12 4h2v1h-2zM1 5h1v1h-1zM9 5h1v1h-1zM11 5h1v1h-1zM14 5h1v1h-1zM0 6h1v1h-1zM5 6h6v1h-6zM15 6h1v1h-1zM0 7h1v1h-1zM4 7h1v1h-1zM12 7h1v1h-1zM15 7h1v1h-1zM1 8h1v1h-1zM5 8h1v1h-1zM7 8h1v1h-1zM9 8h2v1h-2zM15 8h1v1h-1zM2 9h1v1h-1zM6 9h1v1h-1zM8 9h1v1h-1zM11 9h1v1h-1zM14 9h1v1h-1zM3 10h1v1h-1zM5 10h1v1h-1zM12 10h2v1h-2zM4 11h1v1h-1z"/><path fill="#00ffff" d="M6 1h1v1h-1zM5 2h3v1h-3zM4 3h5v1h-5zM3 4h5v1h-5zM2 5h5v1h-5zM1 6h4v1h-4zM2 7h2v1h-2zM4 8h1v1h-1z"/><path fill="#0000ff" d="M8 4h1v1h-1zM7 5h2v1h-2zM1 7h1v1h-1zM2 8h2v1h-2zM3 9h3v1h-3zM4 10h1v1h-1z"/><path fill="#ffffff" d="M12 5h2v1h-2zM11 6h1v1h-1zM5 7h1v1h-1z"/><path fill="#848200" d="M12 6h3v1h-3zM6 7h6v1h-6zM13 7h2v1h-2zM6 8h1v1h-1zM8 8h1v1h-1zM11 8h4v1h-4zM12 9h2v1h-2z"/></svg>
<span class="t" style="left:457.75px;top:170px;font-size:12px;line-height:12px;color:#000000;transform:scaleX(0.8912);">SETID</span>
<span class="t" style="left:646px;top:170px;font-size:12px;line-height:12px;color:#000000;transform:scaleX(0.8766);">JOBCODE_TBL</span>
<span class="t" style="left:778px;top:170px;font-size:12px;line-height:12px;color:#000000;transform:scaleX(0.9054);">SETID</span>
<div style="left:426px;top:192px;width:10px;height:1px;background:repeating-linear-gradient(to right,#848284 0 1px,transparent 1px 2px) 0px 0"></div><svg style="left:436px;top:186px" width="16" height="12" shape-rendering="crispEdges"><path fill="#000000" d="M6 0h1v1h-1zM5 1h1v1h-1zM7 1h1v1h-1zM4 2h1v1h-1zM8 2h1v1h-1zM3 3h1v1h-1zM9 3h1v1h-1zM2 4h1v1h-1zM9 4h1v1h-1zM12 4h2v1h-2zM1 5h1v1h-1zM9 5h1v1h-1zM11 5h1v1h-1zM14 5h1v1h-1zM0 6h1v1h-1zM5 6h6v1h-6zM15 6h1v1h-1zM0 7h1v1h-1zM4 7h1v1h-1zM12 7h1v1h-1zM15 7h1v1h-1zM1 8h1v1h-1zM5 8h1v1h-1zM7 8h1v1h-1zM9 8h2v1h-2zM15 8h1v1h-1zM2 9h1v1h-1zM6 9h1v1h-1zM8 9h1v1h-1zM11 9h1v1h-1zM14 9h1v1h-1zM3 10h1v1h-1zM5 10h1v1h-1zM12 10h2v1h-2zM4 11h1v1h-1z"/><path fill="#00ffff" d="M6 1h1v1h-1zM5 2h3v1h-3zM4 3h5v1h-5zM3 4h5v1h-5zM2 5h5v1h-5zM1 6h4v1h-4zM2 7h2v1h-2zM4 8h1v1h-1z"/><path fill="#0000ff" d="M8 4h1v1h-1zM7 5h2v1h-2zM1 7h1v1h-1zM2 8h2v1h-2zM3 9h3v1h-3zM4 10h1v1h-1z"/><path fill="#ffffff" d="M12 5h2v1h-2zM11 6h1v1h-1zM5 7h1v1h-1z"/><path fill="#848200" d="M12 6h3v1h-3zM6 7h6v1h-6zM13 7h2v1h-2zM6 8h1v1h-1zM8 8h1v1h-1zM11 8h4v1h-4zM12 9h2v1h-2z"/></svg>
<span class="t" style="left:457.75px;top:186px;font-size:12px;line-height:12px;color:#000000;transform:scaleX(0.8532);">JOBCODE</span>
<span class="t" style="left:646px;top:186px;font-size:12px;line-height:12px;color:#000000;transform:scaleX(0.8766);">JOBCODE_TBL</span>
<span class="t" style="left:778px;top:186px;font-size:12px;line-height:12px;color:#000000;transform:scaleX(0.8618);">JOBCODE</span>
<div style="left:426px;top:208px;width:10px;height:1px;background:repeating-linear-gradient(to right,#848284 0 1px,transparent 1px 2px) 0px 0"></div><svg style="left:436px;top:202px" width="16" height="12" shape-rendering="crispEdges"><path fill="#000000" d="M6 0h1v1h-1zM5 1h1v1h-1zM7 1h1v1h-1zM4 2h1v1h-1zM8 2h1v1h-1zM3 3h1v1h-1zM9 3h1v1h-1zM2 4h1v1h-1zM9 4h1v1h-1zM12 4h2v1h-2zM1 5h1v1h-1zM9 5h1v1h-1zM11 5h1v1h-1zM14 5h1v1h-1zM0 6h1v1h-1zM5 6h6v1h-6zM15 6h1v1h-1zM0 7h1v1h-1zM4 7h1v1h-1zM12 7h1v1h-1zM15 7h1v1h-1zM1 8h1v1h-1zM5 8h1v1h-1zM7 8h1v1h-1zM9 8h2v1h-2zM15 8h1v1h-1zM2 9h1v1h-1zM6 9h1v1h-1zM8 9h1v1h-1zM11 9h1v1h-1zM14 9h1v1h-1zM3 10h1v1h-1zM5 10h1v1h-1zM12 10h2v1h-2zM4 11h1v1h-1z"/><path fill="#00ffff" d="M6 1h1v1h-1zM5 2h3v1h-3zM4 3h5v1h-5zM3 4h5v1h-5zM2 5h5v1h-5zM1 6h4v1h-4zM2 7h2v1h-2zM4 8h1v1h-1z"/><path fill="#0000ff" d="M8 4h1v1h-1zM7 5h2v1h-2zM1 7h1v1h-1zM2 8h2v1h-2zM3 9h3v1h-3zM4 10h1v1h-1z"/><path fill="#ffffff" d="M12 5h2v1h-2zM11 6h1v1h-1zM5 7h1v1h-1z"/><path fill="#848200" d="M12 6h3v1h-3zM6 7h6v1h-6zM13 7h2v1h-2zM6 8h1v1h-1zM8 8h1v1h-1zM11 8h4v1h-4zM12 9h2v1h-2z"/></svg>
<span class="t" style="left:457.75px;top:202px;font-size:12px;line-height:12px;color:#000000;transform:scaleX(0.9044);">DESCR</span>
<span class="t" style="left:646px;top:202px;font-size:12px;line-height:12px;color:#000000;transform:scaleX(0.8766);">JOBCODE_TBL</span>
<span class="t" style="left:778px;top:202px;font-size:12px;line-height:12px;color:#000000;transform:scaleX(0.9044);">DESCR</span>
<div style="left:426px;top:224px;width:10px;height:1px;background:repeating-linear-gradient(to right,#848284 0 1px,transparent 1px 2px) 0px 0"></div><svg style="left:436px;top:218px" width="16" height="12" shape-rendering="crispEdges"><path fill="#000000" d="M6 0h1v1h-1zM5 1h1v1h-1zM7 1h1v1h-1zM4 2h1v1h-1zM8 2h1v1h-1zM3 3h1v1h-1zM9 3h1v1h-1zM2 4h1v1h-1zM9 4h1v1h-1zM12 4h2v1h-2zM1 5h1v1h-1zM9 5h1v1h-1zM11 5h1v1h-1zM14 5h1v1h-1zM0 6h1v1h-1zM5 6h6v1h-6zM15 6h1v1h-1zM0 7h1v1h-1zM4 7h1v1h-1zM12 7h1v1h-1zM15 7h1v1h-1zM1 8h1v1h-1zM5 8h1v1h-1zM7 8h1v1h-1zM9 8h2v1h-2zM15 8h1v1h-1zM2 9h1v1h-1zM6 9h1v1h-1zM8 9h1v1h-1zM11 9h1v1h-1zM14 9h1v1h-1zM3 10h1v1h-1zM5 10h1v1h-1zM12 10h2v1h-2zM4 11h1v1h-1z"/><path fill="#00ffff" d="M6 1h1v1h-1zM5 2h3v1h-3zM4 3h5v1h-5zM3 4h5v1h-5zM2 5h5v1h-5zM1 6h4v1h-4zM2 7h2v1h-2zM4 8h1v1h-1z"/><path fill="#0000ff" d="M8 4h1v1h-1zM7 5h2v1h-2zM1 7h1v1h-1zM2 8h2v1h-2zM3 9h3v1h-3zM4 10h1v1h-1z"/><path fill="#ffffff" d="M12 5h2v1h-2zM11 6h1v1h-1zM5 7h1v1h-1z"/><path fill="#848200" d="M12 6h3v1h-3zM6 7h6v1h-6zM13 7h2v1h-2zM6 8h1v1h-1zM8 8h1v1h-1zM11 8h4v1h-4zM12 9h2v1h-2z"/></svg>
<span class="t" style="left:457.75px;top:218px;font-size:12px;line-height:12px;color:#000000;transform:scaleX(0.8785);">GVT_OCC_SERIES</span>
<span class="t" style="left:646px;top:218px;font-size:12px;line-height:12px;color:#000000;transform:scaleX(0.8766);">JOBCODE_TBL</span>
<span class="t" style="left:778px;top:218px;font-size:12px;line-height:12px;color:#000000;transform:scaleX(0.8785);">GVT_OCC_SERIES</span>
<div style="left:426px;top:240px;width:10px;height:1px;background:repeating-linear-gradient(to right,#848284 0 1px,transparent 1px 2px) 0px 0"></div><svg style="left:436px;top:234px" width="16" height="12" shape-rendering="crispEdges"><path fill="#000000" d="M6 0h1v1h-1zM5 1h1v1h-1zM7 1h1v1h-1zM4 2h1v1h-1zM8 2h1v1h-1zM3 3h1v1h-1zM9 3h1v1h-1zM2 4h1v1h-1zM9 4h1v1h-1zM12 4h2v1h-2zM1 5h1v1h-1zM9 5h1v1h-1zM11 5h1v1h-1zM14 5h1v1h-1zM0 6h1v1h-1zM5 6h6v1h-6zM15 6h1v1h-1zM0 7h1v1h-1zM4 7h1v1h-1zM12 7h1v1h-1zM15 7h1v1h-1zM1 8h1v1h-1zM5 8h1v1h-1zM7 8h1v1h-1zM9 8h2v1h-2zM15 8h1v1h-1zM2 9h1v1h-1zM6 9h1v1h-1zM8 9h1v1h-1zM11 9h1v1h-1zM14 9h1v1h-1zM3 10h1v1h-1zM5 10h1v1h-1zM12 10h2v1h-2zM4 11h1v1h-1z"/><path fill="#00ffff" d="M6 1h1v1h-1zM5 2h3v1h-3zM4 3h5v1h-5zM3 4h5v1h-5zM2 5h5v1h-5zM1 6h4v1h-4zM2 7h2v1h-2zM4 8h1v1h-1z"/><path fill="#0000ff" d="M8 4h1v1h-1zM7 5h2v1h-2zM1 7h1v1h-1zM2 8h2v1h-2zM3 9h3v1h-3zM4 10h1v1h-1z"/><path fill="#ffffff" d="M12 5h2v1h-2zM11 6h1v1h-1zM5 7h1v1h-1z"/><path fill="#848200" d="M12 6h3v1h-3zM6 7h6v1h-6zM13 7h2v1h-2zM6 8h1v1h-1zM8 8h1v1h-1zM11 8h4v1h-4zM12 9h2v1h-2z"/></svg>
<span class="t" style="left:457.75px;top:234px;font-size:12px;line-height:12px;color:#000000;transform:scaleX(0.9028);">GVT_OFFICIAL_DESCR</span>
<span class="t" style="left:646px;top:234px;font-size:12px;line-height:12px;color:#000000;transform:scaleX(0.8766);">JOBCODE_TBL</span>
<span class="t" style="left:778px;top:234px;font-size:12px;line-height:12px;color:#000000;transform:scaleX(0.8803);">GVT_OFFICIAL_DE...</span>
<div style="left:410px;top:256px;width:6px;height:1px;background:repeating-linear-gradient(to right,#848284 0 1px,transparent 1px 2px) 0px 0"></div>
<div style="left:400px;top:252px;width:9px;height:9px;background:#ffffff;"></div>
<div style="left:400px;top:252px;width:9px;height:1px;background:#848284;"></div>
<div style="left:400px;top:252px;width:1px;height:9px;background:#848284;"></div>
<div style="left:400px;top:260px;width:9px;height:1px;background:#848284;"></div>
<div style="left:408px;top:252px;width:1px;height:9px;background:#848284;"></div>
<div style="left:402px;top:256px;width:5px;height:1px;background:#000000;"></div><svg style="left:416px;top:249px" width="16" height="14" shape-rendering="crispEdges"><path fill="#000000" d="M6 0h4v1h-4zM4 1h2v1h-2zM10 1h2v1h-2zM3 2h1v1h-1zM11 2h2v1h-2zM2 3h1v1h-1zM9 3h5v1h-5zM2 4h1v1h-1zM8 4h2v1h-2zM14 4h1v1h-1zM0 5h8v1h-8zM12 5h2v1h-2zM15 5h1v1h-1zM0 6h1v1h-1zM12 6h1v1h-1zM14 6h2v1h-2zM0 7h1v1h-1zM2 7h1v1h-1zM13 7h1v1h-1zM15 7h1v1h-1zM1 8h1v1h-1zM3 8h1v1h-1zM6 8h1v1h-1zM8 8h1v1h-1zM15 8h1v1h-1zM2 9h1v1h-1zM4 9h3v1h-3zM14 9h1v1h-1zM2 10h1v1h-1zM11 10h3v1h-3zM3 11h1v1h-1zM12 11h1v1h-1zM4 12h2v1h-2zM10 12h2v1h-2zM6 13h4v1h-4z"/><path fill="#00ff00" d="M6 1h1v1h-1zM6 2h1v1h-1zM3 3h1v1h-1zM7 3h1v1h-1zM3 4h1v1h-1zM7 4h1v1h-1zM8 9h1v1h-1zM8 10h1v1h-1zM8 11h2v1h-2zM9 12h1v1h-1z"/><path fill="#ffff00" d="M7 1h1v1h-1zM7 2h1v1h-1zM7 11h1v1h-1zM8 12h1v1h-1z"/><path fill="#e7e3e7" d="M8 1h2v1h-2zM8 2h1v1h-1zM11 4h1v1h-1zM13 4h1v1h-1zM8 5h1v1h-1zM10 5h1v1h-1zM14 5h1v1h-1zM8 6h1v1h-1zM10 6h1v1h-1zM1 7h1v1h-1zM3 7h1v1h-1zM5 7h1v1h-1zM7 7h1v1h-1zM9 7h1v1h-1zM2 8h1v1h-1zM4 8h2v1h-2zM7 8h1v1h-1zM7 9h1v1h-1zM6 10h1v1h-1zM6 11h1v1h-1zM6 12h1v1h-1z"/><path fill="#008284" d="M4 2h1v1h-1zM4 3h1v1h-1zM4 4h1v1h-1zM11 11h1v1h-1z"/><path fill="#0000ff" d="M5 2h1v1h-1zM5 3h2v1h-2zM5 4h2v1h-2zM9 9h1v1h-1zM9 10h2v1h-2zM10 11h1v1h-1z"/><path fill="#ffffff" d="M9 2h2v1h-2zM10 4h1v1h-1zM12 4h1v1h-1zM9 5h1v1h-1zM11 5h1v1h-1zM1 6h7v1h-7zM9 6h1v1h-1zM11 6h1v1h-1zM13 6h1v1h-1zM4 7h1v1h-1zM6 7h1v1h-1zM8 7h1v1h-1zM10 7h3v1h-3zM14 7h1v1h-1zM9 8h6v1h-6zM3 9h1v1h-1zM10 9h4v1h-4zM3 10h3v1h-3zM4 11h2v1h-2z"/><path fill="#848200" d="M8 3h1v1h-1zM7 10h1v1h-1zM7 12h1v1h-1z"/></svg>
<div style="left:426px;top:272px;width:10px;height:1px;background:repeating-linear-gradient(to right,#848284 0 1px,transparent 1px 2px) 0px 0"></div><svg style="left:436px;top:266px" width="16" height="12" shape-rendering="crispEdges"><path fill="#000000" d="M6 0h1v1h-1zM5 1h1v1h-1zM7 1h1v1h-1zM4 2h1v1h-1zM8 2h1v1h-1zM3 3h1v1h-1zM9 3h1v1h-1zM2 4h1v1h-1zM9 4h1v1h-1zM12 4h2v1h-2zM1 5h1v1h-1zM9 5h1v1h-1zM11 5h1v1h-1zM14 5h1v1h-1zM0 6h1v1h-1zM5 6h6v1h-6zM15 6h1v1h-1zM0 7h1v1h-1zM4 7h1v1h-1zM12 7h1v1h-1zM15 7h1v1h-1zM1 8h1v1h-1zM5 8h1v1h-1zM7 8h1v1h-1zM9 8h2v1h-2zM15 8h1v1h-1zM2 9h1v1h-1zM6 9h1v1h-1zM8 9h1v1h-1zM11 9h1v1h-1zM14 9h1v1h-1zM3 10h1v1h-1zM5 10h1v1h-1zM12 10h2v1h-2zM4 11h1v1h-1z"/><path fill="#00ffff" d="M6 1h1v1h-1zM5 2h3v1h-3zM4 3h5v1h-5zM3 4h5v1h-5zM2 5h5v1h-5zM1 6h4v1h-4zM2 7h2v1h-2zM4 8h1v1h-1z"/><path fill="#0000ff" d="M8 4h1v1h-1zM7 5h2v1h-2zM1 7h1v1h-1zM2 8h2v1h-2zM3 9h3v1h-3zM4 10h1v1h-1z"/><path fill="#ffffff" d="M12 5h2v1h-2zM11 6h1v1h-1zM5 7h1v1h-1z"/><path fill="#848200" d="M12 6h3v1h-3zM6 7h6v1h-6zM13 7h2v1h-2zM6 8h1v1h-1zM8 8h1v1h-1zM11 8h4v1h-4zM12 9h2v1h-2z"/></svg>
<span class="t" style="left:457.75px;top:266px;font-size:12px;line-height:12px;color:#000000;transform:scaleX(0.8912);">SETID</span>
<span class="t" style="left:646px;top:266px;font-size:12px;line-height:12px;color:#000000;transform:scaleX(0.8766);">JOBCODE_TBL</span>
<span class="t" style="left:778px;top:266px;font-size:12px;line-height:12px;color:#000000;transform:scaleX(0.9054);">SETID</span>
<div style="left:426px;top:288px;width:10px;height:1px;background:repeating-linear-gradient(to right,#848284 0 1px,transparent 1px 2px) 0px 0"></div><svg style="left:436px;top:282px" width="16" height="12" shape-rendering="crispEdges"><path fill="#000000" d="M6 0h1v1h-1zM5 1h1v1h-1zM7 1h1v1h-1zM4 2h1v1h-1zM8 2h1v1h-1zM3 3h1v1h-1zM9 3h1v1h-1zM2 4h1v1h-1zM9 4h1v1h-1zM12 4h2v1h-2zM1 5h1v1h-1zM9 5h1v1h-1zM11 5h1v1h-1zM14 5h1v1h-1zM0 6h1v1h-1zM5 6h6v1h-6zM15 6h1v1h-1zM0 7h1v1h-1zM4 7h1v1h-1zM12 7h1v1h-1zM15 7h1v1h-1zM1 8h1v1h-1zM5 8h1v1h-1zM7 8h1v1h-1zM9 8h2v1h-2zM15 8h1v1h-1zM2 9h1v1h-1zM6 9h1v1h-1zM8 9h1v1h-1zM11 9h1v1h-1zM14 9h1v1h-1zM3 10h1v1h-1zM5 10h1v1h-1zM12 10h2v1h-2zM4 11h1v1h-1z"/><path fill="#00ffff" d="M6 1h1v1h-1zM5 2h3v1h-3zM4 3h5v1h-5zM3 4h5v1h-5zM2 5h5v1h-5zM1 6h4v1h-4zM2 7h2v1h-2zM4 8h1v1h-1z"/><path fill="#0000ff" d="M8 4h1v1h-1zM7 5h2v1h-2zM1 7h1v1h-1zM2 8h2v1h-2zM3 9h3v1h-3zM4 10h1v1h-1z"/><path fill="#ffffff" d="M12 5h2v1h-2zM11 6h1v1h-1zM5 7h1v1h-1z"/><path fill="#848200" d="M12 6h3v1h-3zM6 7h6v1h-6zM13 7h2v1h-2zM6 8h1v1h-1zM8 8h1v1h-1zM11 8h4v1h-4zM12 9h2v1h-2z"/></svg>
<span class="t" style="left:457.75px;top:282px;font-size:12px;line-height:12px;color:#000000;transform:scaleX(0.8532);">JOBCODE</span>
<span class="t" style="left:646px;top:282px;font-size:12px;line-height:12px;color:#000000;transform:scaleX(0.8766);">JOBCODE_TBL</span>
<span class="t" style="left:778px;top:282px;font-size:12px;line-height:12px;color:#000000;transform:scaleX(0.8618);">JOBCODE</span>
<div style="left:410px;top:304px;width:6px;height:1px;background:repeating-linear-gradient(to right,#848284 0 1px,transparent 1px 2px) 0px 0"></div>
<div style="left:400px;top:300px;width:9px;height:9px;background:#ffffff;"></div>
<div style="left:400px;top:300px;width:9px;height:1px;background:#848284;"></div>
<div style="left:400px;top:300px;width:1px;height:9px;background:#848284;"></div>
<div style="left:400px;top:308px;width:9px;height:1px;background:#848284;"></div>
<div style="left:408px;top:300px;width:1px;height:9px;background:#848284;"></div>
<div style="left:402px;top:304px;width:5px;height:1px;background:#000000;"></div><svg style="left:416px;top:297px" width="16" height="14" shape-rendering="crispEdges"><path fill="#000000" d="M6 0h4v1h-4zM4 1h2v1h-2zM10 1h2v1h-2zM3 2h1v1h-1zM11 2h2v1h-2zM2 3h1v1h-1zM9 3h5v1h-5zM2 4h1v1h-1zM8 4h2v1h-2zM14 4h1v1h-1zM0 5h8v1h-8zM12 5h2v1h-2zM15 5h1v1h-1zM0 6h1v1h-1zM12 6h1v1h-1zM14 6h2v1h-2zM0 7h1v1h-1zM2 7h1v1h-1zM13 7h1v1h-1zM15 7h1v1h-1zM1 8h1v1h-1zM3 8h1v1h-1zM6 8h1v1h-1zM8 8h1v1h-1zM15 8h1v1h-1zM2 9h1v1h-1zM4 9h3v1h-3zM14 9h1v1h-1zM2 10h1v1h-1zM11 10h3v1h-3zM3 11h1v1h-1zM12 11h1v1h-1zM4 12h2v1h-2zM10 12h2v1h-2zM6 13h4v1h-4z"/><path fill="#00ff00" d="M6 1h1v1h-1zM6 2h1v1h-1zM3 3h1v1h-1zM7 3h1v1h-1zM3 4h1v1h-1zM7 4h1v1h-1zM8 9h1v1h-1zM8 10h1v1h-1zM8 11h2v1h-2zM9 12h1v1h-1z"/><path fill="#ffff00" d="M7 1h1v1h-1zM7 2h1v1h-1zM7 11h1v1h-1zM8 12h1v1h-1z"/><path fill="#e7e3e7" d="M8 1h2v1h-2zM8 2h1v1h-1zM11 4h1v1h-1zM13 4h1v1h-1zM8 5h1v1h-1zM10 5h1v1h-1zM14 5h1v1h-1zM8 6h1v1h-1zM10 6h1v1h-1zM1 7h1v1h-1zM3 7h1v1h-1zM5 7h1v1h-1zM7 7h1v1h-1zM9 7h1v1h-1zM2 8h1v1h-1zM4 8h2v1h-2zM7 8h1v1h-1zM7 9h1v1h-1zM6 10h1v1h-1zM6 11h1v1h-1zM6 12h1v1h-1z"/><path fill="#008284" d="M4 2h1v1h-1zM4 3h1v1h-1zM4 4h1v1h-1zM11 11h1v1h-1z"/><path fill="#0000ff" d="M5 2h1v1h-1zM5 3h2v1h-2zM5 4h2v1h-2zM9 9h1v1h-1zM9 10h2v1h-2zM10 11h1v1h-1z"/><path fill="#ffffff" d="M9 2h2v1h-2zM10 4h1v1h-1zM12 4h1v1h-1zM9 5h1v1h-1zM11 5h1v1h-1zM1 6h7v1h-7zM9 6h1v1h-1zM11 6h1v1h-1zM13 6h1v1h-1zM4 7h1v1h-1zM6 7h1v1h-1zM8 7h1v1h-1zM10 7h3v1h-3zM14 7h1v1h-1zM9 8h6v1h-6zM3 9h1v1h-1zM10 9h4v1h-4zM3 10h3v1h-3zM4 11h2v1h-2z"/><path fill="#848200" d="M8 3h1v1h-1zM7 10h1v1h-1zM7 12h1v1h-1z"/></svg>
<div style="left:426px;top:320px;width:10px;height:1px;background:repeating-linear-gradient(to right,#848284 0 1px,transparent 1px 2px) 0px 0"></div><svg style="left:436px;top:314px" width="16" height="12" shape-rendering="crispEdges"><path fill="#000000" d="M6 0h1v1h-1zM5 1h1v1h-1zM7 1h1v1h-1zM4 2h1v1h-1zM8 2h1v1h-1zM3 3h1v1h-1zM9 3h1v1h-1zM2 4h1v1h-1zM9 4h1v1h-1zM12 4h2v1h-2zM1 5h1v1h-1zM9 5h1v1h-1zM11 5h1v1h-1zM14 5h1v1h-1zM0 6h1v1h-1zM5 6h6v1h-6zM15 6h1v1h-1zM0 7h1v1h-1zM4 7h1v1h-1zM12 7h1v1h-1zM15 7h1v1h-1zM1 8h1v1h-1zM5 8h1v1h-1zM7 8h1v1h-1zM9 8h2v1h-2zM15 8h1v1h-1zM2 9h1v1h-1zM6 9h1v1h-1zM8 9h1v1h-1zM11 9h1v1h-1zM14 9h1v1h-1zM3 10h1v1h-1zM5 10h1v1h-1zM12 10h2v1h-2zM4 11h1v1h-1z"/><path fill="#00ffff" d="M6 1h1v1h-1zM5 2h3v1h-3zM4 3h5v1h-5zM3 4h5v1h-5zM2 5h5v1h-5zM1 6h4v1h-4zM2 7h2v1h-2zM4 8h1v1h-1z"/><path fill="#0000ff" d="M8 4h1v1h-1zM7 5h2v1h-2zM1 7h1v1h-1zM2 8h2v1h-2zM3 9h3v1h-3zM4 10h1v1h-1z"/><path fill="#ffffff" d="M12 5h2v1h-2zM11 6h1v1h-1zM5 7h1v1h-1z"/><path fill="#848200" d="M12 6h3v1h-3zM6 7h6v1h-6zM13 7h2v1h-2zM6 8h1v1h-1zM8 8h1v1h-1zM11 8h4v1h-4zM12 9h2v1h-2z"/></svg>
<span class="t" style="left:646px;top:314px;font-size:12px;line-height:12px;color:#000000;transform:scaleX(0.8766);">JOBCODE_TBL</span>
<div style="left:376px;top:596px;width:646px;height:15px;overflow:hidden;background:#c6c3c6"><div style="left:0px;top:0px;width:16px;height:16px;background:#c6c3c6;"></div>
<div style="left:0px;top:0px;width:16px;height:1px;background:#c6c3c6;"></div>
<div style="left:0px;top:0px;width:1px;height:16px;background:#c6c3c6;"></div>
<div style="left:0px;top:15px;width:16px;height:1px;background:#000000;"></div>
<div style="left:15px;top:0px;width:1px;height:16px;background:#000000;"></div>
<div style="left:1px;top:1px;width:14px;height:1px;background:#ffffff;"></div>
<div style="left:1px;top:1px;width:1px;height:14px;background:#ffffff;"></div>
<div style="left:1px;top:14px;width:14px;height:1px;background:#848284;"></div>
<div style="left:14px;top:1px;width:1px;height:14px;background:#848284;"></div>
<div style="left:16px;top:0px;width:551px;height:16px;background:#c6c3c6;"></div>
<div style="left:16px;top:0px;width:551px;height:1px;background:#c6c3c6;"></div>
<div style="left:16px;top:0px;width:1px;height:16px;background:#c6c3c6;"></div>
<div style="left:16px;top:15px;width:551px;height:1px;background:#000000;"></div>
<div style="left:566px;top:0px;width:1px;height:16px;background:#000000;"></div>
<div style="left:17px;top:1px;width:549px;height:1px;background:#ffffff;"></div>
<div style="left:17px;top:1px;width:1px;height:14px;background:#ffffff;"></div>
<div style="left:17px;top:14px;width:549px;height:1px;background:#848284;"></div>
<div style="left:565px;top:1px;width:1px;height:14px;background:#848284;"></div>
<div style="left:631px;top:0px;width:16px;height:16px;background:#c6c3c6;"></div>
<div style="left:631px;top:0px;width:16px;height:1px;background:#c6c3c6;"></div>
<div style="left:631px;top:0px;width:1px;height:16px;background:#c6c3c6;"></div>
<div style="left:631px;top:15px;width:16px;height:1px;background:#000000;"></div>
<div style="left:646px;top:0px;width:1px;height:16px;background:#000000;"></div>
<div style="left:632px;top:1px;width:14px;height:1px;background:#ffffff;"></div>
<div style="left:632px;top:1px;width:1px;height:14px;background:#ffffff;"></div>
<div style="left:632px;top:14px;width:14px;height:1px;background:#848284;"></div>
<div style="left:645px;top:1px;width:1px;height:14px;background:#848284;"></div>
<div style="left:567px;top:0;width:64px;height:16px;background:conic-gradient(#fff 25%,#c6c3c6 0 50%,#fff 0 75%,#c6c3c6 0) 1px 0/2px 2px"></div><svg style="left:5px;top:4px" width="4" height="7" shape-rendering="crispEdges"><path d="M3 0h1v7h-1zM2 1h1v5h-1zM1 2h1v3h-1zM0 3h1v1h-1z"/></svg>
<svg style="left:637px;top:4px" width="4" height="7" shape-rendering="crispEdges"><path d="M0 0h1v7h-1zM1 1h1v5h-1zM2 2h1v3h-1zM3 3h1v1h-1z"/></svg>
</div>
<div style="left:0px;top:616px;width:1024px;height:1px;background:#848284;"></div>
<div style="left:0px;top:617px;width:1024px;height:1px;background:#000000;"></div>
<div style="left:11px;top:628px;width:1003px;height:1px;background:#000000;"></div>
<div style="left:11px;top:628px;width:1px;height:109px;background:#000000;"></div>
<div style="left:11px;top:736px;width:1003px;height:1px;background:#000000;"></div>
<div style="left:1013px;top:628px;width:1px;height:109px;background:#000000;"></div>
<div style="left:12px;top:629px;width:1001px;height:1px;background:#848284;"></div>
<div style="left:12px;top:629px;width:1px;height:107px;background:#848284;"></div>
<div style="left:12px;top:735px;width:1001px;height:1px;background:#ffffff;"></div>
<div style="left:1012px;top:629px;width:1px;height:107px;background:#ffffff;"></div>
<div style="left:1011px;top:630px;width:1px;height:106px;background:#ffffff;"></div>
<div style="left:13px;top:630px;width:999px;height:1px;background:#000000;"></div>
<div style="left:13px;top:630px;width:1px;height:105px;background:#000000;"></div>
<div style="left:14px;top:631px;width:981px;height:88px;background:#ffffff;"></div>
<div style="left:13px;top:719px;width:998px;height:1px;background:#000000;"></div>
<div style="left:995px;top:631px;width:16px;height:88px;background:#c6c3c6;"></div>
<div style="left:995px;top:631px;width:16px;height:16px;background:#c6c3c6;"></div>
<div style="left:995px;top:631px;width:16px;height:1px;background:#c6c3c6;"></div>
<div style="left:995px;top:631px;width:1px;height:16px;background:#c6c3c6;"></div>
<div style="left:995px;top:646px;width:16px;height:1px;background:#000000;"></div>
<div style="left:1010px;top:631px;width:1px;height:16px;background:#000000;"></div>
<div style="left:996px;top:632px;width:14px;height:1px;background:#ffffff;"></div>
<div style="left:996px;top:632px;width:1px;height:14px;background:#ffffff;"></div>
<div style="left:996px;top:645px;width:14px;height:1px;background:#848284;"></div>
<div style="left:1009px;top:632px;width:1px;height:14px;background:#848284;"></div>
<div style="left:995px;top:703px;width:16px;height:16px;background:#c6c3c6;"></div>
<div style="left:995px;top:703px;width:16px;height:1px;background:#c6c3c6;"></div>
<div style="left:995px;top:703px;width:1px;height:16px;background:#c6c3c6;"></div>
<div style="left:995px;top:718px;width:16px;height:1px;background:#000000;"></div>
<div style="left:1010px;top:703px;width:1px;height:16px;background:#000000;"></div>
<div style="left:996px;top:704px;width:14px;height:1px;background:#ffffff;"></div>
<div style="left:996px;top:704px;width:1px;height:14px;background:#ffffff;"></div>
<div style="left:996px;top:717px;width:14px;height:1px;background:#848284;"></div>
<div style="left:1009px;top:704px;width:1px;height:14px;background:#848284;"></div>
<div style="left:995px;top:646px;width:16px;height:56px;background:#c6c3c6;"></div>
<div style="left:995px;top:646px;width:16px;height:1px;background:#c6c3c6;"></div>
<div style="left:995px;top:646px;width:1px;height:56px;background:#c6c3c6;"></div>
<div style="left:995px;top:701px;width:16px;height:1px;background:#000000;"></div>
<div style="left:1010px;top:646px;width:1px;height:56px;background:#000000;"></div>
<div style="left:996px;top:647px;width:14px;height:1px;background:#ffffff;"></div>
<div style="left:996px;top:647px;width:1px;height:54px;background:#ffffff;"></div>
<div style="left:996px;top:700px;width:14px;height:1px;background:#848284;"></div>
<div style="left:1009px;top:647px;width:1px;height:54px;background:#848284;"></div>
<div style="left:995px;top:702px;width:16px;height:1px;background:conic-gradient(#fff 25%,#c6c3c6 0 50%,#fff 0 75%,#c6c3c6 0) 1px 0px/2px 2px"></div>
<div style="left:1010px;top:631px;width:1px;height:89px;background:#000000;"></div><svg style="left:999px;top:637px" width="7" height="4" shape-rendering="crispEdges"><path d="M3 0h1v1h-1zM2 1h3v1h-3zM1 2h5v1h-5zM0 3h7v1h-7z"/></svg>
<svg style="left:999px;top:709px" width="7" height="4" shape-rendering="crispEdges"><path d="M0 0h7v1h-7zM1 1h5v1h-5zM2 2h3v1h-3zM3 3h1v1h-1z"/></svg>
<span class="t" style="left:15.5px;top:647px;font-size:12px;line-height:12px;color:#000000;transform:scaleX(0.8840);">Begin validating Component Interface integrity</span>
<span class="t" style="left:21.5px;top:662px;font-size:12px;line-height:12px;color:#000000;transform:scaleX(0.8822);">No errors found.</span>
<span class="t" style="left:15.5px;top:677px;font-size:12px;line-height:12px;color:#000000;transform:scaleX(0.8884);">End Component Interface validation</span>
<div style="left:14px;top:720px;width:16px;height:1px;background:#ffffff;"></div>
<div style="left:14px;top:720px;width:1px;height:15px;background:#ffffff;"></div>
<div style="left:14px;top:734px;width:16px;height:1px;background:#848284;"></div>
<div style="left:29px;top:720px;width:1px;height:15px;background:#848284;"></div>
<div style="left:30px;top:720px;width:1px;height:15px;background:#000000;"></div>
<div style="left:31px;top:720px;width:16px;height:1px;background:#ffffff;"></div>
<div style="left:31px;top:720px;width:1px;height:15px;background:#ffffff;"></div>
<div style="left:31px;top:734px;width:16px;height:1px;background:#848284;"></div>
<div style="left:46px;top:720px;width:1px;height:15px;background:#848284;"></div>
<div style="left:47px;top:720px;width:1px;height:15px;background:#000000;"></div><svg style="left:18px;top:722px" width="6" height="11" shape-rendering="crispEdges"><path d="M5 0h1v11h-1zM4 1h1v9h-1zM3 2h1v7h-1zM2 3h1v5h-1zM1 4h1v3h-1zM0 5h1v1h-1z" fill="#848284"/></svg>
<svg style="left:36px;top:722px" width="6" height="11" shape-rendering="crispEdges"><path d="M0 0h1v11h-1zM1 1h1v9h-1zM2 2h1v7h-1zM3 3h1v5h-1zM4 4h1v3h-1zM5 5h1v1h-1z" fill="#848284"/></svg>
<svg style="left:48px;top:719px" width="330" height="17"><path d="M265 0H319.5V1.5L313.5 15.5H270.5L265.4 1z" fill="#fff"/><path d="M6.5 15.5H38M47 15.5H158.5M167.5 15.5H213M221.5 15.5H262" fill="none" stroke="#848284"/><path d="M0.5 1L6.5 15.5M38 15.5L41.5 1L47 15.5M158.5 15.5L162 1L167.5 15.5M213 15.5L216.3 1L221.5 15.5M262 15.5L265.4 1L270.5 15.5M313.5 15.5L319 1" fill="none" stroke="#000"/></svg>
<span class="t" style="left:58.5px;top:722px;font-size:12px;line-height:12px;color:#000000;transform:scaleX(0.7869);">Build</span>
<span class="t" style="left:101.5px;top:722px;font-size:12px;line-height:12px;color:#000000;transform:scaleX(0.7695);">Find Object References</span>
<span class="t" style="left:220px;top:722px;font-size:12px;line-height:12px;color:#000000;transform:scaleX(0.7604);">Upgrade</span>
<span class="t" style="left:273.5px;top:722px;font-size:12px;line-height:12px;color:#000000;transform:scaleX(0.7622);">Results</span>
<span class="t" style="left:321px;top:722px;font-size:12px;line-height:12px;color:#000000;transform:scaleX(0.8157);font-weight:bold;">Validate</span>
<div style="left:0px;top:748px;width:1024px;height:1px;background:#848284;"></div>
<div style="left:0px;top:749px;width:1024px;height:1px;background:#ffffff;"></div><span class="t" style="left:2px;top:754px;font-size:12px;line-height:12px;color:#000000;transform:scaleX(0.8937);">Ready</span>
<div style="left:811px;top:752px;width:77px;height:1px;background:#848284;"></div>
<div style="left:811px;top:752px;width:1px;height:14px;background:#848284;"></div>
<div style="left:811px;top:765px;width:77px;height:1px;background:#ffffff;"></div>
<div style="left:887px;top:752px;width:1px;height:14px;background:#ffffff;"></div>
<div style="left:890px;top:752px;width:28px;height:1px;background:#848284;"></div>
<div style="left:890px;top:752px;width:1px;height:14px;background:#848284;"></div>
<div style="left:890px;top:765px;width:28px;height:1px;background:#ffffff;"></div>
<div style="left:917px;top:752px;width:1px;height:14px;background:#ffffff;"></div>
<div style="left:919px;top:752px;width:32px;height:1px;background:#848284;"></div>
<div style="left:919px;top:752px;width:1px;height:14px;background:#848284;"></div>
<div style="left:919px;top:765px;width:32px;height:1px;background:#ffffff;"></div>
<div style="left:950px;top:752px;width:1px;height:14px;background:#ffffff;"></div>
<div style="left:952px;top:752px;width:35px;height:1px;background:#848284;"></div>
<div style="left:952px;top:752px;width:1px;height:14px;background:#848284;"></div>
<div style="left:952px;top:765px;width:35px;height:1px;background:#ffffff;"></div>
<div style="left:986px;top:752px;width:1px;height:14px;background:#ffffff;"></div>
<div style="left:988px;top:752px;width:36px;height:1px;background:#848284;"></div>
<div style="left:988px;top:752px;width:1px;height:14px;background:#848284;"></div>
<div style="left:988px;top:765px;width:36px;height:1px;background:#ffffff;"></div>
<div style="left:1023px;top:752px;width:1px;height:14px;background:#ffffff;"></div><span class="t" style="left:813px;top:754px;font-size:12px;line-height:12px;color:#000000;transform:scaleX(0.8996);">H817OSUN</span>
<div style="left:303px;top:199px;width:417px;height:370px;background:#c6c3c6;"></div>
<div style="left:303px;top:199px;width:417px;height:1px;background:#c6c3c6;"></div>
<div style="left:303px;top:199px;width:1px;height:370px;background:#c6c3c6;"></div>
<div style="left:303px;top:568px;width:417px;height:1px;background:#000000;"></div>
<div style="left:719px;top:199px;width:1px;height:370px;background:#000000;"></div>
<div style="left:304px;top:200px;width:415px;height:1px;background:#ffffff;"></div>
<div style="left:304px;top:200px;width:1px;height:368px;background:#ffffff;"></div>
<div style="left:304px;top:567px;width:415px;height:1px;background:#848284;"></div>
<div style="left:718px;top:200px;width:1px;height:368px;background:#848284;"></div>
<div style="left:306px;top:202px;width:411px;height:18px;background:#000084;"></div><span class="t" style="left:308.75px;top:205px;font-size:12px;line-height:12px;color:#ffffff;transform:scaleX(0.9451);font-weight:bold;">Component</span>
<span class="t" style="left:376.25px;top:205px;font-size:12px;line-height:12px;color:#ffffff;transform:scaleX(1.0194);font-weight:bold;">Interface</span>
<span class="t" style="left:431.75px;top:205px;font-size:12px;line-height:12px;color:#ffffff;transform:scaleX(0.9889);font-weight:bold;">Tester</span>
<span class="t" style="left:471.25px;top:205px;font-size:12px;line-height:12px;color:#ffffff;transform:scaleX(1.1875);font-weight:bold;">-</span>
<span class="t" style="left:479px;top:205px;font-size:12px;line-height:12px;color:#ffffff;transform:scaleX(1.0265);font-weight:bold;">Enter</span>
<span class="t" style="left:513.5px;top:205px;font-size:12px;line-height:12px;color:#ffffff;transform:scaleX(1.0484);font-weight:bold;">key</span>
<span class="t" style="left:537.25px;top:205px;font-size:12px;line-height:12px;color:#ffffff;transform:scaleX(0.9643);font-weight:bold;">values,</span>
<span class="t" style="left:582.25px;top:205px;font-size:12px;line-height:12px;color:#ffffff;transform:scaleX(0.9639);font-weight:bold;">choose</span>
<span class="t" style="left:626.75px;top:205px;font-size:12px;line-height:12px;color:#ffffff;transform:scaleX(0.9719);font-weight:bold;">function</span>
<div style="left:699px;top:204px;width:16px;height:14px;background:#c6c3c6;"></div>
<div style="left:699px;top:204px;width:16px;height:1px;background:#ffffff;"></div>
<div style="left:699px;top:204px;width:1px;height:14px;background:#ffffff;"></div>
<div style="left:699px;top:217px;width:16px;height:1px;background:#000000;"></div>
<div style="left:714px;top:204px;width:1px;height:14px;background:#000000;"></div>
<div style="left:700px;top:216px;width:14px;height:1px;background:#848284;"></div>
<div style="left:713px;top:205px;width:1px;height:12px;background:#848284;"></div><svg style="left:703px;top:207px" width="8" height="7" shape-rendering="crispEdges"><path d="M0 0h2v1h-2zM6 0h2v1h-2zM1 1h2v1h-2zM5 1h2v1h-2zM2 2h4v1h-4zM3 3h2v1h-2zM2 4h4v1h-4zM1 5h2v1h-2zM5 5h2v1h-2zM0 6h2v1h-2zM6 6h2v1h-2z" fill="#000"/></svg>
<div style="left:312px;top:236px;width:397px;height:1px;background:#ffffff;"></div>
<div style="left:312px;top:236px;width:1px;height:79px;background:#ffffff;"></div>
<div style="left:312px;top:314px;width:397px;height:1px;background:#ffffff;"></div>
<div style="left:708px;top:236px;width:1px;height:79px;background:#ffffff;"></div>
<div style="left:311px;top:235px;width:397px;height:1px;background:#848284;"></div>
<div style="left:311px;top:235px;width:1px;height:79px;background:#848284;"></div>
<div style="left:311px;top:313px;width:397px;height:1px;background:#848284;"></div>
<div style="left:707px;top:235px;width:1px;height:79px;background:#848284;"></div>
<div style="left:312px;top:236px;width:395px;height:1px;background:#ffffff;"></div>
<div style="left:312px;top:236px;width:1px;height:77px;background:#ffffff;"></div>
<div style="left:318px;top:231px;width:262px;height:10px;background:#c6c3c6;"></div><span class="t" style="left:320px;top:230px;font-size:12px;line-height:12px;color:#000000;transform:scaleX(0.8851);">'Get' keys for Component Interface (double-click to set)</span>
<div style="left:317px;top:245px;width:277px;height:61px;background:#ffffff;"></div>
<div style="left:317px;top:245px;width:277px;height:1px;background:#848284;"></div>
<div style="left:317px;top:245px;width:1px;height:61px;background:#848284;"></div>
<div style="left:317px;top:305px;width:277px;height:1px;background:#ffffff;"></div>
<div style="left:593px;top:245px;width:1px;height:61px;background:#ffffff;"></div>
<div style="left:318px;top:246px;width:275px;height:1px;background:#000000;"></div>
<div style="left:318px;top:246px;width:1px;height:59px;background:#000000;"></div>
<div style="left:318px;top:304px;width:275px;height:1px;background:#c6c3c6;"></div>
<div style="left:592px;top:246px;width:1px;height:59px;background:#c6c3c6;"></div><svg style="left:319px;top:250px" width="16" height="12" shape-rendering="crispEdges"><path fill="#000000" d="M6 0h1v1h-1zM5 1h1v1h-1zM7 1h1v1h-1zM4 2h1v1h-1zM8 2h1v1h-1zM3 3h1v1h-1zM9 3h1v1h-1zM2 4h1v1h-1zM9 4h1v1h-1zM12 4h2v1h-2zM1 5h1v1h-1zM9 5h1v1h-1zM11 5h1v1h-1zM14 5h1v1h-1zM0 6h1v1h-1zM5 6h6v1h-6zM15 6h1v1h-1zM0 7h1v1h-1zM4 7h1v1h-1zM12 7h1v1h-1zM15 7h1v1h-1zM1 8h1v1h-1zM5 8h1v1h-1zM7 8h1v1h-1zM9 8h2v1h-2zM15 8h1v1h-1zM2 9h1v1h-1zM6 9h1v1h-1zM8 9h1v1h-1zM11 9h1v1h-1zM14 9h1v1h-1zM3 10h1v1h-1zM5 10h1v1h-1zM12 10h2v1h-2zM4 11h1v1h-1z"/><path fill="#00ffff" d="M6 1h1v1h-1zM5 2h3v1h-3zM4 3h5v1h-5zM3 4h5v1h-5zM2 5h5v1h-5zM1 6h4v1h-4zM2 7h2v1h-2zM4 8h1v1h-1z"/><path fill="#0000ff" d="M8 4h1v1h-1zM7 5h2v1h-2zM1 7h1v1h-1zM2 8h2v1h-2zM3 9h3v1h-3zM4 10h1v1h-1z"/><path fill="#ffffff" d="M12 5h2v1h-2zM11 6h1v1h-1zM5 7h1v1h-1z"/><path fill="#848200" d="M12 6h3v1h-3zM6 7h6v1h-6zM13 7h2v1h-2zM6 8h1v1h-1zM8 8h1v1h-1zM11 8h4v1h-4zM12 9h2v1h-2z"/></svg>
<span class="t" style="left:340px;top:249px;font-size:12px;line-height:12px;color:#000000;transform:scaleX(0.8618);">JOBCODE</span>
<svg style="left:319px;top:266px" width="16" height="12" shape-rendering="crispEdges"><path fill="#000000" d="M6 0h1v1h-1zM5 1h1v1h-1zM7 1h1v1h-1zM4 2h1v1h-1zM8 2h1v1h-1zM3 3h1v1h-1zM9 3h1v1h-1zM2 4h1v1h-1zM9 4h1v1h-1zM12 4h2v1h-2zM1 5h1v1h-1zM9 5h1v1h-1zM11 5h1v1h-1zM14 5h1v1h-1zM0 6h1v1h-1zM5 6h6v1h-6zM15 6h1v1h-1zM0 7h1v1h-1zM4 7h1v1h-1zM12 7h1v1h-1zM15 7h1v1h-1zM1 8h1v1h-1zM5 8h1v1h-1zM7 8h1v1h-1zM9 8h2v1h-2zM15 8h1v1h-1zM2 9h1v1h-1zM6 9h1v1h-1zM8 9h1v1h-1zM11 9h1v1h-1zM14 9h1v1h-1zM3 10h1v1h-1zM5 10h1v1h-1zM12 10h2v1h-2zM4 11h1v1h-1z"/><path fill="#00ffff" d="M6 1h1v1h-1zM5 2h3v1h-3zM4 3h5v1h-5zM3 4h5v1h-5zM2 5h5v1h-5zM1 6h4v1h-4zM2 7h2v1h-2zM4 8h1v1h-1z"/><path fill="#0000ff" d="M8 4h1v1h-1zM7 5h2v1h-2zM1 7h1v1h-1zM2 8h2v1h-2zM3 9h3v1h-3zM4 10h1v1h-1z"/><path fill="#ffffff" d="M12 5h2v1h-2zM11 6h1v1h-1zM5 7h1v1h-1z"/><path fill="#848200" d="M12 6h3v1h-3zM6 7h6v1h-6zM13 7h2v1h-2zM6 8h1v1h-1zM8 8h1v1h-1zM11 8h4v1h-4zM12 9h2v1h-2z"/></svg>
<div style="left:338px;top:263px;width:254px;height:16px;background:#c6c3c6;"></div><span class="t" style="left:341px;top:265px;font-size:12px;line-height:12px;color:#000000;transform:scaleX(0.8912);">SETID</span>
<div style="left:483px;top:247px;width:1px;height:32px;background:#848284;"></div>
<div style="left:319px;top:278px;width:273px;height:1px;background:#848284;"></div>
<div style="left:620px;top:245px;width:75px;height:26px;background:#c6c3c6;"></div>
<div style="left:620px;top:245px;width:75px;height:1px;background:#000000;"></div>
<div style="left:620px;top:245px;width:1px;height:26px;background:#000000;"></div>
<div style="left:620px;top:270px;width:75px;height:1px;background:#000000;"></div>
<div style="left:694px;top:245px;width:1px;height:26px;background:#000000;"></div>
<div style="left:621px;top:246px;width:73px;height:1px;background:#ffffff;"></div>
<div style="left:621px;top:246px;width:1px;height:24px;background:#ffffff;"></div>
<div style="left:621px;top:269px;width:73px;height:1px;background:#000000;"></div>
<div style="left:693px;top:246px;width:1px;height:24px;background:#000000;"></div>
<div style="left:622px;top:268px;width:71px;height:1px;background:#848284;"></div>
<div style="left:692px;top:247px;width:1px;height:22px;background:#848284;"></div><span class="t" style="left:628.5px;top:252px;font-size:12px;line-height:12px;color:#000000;transform:scaleX(0.8809);"><u>G</u>et Existing</span>
<div style="left:312px;top:332px;width:397px;height:1px;background:#ffffff;"></div>
<div style="left:312px;top:332px;width:1px;height:79px;background:#ffffff;"></div>
<div style="left:312px;top:410px;width:397px;height:1px;background:#ffffff;"></div>
<div style="left:708px;top:332px;width:1px;height:79px;background:#ffffff;"></div>
<div style="left:311px;top:331px;width:397px;height:1px;background:#848284;"></div>
<div style="left:311px;top:331px;width:1px;height:79px;background:#848284;"></div>
<div style="left:311px;top:409px;width:397px;height:1px;background:#848284;"></div>
<div style="left:707px;top:331px;width:1px;height:79px;background:#848284;"></div>
<div style="left:312px;top:332px;width:395px;height:1px;background:#ffffff;"></div>
<div style="left:312px;top:332px;width:1px;height:77px;background:#ffffff;"></div>
<div style="left:318px;top:327px;width:277px;height:10px;background:#c6c3c6;"></div><span class="t" style="left:320px;top:326px;font-size:12px;line-height:12px;color:#000000;transform:scaleX(0.8843);">'Create' keys for Component Interface (double-click to set)</span>
<div style="left:317px;top:341px;width:277px;height:61px;background:#ffffff;"></div>
<div style="left:317px;top:341px;width:277px;height:1px;background:#848284;"></div>
<div style="left:317px;top:341px;width:1px;height:61px;background:#848284;"></div>
<div style="left:317px;top:401px;width:277px;height:1px;background:#ffffff;"></div>
<div style="left:593px;top:341px;width:1px;height:61px;background:#ffffff;"></div>
<div style="left:318px;top:342px;width:275px;height:1px;background:#000000;"></div>
<div style="left:318px;top:342px;width:1px;height:59px;background:#000000;"></div>
<div style="left:318px;top:400px;width:275px;height:1px;background:#c6c3c6;"></div>
<div style="left:592px;top:342px;width:1px;height:59px;background:#c6c3c6;"></div><svg style="left:319px;top:346px" width="16" height="12" shape-rendering="crispEdges"><path fill="#000000" d="M6 0h1v1h-1zM5 1h1v1h-1zM7 1h1v1h-1zM4 2h1v1h-1zM8 2h1v1h-1zM3 3h1v1h-1zM9 3h1v1h-1zM2 4h1v1h-1zM9 4h1v1h-1zM12 4h2v1h-2zM1 5h1v1h-1zM9 5h1v1h-1zM11 5h1v1h-1zM14 5h1v1h-1zM0 6h1v1h-1zM5 6h6v1h-6zM15 6h1v1h-1zM0 7h1v1h-1zM4 7h1v1h-1zM12 7h1v1h-1zM15 7h1v1h-1zM1 8h1v1h-1zM5 8h1v1h-1zM7 8h1v1h-1zM9 8h2v1h-2zM15 8h1v1h-1zM2 9h1v1h-1zM6 9h1v1h-1zM8 9h1v1h-1zM11 9h1v1h-1zM14 9h1v1h-1zM3 10h1v1h-1zM5 10h1v1h-1zM12 10h2v1h-2zM4 11h1v1h-1z"/><path fill="#00ffff" d="M6 1h1v1h-1zM5 2h3v1h-3zM4 3h5v1h-5zM3 4h5v1h-5zM2 5h5v1h-5zM1 6h4v1h-4zM2 7h2v1h-2zM4 8h1v1h-1z"/><path fill="#0000ff" d="M8 4h1v1h-1zM7 5h2v1h-2zM1 7h1v1h-1zM2 8h2v1h-2zM3 9h3v1h-3zM4 10h1v1h-1z"/><path fill="#ffffff" d="M12 5h2v1h-2zM11 6h1v1h-1zM5 7h1v1h-1z"/><path fill="#848200" d="M12 6h3v1h-3zM6 7h6v1h-6zM13 7h2v1h-2zM6 8h1v1h-1zM8 8h1v1h-1zM11 8h4v1h-4zM12 9h2v1h-2z"/></svg>
<div style="left:338px;top:343px;width:254px;height:16px;background:#000084;"></div><span class="t" style="left:340px;top:345px;font-size:12px;line-height:12px;color:#ffffff;transform:scaleX(0.8618);">JOBCODE</span>
<svg style="left:319px;top:362px" width="16" height="12" shape-rendering="crispEdges"><path fill="#000000" d="M6 0h1v1h-1zM5 1h1v1h-1zM7 1h1v1h-1zM4 2h1v1h-1zM8 2h1v1h-1zM3 3h1v1h-1zM9 3h1v1h-1zM2 4h1v1h-1zM9 4h1v1h-1zM12 4h2v1h-2zM1 5h1v1h-1zM9 5h1v1h-1zM11 5h1v1h-1zM14 5h1v1h-1zM0 6h1v1h-1zM5 6h6v1h-6zM15 6h1v1h-1zM0 7h1v1h-1zM4 7h1v1h-1zM12 7h1v1h-1zM15 7h1v1h-1zM1 8h1v1h-1zM5 8h1v1h-1zM7 8h1v1h-1zM9 8h2v1h-2zM15 8h1v1h-1zM2 9h1v1h-1zM6 9h1v1h-1zM8 9h1v1h-1zM11 9h1v1h-1zM14 9h1v1h-1zM3 10h1v1h-1zM5 10h1v1h-1zM12 10h2v1h-2zM4 11h1v1h-1z"/><path fill="#00ffff" d="M6 1h1v1h-1zM5 2h3v1h-3zM4 3h5v1h-5zM3 4h5v1h-5zM2 5h5v1h-5zM1 6h4v1h-4zM2 7h2v1h-2zM4 8h1v1h-1z"/><path fill="#0000ff" d="M8 4h1v1h-1zM7 5h2v1h-2zM1 7h1v1h-1zM2 8h2v1h-2zM3 9h3v1h-3zM4 10h1v1h-1z"/><path fill="#ffffff" d="M12 5h2v1h-2zM11 6h1v1h-1zM5 7h1v1h-1z"/><path fill="#848200" d="M12 6h3v1h-3zM6 7h6v1h-6zM13 7h2v1h-2zM6 8h1v1h-1zM8 8h1v1h-1zM11 8h4v1h-4zM12 9h2v1h-2z"/></svg>
<span class="t" style="left:341px;top:361px;font-size:12px;line-height:12px;color:#000000;transform:scaleX(0.8912);">SETID</span>
<div style="left:483px;top:343px;width:1px;height:32px;background:#848284;"></div>
<div style="left:319px;top:374px;width:273px;height:1px;background:#848284;"></div>
<div style="left:484px;top:342px;width:84px;height:18px;background:#ffffff;"></div>
<div style="left:484px;top:342px;width:84px;height:1px;background:#000000;"></div>
<div style="left:484px;top:342px;width:1px;height:18px;background:#000000;"></div>
<div style="left:484px;top:359px;width:84px;height:1px;background:#000000;"></div>
<div style="left:567px;top:342px;width:1px;height:18px;background:#000000;"></div><span class="t" style="left:485.5px;top:345px;font-size:12px;line-height:12px;color:#000000;transform:scaleX(0.8617);">MYJOBCODE</span>
<div style="left:552px;top:344px;width:2px;height:13px;background:#000000;"></div><span class="t" style="left:487.5px;top:361px;font-size:12px;line-height:12px;color:#000000;transform:scaleX(0.8949);">SHARE</span>
<div style="left:620px;top:341px;width:75px;height:24px;background:#c6c3c6;"></div>
<div style="left:620px;top:341px;width:75px;height:1px;background:#ffffff;"></div>
<div style="left:620px;top:341px;width:1px;height:24px;background:#ffffff;"></div>
<div style="left:620px;top:364px;width:75px;height:1px;background:#000000;"></div>
<div style="left:694px;top:341px;width:1px;height:24px;background:#000000;"></div>
<div style="left:621px;top:363px;width:73px;height:1px;background:#848284;"></div>
<div style="left:693px;top:342px;width:1px;height:22px;background:#848284;"></div><span class="t" style="left:629px;top:347px;font-size:12px;line-height:12px;color:#000000;transform:scaleX(0.8915);">Create <u>N</u>ew</span>
<div style="left:312px;top:426px;width:397px;height:1px;background:#ffffff;"></div>
<div style="left:312px;top:426px;width:1px;height:79px;background:#ffffff;"></div>
<div style="left:312px;top:504px;width:397px;height:1px;background:#ffffff;"></div>
<div style="left:708px;top:426px;width:1px;height:79px;background:#ffffff;"></div>
<div style="left:311px;top:425px;width:397px;height:1px;background:#848284;"></div>
<div style="left:311px;top:425px;width:1px;height:79px;background:#848284;"></div>
<div style="left:311px;top:503px;width:397px;height:1px;background:#848284;"></div>
<div style="left:707px;top:425px;width:1px;height:79px;background:#848284;"></div>
<div style="left:312px;top:426px;width:395px;height:1px;background:#ffffff;"></div>
<div style="left:312px;top:426px;width:1px;height:77px;background:#ffffff;"></div>
<div style="left:318px;top:421px;width:266px;height:10px;background:#c6c3c6;"></div><span class="t" style="left:320px;top:420px;font-size:12px;line-height:12px;color:#000000;transform:scaleX(0.8867);">'Find' keys for Component Interface (double-click to set)</span>
<div style="left:317px;top:436px;width:278px;height:62px;background:#ffffff;"></div>
<div style="left:317px;top:436px;width:278px;height:1px;background:#848284;"></div>
<div style="left:317px;top:436px;width:1px;height:62px;background:#848284;"></div>
<div style="left:317px;top:497px;width:278px;height:1px;background:#ffffff;"></div>
<div style="left:594px;top:436px;width:1px;height:62px;background:#ffffff;"></div>
<div style="left:318px;top:437px;width:276px;height:1px;background:#000000;"></div>
<div style="left:318px;top:437px;width:1px;height:60px;background:#000000;"></div>
<div style="left:318px;top:496px;width:276px;height:1px;background:#c6c3c6;"></div>
<div style="left:593px;top:437px;width:1px;height:60px;background:#c6c3c6;"></div>
<div style="left:338px;top:438px;width:241px;height:16px;background:#c6c3c6;"></div>
<div style="left:319px;top:438px;width:260px;height:43px;overflow:hidden"><svg style="left:0px;top:3px" width="16" height="12" shape-rendering="crispEdges"><path fill="#000000" d="M6 0h1v1h-1zM5 1h1v1h-1zM7 1h1v1h-1zM4 2h1v1h-1zM8 2h1v1h-1zM3 3h1v1h-1zM9 3h1v1h-1zM2 4h1v1h-1zM9 4h1v1h-1zM12 4h2v1h-2zM1 5h1v1h-1zM9 5h1v1h-1zM11 5h1v1h-1zM14 5h1v1h-1zM0 6h1v1h-1zM5 6h6v1h-6zM15 6h1v1h-1zM0 7h1v1h-1zM4 7h1v1h-1zM12 7h1v1h-1zM15 7h1v1h-1zM1 8h1v1h-1zM5 8h1v1h-1zM7 8h1v1h-1zM9 8h2v1h-2zM15 8h1v1h-1zM2 9h1v1h-1zM6 9h1v1h-1zM8 9h1v1h-1zM11 9h1v1h-1zM14 9h1v1h-1zM3 10h1v1h-1zM5 10h1v1h-1zM12 10h2v1h-2zM4 11h1v1h-1z"/><path fill="#00ffff" d="M6 1h1v1h-1zM5 2h3v1h-3zM4 3h5v1h-5zM3 4h5v1h-5zM2 5h5v1h-5zM1 6h4v1h-4zM2 7h2v1h-2zM4 8h1v1h-1z"/><path fill="#0000ff" d="M8 4h1v1h-1zM7 5h2v1h-2zM1 7h1v1h-1zM2 8h2v1h-2zM3 9h3v1h-3zM4 10h1v1h-1z"/><path fill="#ffffff" d="M12 5h2v1h-2zM11 6h1v1h-1zM5 7h1v1h-1z"/><path fill="#848200" d="M12 6h3v1h-3zM6 7h6v1h-6zM13 7h2v1h-2zM6 8h1v1h-1zM8 8h1v1h-1zM11 8h4v1h-4zM12 9h2v1h-2z"/></svg>
<svg style="left:0px;top:19px" width="16" height="12" shape-rendering="crispEdges"><path fill="#000000" d="M6 0h1v1h-1zM5 1h1v1h-1zM7 1h1v1h-1zM4 2h1v1h-1zM8 2h1v1h-1zM3 3h1v1h-1zM9 3h1v1h-1zM2 4h1v1h-1zM9 4h1v1h-1zM12 4h2v1h-2zM1 5h1v1h-1zM9 5h1v1h-1zM11 5h1v1h-1zM14 5h1v1h-1zM0 6h1v1h-1zM5 6h6v1h-6zM15 6h1v1h-1zM0 7h1v1h-1zM4 7h1v1h-1zM12 7h1v1h-1zM15 7h1v1h-1zM1 8h1v1h-1zM5 8h1v1h-1zM7 8h1v1h-1zM9 8h2v1h-2zM15 8h1v1h-1zM2 9h1v1h-1zM6 9h1v1h-1zM8 9h1v1h-1zM11 9h1v1h-1zM14 9h1v1h-1zM3 10h1v1h-1zM5 10h1v1h-1zM12 10h2v1h-2zM4 11h1v1h-1z"/><path fill="#00ffff" d="M6 1h1v1h-1zM5 2h3v1h-3zM4 3h5v1h-5zM3 4h5v1h-5zM2 5h5v1h-5zM1 6h4v1h-4zM2 7h2v1h-2zM4 8h1v1h-1z"/><path fill="#0000ff" d="M8 4h1v1h-1zM7 5h2v1h-2zM1 7h1v1h-1zM2 8h2v1h-2zM3 9h3v1h-3zM4 10h1v1h-1z"/><path fill="#ffffff" d="M12 5h2v1h-2zM11 6h1v1h-1zM5 7h1v1h-1z"/><path fill="#848200" d="M12 6h3v1h-3zM6 7h6v1h-6zM13 7h2v1h-2zM6 8h1v1h-1zM8 8h1v1h-1zM11 8h4v1h-4zM12 9h2v1h-2z"/></svg>
<svg style="left:0px;top:35px" width="16" height="12" shape-rendering="crispEdges"><path fill="#000000" d="M6 0h1v1h-1zM5 1h1v1h-1zM7 1h1v1h-1zM4 2h1v1h-1zM8 2h1v1h-1zM3 3h1v1h-1zM9 3h1v1h-1zM2 4h1v1h-1zM9 4h1v1h-1zM12 4h2v1h-2zM1 5h1v1h-1zM9 5h1v1h-1zM11 5h1v1h-1zM14 5h1v1h-1zM0 6h1v1h-1zM5 6h6v1h-6zM15 6h1v1h-1zM0 7h1v1h-1zM4 7h1v1h-1zM12 7h1v1h-1zM15 7h1v1h-1zM1 8h1v1h-1zM5 8h1v1h-1zM7 8h1v1h-1zM9 8h2v1h-2zM15 8h1v1h-1zM2 9h1v1h-1zM6 9h1v1h-1zM8 9h1v1h-1zM11 9h1v1h-1zM14 9h1v1h-1zM3 10h1v1h-1zM5 10h1v1h-1zM12 10h2v1h-2zM4 11h1v1h-1z"/><path fill="#00ffff" d="M6 1h1v1h-1zM5 2h3v1h-3zM4 3h5v1h-5zM3 4h5v1h-5zM2 5h5v1h-5zM1 6h4v1h-4zM2 7h2v1h-2zM4 8h1v1h-1z"/><path fill="#0000ff" d="M8 4h1v1h-1zM7 5h2v1h-2zM1 7h1v1h-1zM2 8h2v1h-2zM3 9h3v1h-3zM4 10h1v1h-1z"/><path fill="#ffffff" d="M12 5h2v1h-2zM11 6h1v1h-1zM5 7h1v1h-1z"/><path fill="#848200" d="M12 6h3v1h-3zM6 7h6v1h-6zM13 7h2v1h-2zM6 8h1v1h-1zM8 8h1v1h-1zM11 8h4v1h-4zM12 9h2v1h-2z"/></svg>
<div style="left:164px;top:0;width:1px;height:44px;background:#848284"></div></div><span class="t" style="left:341.5px;top:440px;font-size:12px;line-height:12px;color:#000000;transform:scaleX(0.8866);">DESCR</span>
<span class="t" style="left:341.5px;top:456px;font-size:12px;line-height:12px;color:#000000;transform:scaleX(0.8716);">GVT_OCC_SERIES</span>
<div style="left:341.5px;top:472px;width:130px;height:15px;overflow:hidden"><span class="t" style="left:0;top:0;font-size:12px;line-height:12px;color:#000000;transform:scaleX(0.8711);">GVT_OFFICIAL_DESCR</span>
</div>
<div style="left:319px;top:481px;width:275px;height:15px;background:#c6c3c6;"></div>
<div style="left:579px;top:438px;width:15px;height:44px;overflow:hidden;background:#c6c3c6"><div style="left:0px;top:0px;width:16px;height:16px;background:#c6c3c6;"></div>
<div style="left:0px;top:0px;width:16px;height:1px;background:#c6c3c6;"></div>
<div style="left:0px;top:0px;width:1px;height:16px;background:#c6c3c6;"></div>
<div style="left:0px;top:15px;width:16px;height:1px;background:#000000;"></div>
<div style="left:15px;top:0px;width:1px;height:16px;background:#000000;"></div>
<div style="left:1px;top:1px;width:14px;height:1px;background:#ffffff;"></div>
<div style="left:1px;top:1px;width:1px;height:14px;background:#ffffff;"></div>
<div style="left:1px;top:14px;width:14px;height:1px;background:#848284;"></div>
<div style="left:14px;top:1px;width:1px;height:14px;background:#848284;"></div>
<div style="left:0px;top:16px;width:16px;height:8px;background:#c6c3c6;"></div>
<div style="left:0px;top:16px;width:16px;height:1px;background:#c6c3c6;"></div>
<div style="left:0px;top:16px;width:1px;height:8px;background:#c6c3c6;"></div>
<div style="left:0px;top:23px;width:16px;height:1px;background:#000000;"></div>
<div style="left:15px;top:16px;width:1px;height:8px;background:#000000;"></div>
<div style="left:1px;top:17px;width:14px;height:1px;background:#ffffff;"></div>
<div style="left:1px;top:17px;width:1px;height:6px;background:#ffffff;"></div>
<div style="left:1px;top:22px;width:14px;height:1px;background:#848284;"></div>
<div style="left:14px;top:17px;width:1px;height:6px;background:#848284;"></div>
<div style="left:0px;top:28px;width:16px;height:16px;background:#c6c3c6;"></div>
<div style="left:0px;top:28px;width:16px;height:1px;background:#c6c3c6;"></div>
<div style="left:0px;top:28px;width:1px;height:16px;background:#c6c3c6;"></div>
<div style="left:0px;top:43px;width:16px;height:1px;background:#000000;"></div>
<div style="left:15px;top:28px;width:1px;height:16px;background:#000000;"></div>
<div style="left:1px;top:29px;width:14px;height:1px;background:#ffffff;"></div>
<div style="left:1px;top:29px;width:1px;height:14px;background:#ffffff;"></div>
<div style="left:1px;top:42px;width:14px;height:1px;background:#848284;"></div>
<div style="left:14px;top:29px;width:1px;height:14px;background:#848284;"></div>
<div style="left:0;top:24px;width:16px;height:4px;background:conic-gradient(#fff 25%,#c6c3c6 0 50%,#fff 0 75%,#c6c3c6 0) 1px 0/2px 2px"></div><svg style="left:4px;top:5px" width="7" height="4" shape-rendering="crispEdges"><path d="M3 0h1v1h-1zM2 1h3v1h-3zM1 2h5v1h-5zM0 3h7v1h-7z"/></svg>
<svg style="left:4px;top:34px" width="7" height="4" shape-rendering="crispEdges"><path d="M0 0h7v1h-7zM1 1h5v1h-5zM2 2h3v1h-3zM3 3h1v1h-1z"/></svg>
</div>
<div style="left:319px;top:481px;width:261px;height:15px;overflow:hidden;background:#c6c3c6"><div style="left:0px;top:0px;width:17px;height:16px;background:#c6c3c6;"></div>
<div style="left:0px;top:0px;width:17px;height:1px;background:#c6c3c6;"></div>
<div style="left:0px;top:0px;width:1px;height:16px;background:#c6c3c6;"></div>
<div style="left:0px;top:15px;width:17px;height:1px;background:#000000;"></div>
<div style="left:16px;top:0px;width:1px;height:16px;background:#000000;"></div>
<div style="left:1px;top:1px;width:15px;height:1px;background:#ffffff;"></div>
<div style="left:1px;top:1px;width:1px;height:14px;background:#ffffff;"></div>
<div style="left:1px;top:14px;width:15px;height:1px;background:#848284;"></div>
<div style="left:15px;top:1px;width:1px;height:14px;background:#848284;"></div>
<div style="left:17px;top:0px;width:216px;height:16px;background:#c6c3c6;"></div>
<div style="left:17px;top:0px;width:216px;height:1px;background:#c6c3c6;"></div>
<div style="left:17px;top:0px;width:1px;height:16px;background:#c6c3c6;"></div>
<div style="left:17px;top:15px;width:216px;height:1px;background:#000000;"></div>
<div style="left:232px;top:0px;width:1px;height:16px;background:#000000;"></div>
<div style="left:18px;top:1px;width:214px;height:1px;background:#ffffff;"></div>
<div style="left:18px;top:1px;width:1px;height:14px;background:#ffffff;"></div>
<div style="left:18px;top:14px;width:214px;height:1px;background:#848284;"></div>
<div style="left:231px;top:1px;width:1px;height:14px;background:#848284;"></div>
<div style="left:245px;top:0px;width:16px;height:16px;background:#c6c3c6;"></div>
<div style="left:245px;top:0px;width:16px;height:1px;background:#c6c3c6;"></div>
<div style="left:245px;top:0px;width:1px;height:16px;background:#c6c3c6;"></div>
<div style="left:245px;top:15px;width:16px;height:1px;background:#000000;"></div>
<div style="left:260px;top:0px;width:1px;height:16px;background:#000000;"></div>
<div style="left:246px;top:1px;width:14px;height:1px;background:#ffffff;"></div>
<div style="left:246px;top:1px;width:1px;height:14px;background:#ffffff;"></div>
<div style="left:246px;top:14px;width:14px;height:1px;background:#848284;"></div>
<div style="left:259px;top:1px;width:1px;height:14px;background:#848284;"></div>
<div style="left:233px;top:0;width:12px;height:16px;background:conic-gradient(#fff 25%,#c6c3c6 0 50%,#fff 0 75%,#c6c3c6 0) 0 1px/2px 2px"></div><svg style="left:6px;top:4px" width="4" height="7" shape-rendering="crispEdges"><path d="M3 0h1v7h-1zM2 1h1v5h-1zM1 2h1v3h-1zM0 3h1v1h-1z"/></svg>
<svg style="left:251px;top:4px" width="4" height="7" shape-rendering="crispEdges"><path d="M0 0h1v7h-1zM1 1h1v5h-1zM2 2h1v3h-1zM3 3h1v1h-1z"/></svg>
</div>
<div style="left:620px;top:437px;width:75px;height:23px;background:#c6c3c6;"></div>
<div style="left:620px;top:437px;width:75px;height:1px;background:#ffffff;"></div>
<div style="left:620px;top:437px;width:1px;height:23px;background:#ffffff;"></div>
<div style="left:620px;top:459px;width:75px;height:1px;background:#000000;"></div>
<div style="left:694px;top:437px;width:1px;height:23px;background:#000000;"></div>
<div style="left:621px;top:458px;width:73px;height:1px;background:#848284;"></div>
<div style="left:693px;top:438px;width:1px;height:21px;background:#848284;"></div><span class="t" style="left:646.5px;top:442px;font-size:12px;line-height:12px;color:#000000;transform:scaleX(0.8776);"><u>F</u>ind</span>
<div style="left:318px;top:521px;width:13px;height:13px;background:#ffffff;"></div>
<div style="left:318px;top:521px;width:13px;height:1px;background:#848284;"></div>
<div style="left:318px;top:521px;width:1px;height:13px;background:#848284;"></div>
<div style="left:318px;top:533px;width:13px;height:1px;background:#ffffff;"></div>
<div style="left:330px;top:521px;width:1px;height:13px;background:#ffffff;"></div>
<div style="left:319px;top:522px;width:11px;height:1px;background:#000000;"></div>
<div style="left:319px;top:522px;width:1px;height:11px;background:#000000;"></div>
<div style="left:319px;top:532px;width:11px;height:1px;background:#c6c3c6;"></div>
<div style="left:329px;top:522px;width:1px;height:11px;background:#c6c3c6;"></div><svg style="left:321px;top:524px" width="7" height="7" shape-rendering="crispEdges"><path d="M6 0h1v3h-1zM5 1h1v3h-1zM4 2h1v3h-1zM3 3h1v3h-1zM2 4h1v3h-1zM1 3h1v3h-1zM0 2h1v3h-1z"/></svg>
<div style="left:318px;top:541px;width:13px;height:13px;background:#ffffff;"></div>
<div style="left:318px;top:541px;width:13px;height:1px;background:#848284;"></div>
<div style="left:318px;top:541px;width:1px;height:13px;background:#848284;"></div>
<div style="left:318px;top:553px;width:13px;height:1px;background:#ffffff;"></div>
<div style="left:330px;top:541px;width:1px;height:13px;background:#ffffff;"></div>
<div style="left:319px;top:542px;width:11px;height:1px;background:#000000;"></div>
<div style="left:319px;top:542px;width:1px;height:11px;background:#000000;"></div>
<div style="left:319px;top:552px;width:11px;height:1px;background:#c6c3c6;"></div>
<div style="left:329px;top:542px;width:1px;height:11px;background:#c6c3c6;"></div><span class="t" style="left:336px;top:522px;font-size:12px;line-height:12px;color:#000000;transform:scaleX(0.8747);">Interactive Mode (set properties immediately)</span>
<span class="t" style="left:336px;top:542px;font-size:12px;line-height:12px;color:#000000;transform:scaleX(0.8631);">Get History Items</span>
<div style="left:620px;top:533px;width:75px;height:23px;background:#c6c3c6;"></div>
<div style="left:620px;top:533px;width:75px;height:1px;background:#ffffff;"></div>
<div style="left:620px;top:533px;width:1px;height:23px;background:#ffffff;"></div>
<div style="left:620px;top:555px;width:75px;height:1px;background:#000000;"></div>
<div style="left:694px;top:533px;width:1px;height:23px;background:#000000;"></div>
<div style="left:621px;top:554px;width:73px;height:1px;background:#848284;"></div>
<div style="left:693px;top:534px;width:1px;height:21px;background:#848284;"></div><span class="t" style="left:640.5px;top:538px;font-size:12px;line-height:12px;color:#000000;transform:scaleX(0.9101);">Cancel</span>
</body></html>
